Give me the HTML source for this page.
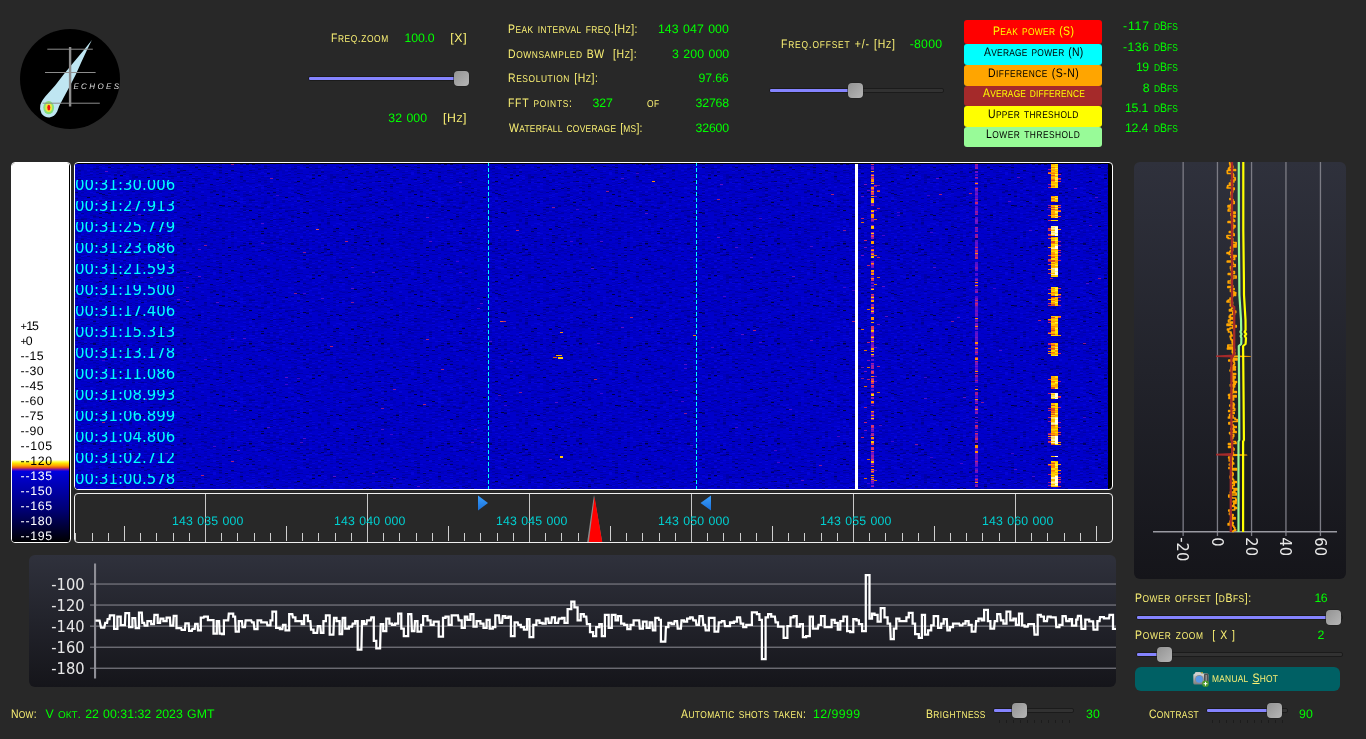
<!DOCTYPE html>
<html lang="en"><head><meta charset="utf-8"><title>Echoes</title>
<style>
html,body{margin:0;padding:0}
body{width:1366px;height:739px;background:#282828;position:relative;overflow:hidden;font-family:"Liberation Sans",sans-serif;font-size:12px}
.t{position:absolute;display:inline-block;transform-origin:0 0;white-space:pre;word-spacing:0.8px;line-height:16px;font-family:"Liberation Sans",sans-serif;font-size:12.3px}
.s{font-size:9.9px;text-transform:uppercase}.p{font-size:11px}
.abs{position:absolute}
svg{position:absolute;overflow:hidden}
.trk{position:absolute;height:3px;border:1px solid #1b1b1b;background:#323232;border-radius:2px}
.fil{position:absolute;height:3px;border:1px solid #1b1b1b;background:#8584ff;border-radius:2px}
.thm{position:absolute;width:15px;height:15px;border-radius:4px;background:linear-gradient(135deg,#939393,#b6b6b6);box-shadow:0 0 0 0.5px #1e1e1e}
.lg{position:absolute;left:964px;width:138px;border-radius:3px}
.panel{position:absolute;border-radius:6px;background:linear-gradient(#2f313c,#15151a)}
.ts{position:absolute;left:0;width:140px;height:12px;overflow:hidden;white-space:pre;color:#00ffff;font-family:"DejaVu Sans",sans-serif;}
</style></head><body>

<svg id="logo" style="left:20px;top:29px" width="100" height="100" viewBox="20 29 100 100">
<circle cx="70" cy="79" r="50" fill="#000"/>
<path d="M91.9 39.9 L83.3 50.7 L73.9 62.1 L64.4 73.4 L54.9 85.8 L45.5 96.2 Q41.2 101.5 40.3 105 Q39.2 109.5 41.5 113.5 Q44.5 117.6 49.4 117.5 Q54.5 116.8 57.2 111.5 L59.2 106 L63.4 98 L70 85.8 L75.8 74.4 L81.4 62.1 L87.1 49.8 Z" fill="#bfe6f2"/>
<ellipse cx="48.7" cy="107.6" rx="5.4" ry="6.6" fill="#86e07c"/>
<ellipse cx="48.7" cy="107.6" rx="3.4" ry="4.4" fill="#eee83c"/>
<ellipse cx="48.8" cy="107.6" rx="1.5" ry="2.8" fill="#f01010"/>
<rect x="68.9" y="47" width="2.4" height="59.5" fill="#8c8c8c"/>
<rect x="47.3" y="48.7" width="45.5" height="1" fill="#8c8c8c"/>
<rect x="45" y="72" width="50.6" height="1" fill="#8c8c8c"/>
<rect x="42.6" y="102.7" width="57.2" height="1" fill="#8c8c8c"/>
</svg>

<div class="trk" style="left:308px;top:76px;width:158px"></div>
<div class="fil" style="left:308px;top:76px;width:148px"></div>
<div class="thm" style="left:454px;top:71px"></div>
<div class="trk" style="left:769px;top:88px;width:172.5px"></div>
<div class="fil" style="left:769px;top:88px;width:81px"></div>
<div class="thm" style="left:848px;top:83px"></div>
<div class="trk" style="left:1135.8px;top:615px;width:205.2px"></div>
<div class="fil" style="left:1135.8px;top:615px;width:192.2px"></div>
<div class="thm" style="left:1326px;top:610px"></div>
<div class="trk" style="left:1135.8px;top:652px;width:205.2px"></div>
<div class="fil" style="left:1135.8px;top:652px;width:23.2px"></div>
<div class="thm" style="left:1157px;top:647px"></div>
<div class="abs" style="left:999.0px;top:720px;width:1px;height:3px;background:#1c1c1c"></div>
<div class="abs" style="left:1006.0px;top:720px;width:1px;height:3px;background:#1c1c1c"></div>
<div class="abs" style="left:1013.0px;top:720px;width:1px;height:3px;background:#1c1c1c"></div>
<div class="abs" style="left:1019.9px;top:720px;width:1px;height:3px;background:#1c1c1c"></div>
<div class="abs" style="left:1026.9px;top:720px;width:1px;height:3px;background:#1c1c1c"></div>
<div class="abs" style="left:1033.9px;top:720px;width:1px;height:3px;background:#1c1c1c"></div>
<div class="abs" style="left:1040.9px;top:720px;width:1px;height:3px;background:#1c1c1c"></div>
<div class="abs" style="left:1047.9px;top:720px;width:1px;height:3px;background:#1c1c1c"></div>
<div class="abs" style="left:1054.8px;top:720px;width:1px;height:3px;background:#1c1c1c"></div>
<div class="abs" style="left:1061.8px;top:720px;width:1px;height:3px;background:#1c1c1c"></div>
<div class="abs" style="left:1068.8px;top:720px;width:1px;height:3px;background:#1c1c1c"></div>
<div class="abs" style="left:1212.0px;top:720px;width:1px;height:3px;background:#1c1c1c"></div>
<div class="abs" style="left:1219.0px;top:720px;width:1px;height:3px;background:#1c1c1c"></div>
<div class="abs" style="left:1225.9px;top:720px;width:1px;height:3px;background:#1c1c1c"></div>
<div class="abs" style="left:1232.8px;top:720px;width:1px;height:3px;background:#1c1c1c"></div>
<div class="abs" style="left:1239.8px;top:720px;width:1px;height:3px;background:#1c1c1c"></div>
<div class="abs" style="left:1246.8px;top:720px;width:1px;height:3px;background:#1c1c1c"></div>
<div class="abs" style="left:1253.7px;top:720px;width:1px;height:3px;background:#1c1c1c"></div>
<div class="abs" style="left:1260.7px;top:720px;width:1px;height:3px;background:#1c1c1c"></div>
<div class="abs" style="left:1267.6px;top:720px;width:1px;height:3px;background:#1c1c1c"></div>
<div class="abs" style="left:1274.5px;top:720px;width:1px;height:3px;background:#1c1c1c"></div>
<div class="abs" style="left:1281.5px;top:720px;width:1px;height:3px;background:#1c1c1c"></div>
<div class="trk" style="left:992.7px;top:708px;width:79.7px"></div>
<div class="fil" style="left:992.7px;top:708px;width:21.1px"></div>
<div class="thm" style="left:1011.8px;top:703px"></div>
<div class="trk" style="left:1205.7px;top:708px;width:80.2px"></div>
<div class="fil" style="left:1205.7px;top:708px;width:63.3px"></div>
<div class="thm" style="left:1267px;top:703px"></div>
<div class="lg" style="top:20px;height:24px;background:#ff0000"></div>
<div class="lg" style="top:44px;height:21px;background:#00ffff"></div>
<div class="lg" style="top:65px;height:21px;background:#ffa500"></div>
<div class="lg" style="top:86px;height:20px;background:#a52a2a"></div>
<div class="lg" style="top:106px;height:21px;background:#ffff00"></div>
<div class="lg" style="top:127px;height:20px;background:#98fb98"></div>
<div id="cbar" class="abs" style="left:11px;top:162px;width:58px;height:379px;border:1px solid #fff;border-radius:4px;background:#000;overflow:hidden">
<div class="abs" style="left:0;top:0;width:57px;height:379px;background:linear-gradient(to bottom,#fff 0,#fff 296.8px,#ffff40 298.8px,#ffe000 300.3px,#ffa000 302.8px,#e05020 304.8px,#8010a0 306.3px,#0000e0 308.3px,#0000d0 312px,#000070 348px,#000000 379px)"></div>
</div>

<div id="wf" class="abs" style="left:74px;top:162px;width:1037px;height:326px;border:1px solid #fff;border-radius:4px;background:#000;overflow:hidden">
<svg style="left:0;top:0" width="1037" height="326" viewBox="75 163 1037 326" shape-rendering="crispEdges">
<defs><pattern id="nzp" x="75" y="164" width="198" height="100" patternUnits="userSpaceOnUse">
<rect width="198" height="100" fill="#0000cb"/>
<path d="M0 0.5h3M12 0.5h3M27 0.5h3M30 0.5h3M39 0.5h3M45 0.5h3M48 0.5h3M51 0.5h3M66 0.5h3M75 0.5h3M84 0.5h3M90 0.5h3M108 0.5h3M111 0.5h3M117 0.5h3M123 0.5h3M144 0.5h3M153 0.5h3M180 0.5h3M183 0.5h3M6 1.5h3M18 1.5h3M21 1.5h3M39 1.5h3M42 1.5h3M87 1.5h3M93 1.5h3M96 1.5h3M111 1.5h3M123 1.5h3M126 1.5h3M156 1.5h3M159 1.5h3M195 1.5h3M6 2.5h3M33 2.5h3M36 2.5h3M39 2.5h3M42 2.5h3M48 2.5h3M57 2.5h3M69 2.5h3M72 2.5h3M75 2.5h3M87 2.5h3M102 2.5h3M108 2.5h3M114 2.5h3M129 2.5h3M153 2.5h3M180 2.5h3M0 3.5h3M3 3.5h3M6 3.5h3M21 3.5h3M39 3.5h3M42 3.5h3M48 3.5h3M63 3.5h3M78 3.5h3M114 3.5h3M135 3.5h3M147 3.5h3M153 3.5h3M168 3.5h3M177 3.5h3M6 4.5h3M12 4.5h3M39 4.5h3M48 4.5h3M54 4.5h3M66 4.5h3M72 4.5h3M81 4.5h3M84 4.5h3M90 4.5h3M105 4.5h3M117 4.5h3M120 4.5h3M129 4.5h3M144 4.5h3M150 4.5h3M162 4.5h3M165 4.5h3M3 5.5h3M6 5.5h3M15 5.5h3M21 5.5h3M24 5.5h3M36 5.5h3M39 5.5h3M60 5.5h3M66 5.5h3M69 5.5h3M81 5.5h3M90 5.5h3M105 5.5h3M135 5.5h3M153 5.5h3M165 5.5h3M186 5.5h3M192 5.5h3M6 6.5h3M9 6.5h3M18 6.5h3M24 6.5h3M27 6.5h3M42 6.5h3M45 6.5h3M84 6.5h3M111 6.5h3M126 6.5h3M129 6.5h3M141 6.5h3M189 6.5h3M0 7.5h3M9 7.5h3M24 7.5h3M27 7.5h3M36 7.5h3M51 7.5h3M54 7.5h3M57 7.5h3M66 7.5h3M75 7.5h3M120 7.5h3M126 7.5h3M135 7.5h3M144 7.5h3M150 7.5h3M162 7.5h3M165 7.5h3M168 7.5h3M171 7.5h3M180 7.5h3M183 7.5h3M189 7.5h3M0 8.5h3M9 8.5h3M12 8.5h3M18 8.5h3M21 8.5h3M36 8.5h3M54 8.5h3M69 8.5h3M75 8.5h3M90 8.5h3M108 8.5h3M114 8.5h3M126 8.5h3M132 8.5h3M141 8.5h3M168 8.5h3M180 8.5h3M189 8.5h3M192 8.5h3M195 8.5h3M9 9.5h3M51 9.5h3M69 9.5h3M84 9.5h3M147 9.5h3M153 9.5h3M156 9.5h3M159 9.5h3M168 9.5h3M174 9.5h3M0 10.5h3M30 10.5h3M54 10.5h3M60 10.5h3M66 10.5h3M69 10.5h3M75 10.5h3M93 10.5h3M99 10.5h3M111 10.5h3M129 10.5h3M147 10.5h3M165 10.5h3M180 10.5h3M192 10.5h3M0 11.5h3M9 11.5h3M15 11.5h3M24 11.5h3M54 11.5h3M63 11.5h3M66 11.5h3M72 11.5h3M90 11.5h3M96 11.5h3M99 11.5h3M102 11.5h3M105 11.5h3M165 11.5h3M183 11.5h3M0 12.5h3M9 12.5h3M30 12.5h3M54 12.5h3M63 12.5h3M90 12.5h3M105 12.5h3M114 12.5h3M117 12.5h3M126 12.5h3M132 12.5h3M144 12.5h3M162 12.5h3M174 12.5h3M177 12.5h3M180 12.5h3M6 13.5h3M12 13.5h3M15 13.5h3M21 13.5h3M39 13.5h3M69 13.5h3M96 13.5h3M141 13.5h3M162 13.5h3M189 13.5h3M0 14.5h3M9 14.5h3M33 14.5h3M54 14.5h3M60 14.5h3M63 14.5h3M69 14.5h3M90 14.5h3M111 14.5h3M132 14.5h3M138 14.5h3M171 14.5h3M183 14.5h3M189 14.5h3M192 14.5h3M48 15.5h3M54 15.5h3M57 15.5h3M72 15.5h3M87 15.5h3M93 15.5h3M102 15.5h3M111 15.5h3M126 15.5h3M144 15.5h3M150 15.5h3M186 15.5h3M189 15.5h3M3 16.5h3M27 16.5h3M36 16.5h3M60 16.5h3M63 16.5h3M72 16.5h3M84 16.5h3M123 16.5h3M150 16.5h3M180 16.5h3M186 16.5h3M192 16.5h3M0 17.5h3M6 17.5h3M9 17.5h3M18 17.5h3M30 17.5h3M33 17.5h3M36 17.5h3M48 17.5h3M57 17.5h3M96 17.5h3M99 17.5h3M132 17.5h3M144 17.5h3M162 17.5h3M189 17.5h3M18 18.5h3M24 18.5h3M30 18.5h3M42 18.5h3M51 18.5h3M75 18.5h3M93 18.5h3M120 18.5h3M141 18.5h3M168 18.5h3M171 18.5h3M180 18.5h3M183 18.5h3M192 18.5h3M0 19.5h3M15 19.5h3M18 19.5h3M48 19.5h3M51 19.5h3M57 19.5h3M72 19.5h3M75 19.5h3M84 19.5h3M105 19.5h3M129 19.5h3M144 19.5h3M156 19.5h3M162 19.5h3M186 19.5h3M189 19.5h3M6 20.5h3M9 20.5h3M24 20.5h3M30 20.5h3M36 20.5h3M48 20.5h3M51 20.5h3M54 20.5h3M57 20.5h3M63 20.5h3M93 20.5h3M111 20.5h3M114 20.5h3M120 20.5h3M123 20.5h3M141 20.5h3M153 20.5h3M165 20.5h3M174 20.5h3M186 20.5h3M195 20.5h3M6 21.5h3M12 21.5h3M15 21.5h3M30 21.5h3M36 21.5h3M54 21.5h3M102 21.5h3M108 21.5h3M114 21.5h3M123 21.5h3M135 21.5h3M150 21.5h3M153 21.5h3M159 21.5h3M165 21.5h3M15 22.5h3M21 22.5h3M24 22.5h3M27 22.5h3M36 22.5h3M51 22.5h3M60 22.5h3M63 22.5h3M72 22.5h3M75 22.5h3M87 22.5h3M93 22.5h3M96 22.5h3M99 22.5h3M105 22.5h3M114 22.5h3M126 22.5h3M141 22.5h3M144 22.5h3M150 22.5h3M171 22.5h3M183 22.5h3M3 23.5h3M27 23.5h3M30 23.5h3M36 23.5h3M39 23.5h3M60 23.5h3M63 23.5h3M72 23.5h3M75 23.5h3M81 23.5h3M84 23.5h3M87 23.5h3M99 23.5h3M117 23.5h3M132 23.5h3M138 23.5h3M144 23.5h3M156 23.5h3M168 23.5h3M183 23.5h3M21 24.5h3M30 24.5h3M36 24.5h3M54 24.5h3M63 24.5h3M72 24.5h3M75 24.5h3M81 24.5h3M108 24.5h3M123 24.5h3M138 24.5h3M174 24.5h3M183 24.5h3M195 24.5h3M6 25.5h3M24 25.5h3M48 25.5h3M51 25.5h3M54 25.5h3M75 25.5h3M78 25.5h3M84 25.5h3M93 25.5h3M96 25.5h3M99 25.5h3M126 25.5h3M129 25.5h3M147 25.5h3M159 25.5h3M183 25.5h3M192 25.5h3M27 26.5h3M48 26.5h3M51 26.5h3M54 26.5h3M63 26.5h3M84 26.5h3M90 26.5h3M93 26.5h3M108 26.5h3M111 26.5h3M144 26.5h3M147 26.5h3M156 26.5h3M165 26.5h3M168 26.5h3M183 26.5h3M192 26.5h3M0 27.5h3M3 27.5h3M9 27.5h3M21 27.5h3M27 27.5h3M39 27.5h3M42 27.5h3M54 27.5h3M69 27.5h3M72 27.5h3M81 27.5h3M87 27.5h3M93 27.5h3M108 27.5h3M123 27.5h3M171 27.5h3M177 27.5h3M180 27.5h3M33 28.5h3M39 28.5h3M42 28.5h3M51 28.5h3M66 28.5h3M72 28.5h3M99 28.5h3M102 28.5h3M105 28.5h3M111 28.5h3M117 28.5h3M120 28.5h3M138 28.5h3M150 28.5h3M168 28.5h3M171 28.5h3M177 28.5h3M0 29.5h3M3 29.5h3M6 29.5h3M12 29.5h3M48 29.5h3M63 29.5h3M72 29.5h3M78 29.5h3M93 29.5h3M102 29.5h3M105 29.5h3M111 29.5h3M114 29.5h3M120 29.5h3M126 29.5h3M135 29.5h3M147 29.5h3M162 29.5h3M168 29.5h3M174 29.5h3M183 29.5h3M186 29.5h3M195 29.5h3M0 30.5h3M3 30.5h3M9 30.5h3M15 30.5h3M42 30.5h3M45 30.5h3M51 30.5h3M54 30.5h3M60 30.5h3M66 30.5h3M69 30.5h3M93 30.5h3M99 30.5h3M117 30.5h3M123 30.5h3M27 31.5h3M33 31.5h3M60 31.5h3M63 31.5h3M108 31.5h3M129 31.5h3M162 31.5h3M168 31.5h3M192 31.5h3M3 32.5h3M12 32.5h3M15 32.5h3M36 32.5h3M39 32.5h3M45 32.5h3M63 32.5h3M78 32.5h3M117 32.5h3M138 32.5h3M165 32.5h3M186 32.5h3M189 32.5h3M195 32.5h3M36 33.5h3M69 33.5h3M72 33.5h3M75 33.5h3M81 33.5h3M93 33.5h3M126 33.5h3M129 33.5h3M144 33.5h3M156 33.5h3M180 33.5h3M189 33.5h3M6 34.5h3M27 34.5h3M30 34.5h3M36 34.5h3M39 34.5h3M42 34.5h3M72 34.5h3M78 34.5h3M99 34.5h3M111 34.5h3M126 34.5h3M129 34.5h3M138 34.5h3M141 34.5h3M159 34.5h3M171 34.5h3M174 34.5h3M189 34.5h3M0 35.5h3M30 35.5h3M96 35.5h3M108 35.5h3M111 35.5h3M123 35.5h3M126 35.5h3M138 35.5h3M147 35.5h3M153 35.5h3M156 35.5h3M159 35.5h3M162 35.5h3M171 35.5h3M180 35.5h3M189 35.5h3M0 36.5h3M6 36.5h3M12 36.5h3M18 36.5h3M27 36.5h3M42 36.5h3M78 36.5h3M81 36.5h3M93 36.5h3M114 36.5h3M117 36.5h3M138 36.5h3M147 36.5h3M150 36.5h3M183 36.5h3M189 36.5h3M0 37.5h3M18 37.5h3M30 37.5h3M45 37.5h3M81 37.5h3M87 37.5h3M90 37.5h3M105 37.5h3M120 37.5h3M150 37.5h3M174 37.5h3M0 38.5h3M6 38.5h3M21 38.5h3M57 38.5h3M99 38.5h3M108 38.5h3M111 38.5h3M120 38.5h3M135 38.5h3M138 38.5h3M153 38.5h3M156 38.5h3M171 38.5h3M177 38.5h3M180 38.5h3M186 38.5h3M12 39.5h3M27 39.5h3M36 39.5h3M45 39.5h3M48 39.5h3M63 39.5h3M78 39.5h3M81 39.5h3M84 39.5h3M87 39.5h3M96 39.5h3M99 39.5h3M108 39.5h3M117 39.5h3M120 39.5h3M159 39.5h3M171 39.5h3M192 39.5h3M3 40.5h3M6 40.5h3M21 40.5h3M33 40.5h3M48 40.5h3M57 40.5h3M84 40.5h3M87 40.5h3M90 40.5h3M93 40.5h3M138 40.5h3M141 40.5h3M150 40.5h3M168 40.5h3M177 40.5h3M3 41.5h3M24 41.5h3M33 41.5h3M42 41.5h3M45 41.5h3M48 41.5h3M84 41.5h3M90 41.5h3M120 41.5h3M138 41.5h3M171 41.5h3M174 41.5h3M186 41.5h3M3 42.5h3M12 42.5h3M15 42.5h3M30 42.5h3M39 42.5h3M45 42.5h3M51 42.5h3M66 42.5h3M75 42.5h3M78 42.5h3M81 42.5h3M84 42.5h3M90 42.5h3M105 42.5h3M108 42.5h3M114 42.5h3M117 42.5h3M129 42.5h3M132 42.5h3M135 42.5h3M171 42.5h3M177 42.5h3M0 43.5h3M9 43.5h3M12 43.5h3M21 43.5h3M33 43.5h3M42 43.5h3M69 43.5h3M78 43.5h3M81 43.5h3M108 43.5h3M111 43.5h3M123 43.5h3M126 43.5h3M150 43.5h3M156 43.5h3M168 43.5h3M177 43.5h3M3 44.5h3M12 44.5h3M15 44.5h3M18 44.5h3M39 44.5h3M42 44.5h3M60 44.5h3M84 44.5h3M96 44.5h3M105 44.5h3M126 44.5h3M129 44.5h3M135 44.5h3M138 44.5h3M141 44.5h3M159 44.5h3M168 44.5h3M174 44.5h3M180 44.5h3M195 44.5h3M21 45.5h3M24 45.5h3M30 45.5h3M45 45.5h3M48 45.5h3M54 45.5h3M75 45.5h3M81 45.5h3M84 45.5h3M93 45.5h3M99 45.5h3M102 45.5h3M120 45.5h3M129 45.5h3M132 45.5h3M135 45.5h3M156 45.5h3M165 45.5h3M45 46.5h3M48 46.5h3M57 46.5h3M63 46.5h3M72 46.5h3M78 46.5h3M108 46.5h3M114 46.5h3M123 46.5h3M132 46.5h3M144 46.5h3M150 46.5h3M192 46.5h3M0 47.5h3M15 47.5h3M42 47.5h3M48 47.5h3M51 47.5h3M63 47.5h3M81 47.5h3M87 47.5h3M144 47.5h3M150 47.5h3M159 47.5h3M171 47.5h3M174 47.5h3M186 47.5h3M189 47.5h3M192 47.5h3M3 48.5h3M9 48.5h3M15 48.5h3M18 48.5h3M21 48.5h3M27 48.5h3M45 48.5h3M48 48.5h3M60 48.5h3M63 48.5h3M93 48.5h3M120 48.5h3M123 48.5h3M129 48.5h3M165 48.5h3M171 48.5h3M177 48.5h3M0 49.5h3M15 49.5h3M78 49.5h3M96 49.5h3M117 49.5h3M123 49.5h3M126 49.5h3M132 49.5h3M135 49.5h3M144 49.5h3M150 49.5h3M168 49.5h3M171 49.5h3M192 49.5h3M15 50.5h3M18 50.5h3M21 50.5h3M27 50.5h3M33 50.5h3M48 50.5h3M57 50.5h3M75 50.5h3M78 50.5h3M84 50.5h3M111 50.5h3M117 50.5h3M135 50.5h3M150 50.5h3M159 50.5h3M168 50.5h3M9 51.5h3M33 51.5h3M36 51.5h3M63 51.5h3M75 51.5h3M96 51.5h3M102 51.5h3M105 51.5h3M144 51.5h3M150 51.5h3M168 51.5h3M171 51.5h3M186 51.5h3M189 51.5h3M3 52.5h3M9 52.5h3M27 52.5h3M30 52.5h3M48 52.5h3M60 52.5h3M72 52.5h3M75 52.5h3M102 52.5h3M108 52.5h3M111 52.5h3M117 52.5h3M126 52.5h3M132 52.5h3M135 52.5h3M141 52.5h3M150 52.5h3M159 52.5h3M168 52.5h3M174 52.5h3M186 52.5h3M6 53.5h3M21 53.5h3M36 53.5h3M57 53.5h3M66 53.5h3M75 53.5h3M96 53.5h3M129 53.5h3M162 53.5h3M168 53.5h3M12 54.5h3M30 54.5h3M45 54.5h3M60 54.5h3M66 54.5h3M72 54.5h3M90 54.5h3M111 54.5h3M123 54.5h3M126 54.5h3M129 54.5h3M138 54.5h3M147 54.5h3M153 54.5h3M171 54.5h3M180 54.5h3M183 54.5h3M186 54.5h3M189 54.5h3M195 54.5h3M30 55.5h3M33 55.5h3M36 55.5h3M54 55.5h3M81 55.5h3M84 55.5h3M96 55.5h3M108 55.5h3M111 55.5h3M129 55.5h3M147 55.5h3M156 55.5h3M159 55.5h3M180 55.5h3M186 55.5h3M189 55.5h3M12 56.5h3M24 56.5h3M30 56.5h3M45 56.5h3M57 56.5h3M60 56.5h3M75 56.5h3M84 56.5h3M87 56.5h3M90 56.5h3M96 56.5h3M105 56.5h3M114 56.5h3M141 56.5h3M144 56.5h3M147 56.5h3M150 56.5h3M156 56.5h3M162 56.5h3M165 56.5h3M168 56.5h3M171 56.5h3M180 56.5h3M189 56.5h3M3 57.5h3M9 57.5h3M27 57.5h3M30 57.5h3M39 57.5h3M54 57.5h3M75 57.5h3M93 57.5h3M105 57.5h3M132 57.5h3M156 57.5h3M162 57.5h3M177 57.5h3M183 57.5h3M186 57.5h3M189 57.5h3M192 57.5h3M195 57.5h3M3 58.5h3M15 58.5h3M24 58.5h3M84 58.5h3M141 58.5h3M153 58.5h3M156 58.5h3M159 58.5h3M162 58.5h3M180 58.5h3M183 58.5h3M195 58.5h3M15 59.5h3M27 59.5h3M33 59.5h3M39 59.5h3M42 59.5h3M45 59.5h3M51 59.5h3M69 59.5h3M72 59.5h3M84 59.5h3M102 59.5h3M105 59.5h3M111 59.5h3M120 59.5h3M123 59.5h3M126 59.5h3M138 59.5h3M153 59.5h3M156 59.5h3M168 59.5h3M9 60.5h3M18 60.5h3M27 60.5h3M36 60.5h3M51 60.5h3M96 60.5h3M105 60.5h3M108 60.5h3M132 60.5h3M147 60.5h3M150 60.5h3M180 60.5h3M183 60.5h3M192 60.5h3M9 61.5h3M21 61.5h3M33 61.5h3M36 61.5h3M42 61.5h3M54 61.5h3M57 61.5h3M66 61.5h3M72 61.5h3M84 61.5h3M87 61.5h3M93 61.5h3M96 61.5h3M99 61.5h3M102 61.5h3M117 61.5h3M132 61.5h3M141 61.5h3M150 61.5h3M159 61.5h3M180 61.5h3M6 62.5h3M27 62.5h3M45 62.5h3M57 62.5h3M66 62.5h3M72 62.5h3M78 62.5h3M93 62.5h3M99 62.5h3M108 62.5h3M126 62.5h3M135 62.5h3M138 62.5h3M141 62.5h3M147 62.5h3M156 62.5h3M192 62.5h3M0 63.5h3M3 63.5h3M15 63.5h3M18 63.5h3M21 63.5h3M57 63.5h3M75 63.5h3M108 63.5h3M126 63.5h3M150 63.5h3M156 63.5h3M177 63.5h3M12 64.5h3M18 64.5h3M24 64.5h3M30 64.5h3M45 64.5h3M75 64.5h3M93 64.5h3M102 64.5h3M108 64.5h3M114 64.5h3M126 64.5h3M135 64.5h3M138 64.5h3M153 64.5h3M162 64.5h3M165 64.5h3M171 64.5h3M186 64.5h3M0 65.5h3M9 65.5h3M24 65.5h3M36 65.5h3M39 65.5h3M42 65.5h3M51 65.5h3M63 65.5h3M84 65.5h3M90 65.5h3M96 65.5h3M105 65.5h3M120 65.5h3M129 65.5h3M138 65.5h3M141 65.5h3M147 65.5h3M150 65.5h3M159 65.5h3M174 65.5h3M177 65.5h3M189 65.5h3M192 65.5h3M18 66.5h3M27 66.5h3M39 66.5h3M45 66.5h3M48 66.5h3M60 66.5h3M72 66.5h3M87 66.5h3M108 66.5h3M111 66.5h3M123 66.5h3M129 66.5h3M132 66.5h3M162 66.5h3M183 66.5h3M192 66.5h3M3 67.5h3M15 67.5h3M18 67.5h3M24 67.5h3M27 67.5h3M36 67.5h3M54 67.5h3M75 67.5h3M78 67.5h3M81 67.5h3M84 67.5h3M93 67.5h3M108 67.5h3M126 67.5h3M159 67.5h3M165 67.5h3M171 67.5h3M180 67.5h3M195 67.5h3M9 68.5h3M15 68.5h3M21 68.5h3M24 68.5h3M27 68.5h3M33 68.5h3M45 68.5h3M48 68.5h3M60 68.5h3M63 68.5h3M81 68.5h3M90 68.5h3M99 68.5h3M135 68.5h3M141 68.5h3M144 68.5h3M150 68.5h3M159 68.5h3M174 68.5h3M192 68.5h3M15 69.5h3M30 69.5h3M54 69.5h3M57 69.5h3M60 69.5h3M63 69.5h3M72 69.5h3M81 69.5h3M93 69.5h3M114 69.5h3M132 69.5h3M156 69.5h3M162 69.5h3M177 69.5h3M189 69.5h3M0 70.5h3M3 70.5h3M9 70.5h3M15 70.5h3M18 70.5h3M24 70.5h3M30 70.5h3M36 70.5h3M51 70.5h3M60 70.5h3M63 70.5h3M66 70.5h3M90 70.5h3M99 70.5h3M117 70.5h3M123 70.5h3M132 70.5h3M138 70.5h3M141 70.5h3M168 70.5h3M171 70.5h3M183 70.5h3M186 70.5h3M189 70.5h3M15 71.5h3M18 71.5h3M36 71.5h3M42 71.5h3M48 71.5h3M60 71.5h3M69 71.5h3M75 71.5h3M78 71.5h3M129 71.5h3M132 71.5h3M141 71.5h3M147 71.5h3M150 71.5h3M162 71.5h3M180 71.5h3M0 72.5h3M15 72.5h3M21 72.5h3M39 72.5h3M60 72.5h3M66 72.5h3M69 72.5h3M81 72.5h3M84 72.5h3M93 72.5h3M126 72.5h3M144 72.5h3M180 72.5h3M183 72.5h3M189 72.5h3M0 73.5h3M12 73.5h3M15 73.5h3M24 73.5h3M30 73.5h3M36 73.5h3M57 73.5h3M75 73.5h3M96 73.5h3M111 73.5h3M117 73.5h3M126 73.5h3M138 73.5h3M147 73.5h3M150 73.5h3M162 73.5h3M165 73.5h3M168 73.5h3M177 73.5h3M189 73.5h3M195 73.5h3M0 74.5h3M3 74.5h3M9 74.5h3M36 74.5h3M39 74.5h3M48 74.5h3M69 74.5h3M81 74.5h3M87 74.5h3M90 74.5h3M102 74.5h3M123 74.5h3M126 74.5h3M132 74.5h3M141 74.5h3M144 74.5h3M153 74.5h3M180 74.5h3M183 74.5h3M12 75.5h3M21 75.5h3M30 75.5h3M57 75.5h3M66 75.5h3M84 75.5h3M114 75.5h3M117 75.5h3M120 75.5h3M132 75.5h3M150 75.5h3M171 75.5h3M3 76.5h3M15 76.5h3M27 76.5h3M42 76.5h3M54 76.5h3M57 76.5h3M60 76.5h3M66 76.5h3M69 76.5h3M75 76.5h3M84 76.5h3M87 76.5h3M96 76.5h3M108 76.5h3M111 76.5h3M192 76.5h3M195 76.5h3M36 77.5h3M57 77.5h3M69 77.5h3M75 77.5h3M84 77.5h3M87 77.5h3M96 77.5h3M108 77.5h3M111 77.5h3M120 77.5h3M132 77.5h3M180 77.5h3M189 77.5h3M195 77.5h3M12 78.5h3M30 78.5h3M69 78.5h3M78 78.5h3M108 78.5h3M120 78.5h3M123 78.5h3M144 78.5h3M150 78.5h3M159 78.5h3M165 78.5h3M168 78.5h3M174 78.5h3M177 78.5h3M183 78.5h3M192 78.5h3M0 79.5h3M3 79.5h3M6 79.5h3M42 79.5h3M48 79.5h3M51 79.5h3M63 79.5h3M72 79.5h3M90 79.5h3M96 79.5h3M120 79.5h3M129 79.5h3M132 79.5h3M141 79.5h3M144 79.5h3M156 79.5h3M171 79.5h3M177 79.5h3M12 80.5h3M15 80.5h3M27 80.5h3M45 80.5h3M57 80.5h3M63 80.5h3M75 80.5h3M81 80.5h3M87 80.5h3M111 80.5h3M117 80.5h3M138 80.5h3M147 80.5h3M156 80.5h3M165 80.5h3M45 81.5h3M63 81.5h3M84 81.5h3M102 81.5h3M108 81.5h3M114 81.5h3M135 81.5h3M141 81.5h3M147 81.5h3M153 81.5h3M156 81.5h3M171 81.5h3M177 81.5h3M192 81.5h3M195 81.5h3M6 82.5h3M12 82.5h3M15 82.5h3M18 82.5h3M21 82.5h3M30 82.5h3M48 82.5h3M69 82.5h3M84 82.5h3M87 82.5h3M114 82.5h3M123 82.5h3M135 82.5h3M147 82.5h3M165 82.5h3M171 82.5h3M174 82.5h3M180 82.5h3M195 82.5h3M0 83.5h3M6 83.5h3M27 83.5h3M30 83.5h3M42 83.5h3M60 83.5h3M75 83.5h3M78 83.5h3M96 83.5h3M99 83.5h3M111 83.5h3M117 83.5h3M141 83.5h3M156 83.5h3M168 83.5h3M189 83.5h3M15 84.5h3M33 84.5h3M63 84.5h3M66 84.5h3M75 84.5h3M96 84.5h3M99 84.5h3M123 84.5h3M141 84.5h3M147 84.5h3M150 84.5h3M153 84.5h3M156 84.5h3M162 84.5h3M171 84.5h3M186 84.5h3M195 84.5h3M6 85.5h3M24 85.5h3M45 85.5h3M66 85.5h3M75 85.5h3M81 85.5h3M90 85.5h3M96 85.5h3M102 85.5h3M105 85.5h3M117 85.5h3M171 85.5h3M177 85.5h3M186 85.5h3M3 86.5h3M21 86.5h3M30 86.5h3M33 86.5h3M36 86.5h3M45 86.5h3M48 86.5h3M69 86.5h3M78 86.5h3M108 86.5h3M120 86.5h3M132 86.5h3M138 86.5h3M144 86.5h3M156 86.5h3M36 87.5h3M39 87.5h3M45 87.5h3M57 87.5h3M66 87.5h3M75 87.5h3M78 87.5h3M81 87.5h3M84 87.5h3M87 87.5h3M90 87.5h3M93 87.5h3M102 87.5h3M111 87.5h3M117 87.5h3M120 87.5h3M141 87.5h3M162 87.5h3M171 87.5h3M174 87.5h3M180 87.5h3M192 87.5h3M195 87.5h3M18 88.5h3M21 88.5h3M45 88.5h3M51 88.5h3M60 88.5h3M63 88.5h3M69 88.5h3M72 88.5h3M75 88.5h3M84 88.5h3M87 88.5h3M96 88.5h3M105 88.5h3M120 88.5h3M135 88.5h3M144 88.5h3M162 88.5h3M177 88.5h3M189 88.5h3M192 88.5h3M195 88.5h3M9 89.5h3M18 89.5h3M21 89.5h3M57 89.5h3M72 89.5h3M84 89.5h3M90 89.5h3M111 89.5h3M123 89.5h3M129 89.5h3M144 89.5h3M153 89.5h3M156 89.5h3M174 89.5h3M3 90.5h3M24 90.5h3M30 90.5h3M39 90.5h3M51 90.5h3M66 90.5h3M75 90.5h3M87 90.5h3M93 90.5h3M111 90.5h3M126 90.5h3M129 90.5h3M147 90.5h3M156 90.5h3M177 90.5h3M3 91.5h3M27 91.5h3M57 91.5h3M81 91.5h3M87 91.5h3M96 91.5h3M111 91.5h3M129 91.5h3M177 91.5h3M192 91.5h3M195 91.5h3M0 92.5h3M18 92.5h3M36 92.5h3M45 92.5h3M48 92.5h3M57 92.5h3M63 92.5h3M69 92.5h3M87 92.5h3M90 92.5h3M99 92.5h3M105 92.5h3M114 92.5h3M120 92.5h3M126 92.5h3M150 92.5h3M153 92.5h3M174 92.5h3M180 92.5h3M183 92.5h3M189 92.5h3M9 93.5h3M15 93.5h3M21 93.5h3M33 93.5h3M42 93.5h3M63 93.5h3M72 93.5h3M78 93.5h3M90 93.5h3M99 93.5h3M102 93.5h3M105 93.5h3M123 93.5h3M126 93.5h3M138 93.5h3M144 93.5h3M162 93.5h3M168 93.5h3M180 93.5h3M186 93.5h3M192 93.5h3M3 94.5h3M9 94.5h3M24 94.5h3M42 94.5h3M51 94.5h3M63 94.5h3M69 94.5h3M72 94.5h3M81 94.5h3M87 94.5h3M93 94.5h3M99 94.5h3M108 94.5h3M117 94.5h3M120 94.5h3M123 94.5h3M132 94.5h3M141 94.5h3M144 94.5h3M159 94.5h3M174 94.5h3M177 94.5h3M186 94.5h3M6 95.5h3M12 95.5h3M24 95.5h3M27 95.5h3M39 95.5h3M42 95.5h3M45 95.5h3M51 95.5h3M57 95.5h3M69 95.5h3M72 95.5h3M102 95.5h3M105 95.5h3M123 95.5h3M129 95.5h3M138 95.5h3M141 95.5h3M147 95.5h3M156 95.5h3M162 95.5h3M171 95.5h3M180 95.5h3M189 95.5h3M3 96.5h3M18 96.5h3M36 96.5h3M72 96.5h3M75 96.5h3M84 96.5h3M90 96.5h3M114 96.5h3M126 96.5h3M144 96.5h3M165 96.5h3M177 96.5h3M51 97.5h3M57 97.5h3M69 97.5h3M72 97.5h3M84 97.5h3M105 97.5h3M129 97.5h3M132 97.5h3M144 97.5h3M168 97.5h3M174 97.5h3M189 97.5h3M0 98.5h3M36 98.5h3M39 98.5h3M45 98.5h3M48 98.5h3M105 98.5h3M114 98.5h3M123 98.5h3M129 98.5h3M138 98.5h3M144 98.5h3M168 98.5h3M174 98.5h3M180 98.5h3M192 98.5h3M9 99.5h3M12 99.5h3M15 99.5h3M18 99.5h3M30 99.5h3M36 99.5h3M60 99.5h3M78 99.5h3M90 99.5h3M102 99.5h3M111 99.5h3M123 99.5h3M126 99.5h3M132 99.5h3M150 99.5h3M156 99.5h3M162 99.5h3M168 99.5h3M174 99.5h3M177 99.5h3M192 99.5h3" stroke="#0000bd" stroke-width="1" fill="none"/>
<path d="M69 0.5h3M102 0.5h3M24 1.5h3M30 1.5h3M36 1.5h3M114 1.5h3M117 1.5h3M129 1.5h3M144 1.5h3M183 1.5h3M189 1.5h3M21 2.5h3M63 2.5h3M120 2.5h3M126 2.5h3M135 2.5h3M141 2.5h3M168 2.5h3M192 2.5h3M138 3.5h3M141 3.5h3M156 3.5h3M180 3.5h3M189 3.5h3M195 3.5h3M0 4.5h3M18 4.5h3M36 4.5h3M45 4.5h3M93 4.5h3M183 4.5h3M186 4.5h3M192 4.5h3M18 5.5h3M63 6.5h3M75 6.5h3M177 6.5h3M3 7.5h3M15 7.5h3M21 7.5h3M42 7.5h3M105 7.5h3M156 7.5h3M159 7.5h3M39 8.5h3M42 8.5h3M93 8.5h3M111 8.5h3M117 8.5h3M129 8.5h3M174 8.5h3M177 8.5h3M3 9.5h3M27 9.5h3M42 9.5h3M75 9.5h3M93 9.5h3M96 9.5h3M144 9.5h3M180 9.5h3M3 10.5h3M15 10.5h3M21 10.5h3M33 10.5h3M48 10.5h3M57 10.5h3M63 10.5h3M105 10.5h3M108 10.5h3M132 10.5h3M135 10.5h3M12 11.5h3M57 11.5h3M78 11.5h3M81 11.5h3M108 11.5h3M111 11.5h3M129 11.5h3M150 11.5h3M171 11.5h3M186 11.5h3M3 12.5h3M45 12.5h3M57 12.5h3M99 12.5h3M120 12.5h3M0 13.5h3M18 13.5h3M57 13.5h3M66 13.5h3M105 13.5h3M111 13.5h3M132 13.5h3M153 13.5h3M165 13.5h3M186 13.5h3M192 13.5h3M57 14.5h3M87 14.5h3M96 14.5h3M120 14.5h3M150 14.5h3M165 14.5h3M177 14.5h3M195 14.5h3M15 15.5h3M27 15.5h3M36 15.5h3M81 15.5h3M90 15.5h3M120 15.5h3M129 15.5h3M138 15.5h3M156 15.5h3M165 15.5h3M183 15.5h3M51 16.5h3M57 16.5h3M75 16.5h3M81 16.5h3M189 16.5h3M75 17.5h3M81 17.5h3M111 17.5h3M120 17.5h3M153 17.5h3M168 17.5h3M12 18.5h3M63 18.5h3M69 18.5h3M87 18.5h3M96 18.5h3M114 18.5h3M165 18.5h3M189 18.5h3M171 19.5h3M174 19.5h3M177 19.5h3M195 19.5h3M33 20.5h3M45 20.5h3M75 20.5h3M21 21.5h3M42 21.5h3M78 21.5h3M84 21.5h3M105 21.5h3M111 21.5h3M117 21.5h3M138 21.5h3M192 21.5h3M195 21.5h3M9 22.5h3M12 22.5h3M39 22.5h3M42 22.5h3M156 22.5h3M195 22.5h3M48 23.5h3M135 23.5h3M33 24.5h3M111 24.5h3M117 24.5h3M153 24.5h3M87 25.5h3M132 25.5h3M135 25.5h3M144 25.5h3M6 26.5h3M18 26.5h3M33 26.5h3M60 26.5h3M162 26.5h3M189 26.5h3M195 26.5h3M66 27.5h3M78 27.5h3M84 27.5h3M117 27.5h3M135 27.5h3M141 27.5h3M162 27.5h3M183 27.5h3M6 28.5h3M69 28.5h3M84 28.5h3M147 28.5h3M186 28.5h3M192 28.5h3M153 29.5h3M63 30.5h3M111 30.5h3M159 30.5h3M162 30.5h3M168 30.5h3M177 30.5h3M183 30.5h3M3 31.5h3M42 31.5h3M45 31.5h3M51 31.5h3M96 31.5h3M99 31.5h3M147 31.5h3M171 31.5h3M6 32.5h3M9 32.5h3M27 32.5h3M87 32.5h3M90 32.5h3M93 32.5h3M105 32.5h3M114 32.5h3M135 32.5h3M168 32.5h3M30 33.5h3M66 33.5h3M117 33.5h3M33 34.5h3M75 34.5h3M105 34.5h3M117 34.5h3M120 34.5h3M183 34.5h3M63 35.5h3M69 35.5h3M75 35.5h3M93 35.5h3M102 35.5h3M174 35.5h3M177 35.5h3M9 36.5h3M60 36.5h3M66 36.5h3M72 36.5h3M75 36.5h3M87 36.5h3M153 36.5h3M168 36.5h3M9 37.5h3M15 37.5h3M42 37.5h3M72 37.5h3M102 37.5h3M141 37.5h3M189 37.5h3M192 37.5h3M9 38.5h3M30 38.5h3M48 38.5h3M162 38.5h3M174 38.5h3M189 38.5h3M192 38.5h3M39 39.5h3M54 39.5h3M60 39.5h3M93 39.5h3M129 39.5h3M135 39.5h3M186 39.5h3M27 40.5h3M42 40.5h3M51 40.5h3M75 40.5h3M81 40.5h3M96 40.5h3M129 40.5h3M54 41.5h3M60 41.5h3M96 41.5h3M126 41.5h3M129 41.5h3M159 41.5h3M168 41.5h3M21 42.5h3M93 42.5h3M102 42.5h3M111 42.5h3M123 42.5h3M159 42.5h3M162 42.5h3M174 42.5h3M189 42.5h3M6 43.5h3M15 43.5h3M39 43.5h3M54 43.5h3M72 43.5h3M105 43.5h3M135 43.5h3M144 43.5h3M171 43.5h3M180 43.5h3M183 43.5h3M9 44.5h3M30 44.5h3M36 44.5h3M156 44.5h3M165 44.5h3M183 44.5h3M0 45.5h3M60 45.5h3M141 45.5h3M168 45.5h3M171 45.5h3M12 46.5h3M15 46.5h3M21 46.5h3M33 46.5h3M42 46.5h3M75 46.5h3M81 46.5h3M102 46.5h3M3 47.5h3M24 47.5h3M39 47.5h3M45 47.5h3M60 47.5h3M75 47.5h3M84 47.5h3M162 47.5h3M165 47.5h3M183 47.5h3M72 48.5h3M84 48.5h3M90 48.5h3M138 48.5h3M168 48.5h3M69 49.5h3M87 49.5h3M90 49.5h3M111 49.5h3M180 49.5h3M45 50.5h3M114 50.5h3M147 50.5h3M156 50.5h3M162 50.5h3M189 50.5h3M195 50.5h3M15 51.5h3M18 51.5h3M45 51.5h3M78 51.5h3M81 51.5h3M108 51.5h3M129 51.5h3M141 51.5h3M21 52.5h3M36 52.5h3M51 52.5h3M162 52.5h3M165 52.5h3M192 52.5h3M195 52.5h3M18 53.5h3M84 53.5h3M90 53.5h3M159 53.5h3M183 53.5h3M6 54.5h3M9 54.5h3M27 54.5h3M144 54.5h3M174 54.5h3M3 55.5h3M9 55.5h3M15 55.5h3M48 55.5h3M69 55.5h3M78 55.5h3M90 55.5h3M99 55.5h3M120 55.5h3M135 55.5h3M144 55.5h3M171 55.5h3M183 55.5h3M192 55.5h3M18 56.5h3M48 56.5h3M54 56.5h3M69 56.5h3M78 56.5h3M138 56.5h3M6 57.5h3M36 57.5h3M48 57.5h3M87 57.5h3M102 57.5h3M111 57.5h3M114 57.5h3M135 57.5h3M144 57.5h3M153 57.5h3M33 58.5h3M90 58.5h3M93 58.5h3M117 58.5h3M192 58.5h3M18 59.5h3M21 59.5h3M30 59.5h3M117 59.5h3M129 59.5h3M159 59.5h3M180 59.5h3M6 60.5h3M54 60.5h3M72 60.5h3M84 60.5h3M99 60.5h3M102 60.5h3M111 60.5h3M144 60.5h3M171 60.5h3M195 60.5h3M0 61.5h3M15 61.5h3M39 61.5h3M45 61.5h3M111 61.5h3M120 61.5h3M144 61.5h3M3 62.5h3M36 62.5h3M102 62.5h3M105 62.5h3M111 62.5h3M117 62.5h3M45 63.5h3M54 63.5h3M93 63.5h3M111 63.5h3M114 63.5h3M132 63.5h3M141 63.5h3M147 63.5h3M162 63.5h3M180 63.5h3M189 63.5h3M15 64.5h3M48 64.5h3M60 64.5h3M84 64.5h3M90 64.5h3M147 64.5h3M3 65.5h3M6 65.5h3M33 65.5h3M48 65.5h3M60 65.5h3M126 65.5h3M12 66.5h3M30 66.5h3M36 66.5h3M63 66.5h3M138 66.5h3M141 66.5h3M144 66.5h3M147 66.5h3M12 67.5h3M66 67.5h3M102 67.5h3M156 67.5h3M177 67.5h3M183 67.5h3M0 68.5h3M18 68.5h3M138 68.5h3M153 68.5h3M171 68.5h3M177 68.5h3M0 69.5h3M3 69.5h3M99 69.5h3M126 69.5h3M135 69.5h3M138 69.5h3M12 70.5h3M48 70.5h3M93 70.5h3M108 70.5h3M120 70.5h3M177 70.5h3M30 71.5h3M39 71.5h3M51 71.5h3M84 71.5h3M108 71.5h3M168 71.5h3M192 71.5h3M6 72.5h3M9 72.5h3M45 72.5h3M63 72.5h3M90 72.5h3M102 72.5h3M129 72.5h3M150 72.5h3M192 72.5h3M81 73.5h3M93 73.5h3M120 73.5h3M135 73.5h3M6 74.5h3M21 74.5h3M51 74.5h3M84 74.5h3M93 74.5h3M105 74.5h3M129 74.5h3M150 74.5h3M189 74.5h3M192 74.5h3M195 74.5h3M33 75.5h3M42 75.5h3M69 75.5h3M75 75.5h3M81 75.5h3M90 75.5h3M105 75.5h3M108 75.5h3M123 75.5h3M126 75.5h3M138 75.5h3M144 75.5h3M21 76.5h3M81 76.5h3M138 76.5h3M147 76.5h3M165 76.5h3M27 77.5h3M33 77.5h3M48 77.5h3M66 77.5h3M129 77.5h3M147 77.5h3M171 77.5h3M6 78.5h3M18 78.5h3M21 78.5h3M111 78.5h3M156 78.5h3M27 79.5h3M33 79.5h3M60 79.5h3M135 79.5h3M180 79.5h3M189 79.5h3M195 79.5h3M21 80.5h3M33 80.5h3M39 80.5h3M51 80.5h3M78 80.5h3M114 80.5h3M135 80.5h3M30 81.5h3M33 81.5h3M57 81.5h3M126 81.5h3M129 81.5h3M0 82.5h3M24 82.5h3M45 82.5h3M63 82.5h3M75 82.5h3M81 82.5h3M105 82.5h3M129 82.5h3M132 82.5h3M156 82.5h3M183 82.5h3M45 83.5h3M63 83.5h3M87 83.5h3M108 83.5h3M132 83.5h3M138 83.5h3M174 83.5h3M192 83.5h3M195 83.5h3M90 84.5h3M117 84.5h3M132 84.5h3M135 84.5h3M168 84.5h3M183 84.5h3M93 85.5h3M126 85.5h3M141 85.5h3M144 85.5h3M168 85.5h3M6 86.5h3M18 86.5h3M27 86.5h3M51 86.5h3M63 86.5h3M81 86.5h3M87 86.5h3M90 86.5h3M102 86.5h3M117 86.5h3M168 86.5h3M24 87.5h3M51 87.5h3M69 87.5h3M96 87.5h3M108 87.5h3M129 87.5h3M177 87.5h3M3 88.5h3M36 88.5h3M42 88.5h3M81 88.5h3M99 88.5h3M117 88.5h3M0 89.5h3M24 89.5h3M93 89.5h3M114 89.5h3M138 89.5h3M150 89.5h3M165 89.5h3M6 90.5h3M9 90.5h3M54 90.5h3M69 90.5h3M72 90.5h3M102 90.5h3M141 90.5h3M159 90.5h3M162 90.5h3M171 90.5h3M60 91.5h3M84 91.5h3M114 91.5h3M120 91.5h3M180 91.5h3M3 92.5h3M108 92.5h3M132 92.5h3M6 93.5h3M24 93.5h3M108 93.5h3M141 93.5h3M150 93.5h3M153 93.5h3M174 93.5h3M21 94.5h3M36 94.5h3M39 94.5h3M75 94.5h3M78 94.5h3M135 94.5h3M63 95.5h3M93 95.5h3M99 95.5h3M168 95.5h3M186 95.5h3M9 96.5h3M21 96.5h3M69 96.5h3M159 96.5h3M36 97.5h3M42 97.5h3M75 97.5h3M183 97.5h3M18 98.5h3M30 98.5h3M63 98.5h3M120 98.5h3M135 98.5h3M159 98.5h3M171 98.5h3M0 99.5h3M21 99.5h3M33 99.5h3M45 99.5h3M57 99.5h3M72 99.5h3M105 99.5h3M120 99.5h3M141 99.5h3" stroke="#0000ab" stroke-width="1" fill="none"/>
<path d="M33 0.5h3M81 0.5h3M165 0.5h3M51 1.5h3M84 1.5h3M78 2.5h3M189 2.5h3M21 4.5h3M42 4.5h3M102 4.5h3M189 4.5h3M72 5.5h3M138 5.5h3M183 5.5h3M3 6.5h3M69 6.5h3M105 6.5h3M144 6.5h3M174 6.5h3M48 7.5h3M93 7.5h3M102 7.5h3M48 8.5h3M144 8.5h3M165 8.5h3M24 9.5h3M78 9.5h3M39 10.5h3M39 11.5h3M84 11.5h3M60 12.5h3M93 12.5h3M96 12.5h3M24 13.5h3M60 13.5h3M129 13.5h3M144 13.5h3M117 14.5h3M123 14.5h3M120 16.5h3M153 16.5h3M168 16.5h3M102 17.5h3M183 17.5h3M21 18.5h3M57 18.5h3M66 18.5h3M78 18.5h3M150 18.5h3M30 19.5h3M90 19.5h3M123 19.5h3M126 19.5h3M147 19.5h3M153 19.5h3M117 20.5h3M48 22.5h3M189 22.5h3M93 23.5h3M108 23.5h3M180 23.5h3M192 23.5h3M0 24.5h3M24 26.5h3M96 26.5h3M138 26.5h3M57 27.5h3M138 27.5h3M147 27.5h3M21 28.5h3M75 28.5h3M135 28.5h3M33 29.5h3M96 30.5h3M171 30.5h3M30 31.5h3M126 31.5h3M174 31.5h3M195 31.5h3M18 32.5h3M96 32.5h3M60 33.5h3M90 33.5h3M108 33.5h3M153 33.5h3M0 34.5h3M54 34.5h3M117 35.5h3M24 36.5h3M45 36.5h3M96 36.5h3M156 36.5h3M174 36.5h3M177 36.5h3M24 37.5h3M48 37.5h3M93 37.5h3M129 38.5h3M138 39.5h3M162 39.5h3M189 39.5h3M78 40.5h3M99 40.5h3M108 40.5h3M0 41.5h3M36 41.5h3M87 41.5h3M102 41.5h3M87 42.5h3M147 42.5h3M180 42.5h3M84 43.5h3M114 43.5h3M186 43.5h3M6 44.5h3M186 44.5h3M72 45.5h3M18 46.5h3M168 46.5h3M12 47.5h3M57 47.5h3M33 48.5h3M99 48.5h3M132 48.5h3M195 48.5h3M6 49.5h3M51 49.5h3M72 50.5h3M123 50.5h3M183 50.5h3M120 51.5h3M18 52.5h3M54 52.5h3M117 53.5h3M123 53.5h3M54 54.5h3M0 55.5h3M6 55.5h3M66 55.5h3M81 56.5h3M123 56.5h3M195 56.5h3M72 57.5h3M141 57.5h3M150 57.5h3M54 58.5h3M96 58.5h3M54 59.5h3M12 60.5h3M45 60.5h3M108 61.5h3M114 61.5h3M24 62.5h3M174 62.5h3M195 62.5h3M78 64.5h3M96 64.5h3M120 64.5h3M135 65.5h3M90 66.5h3M120 66.5h3M135 67.5h3M102 68.5h3M156 68.5h3M192 69.5h3M75 70.5h3M87 70.5h3M126 70.5h3M156 70.5h3M57 71.5h3M99 72.5h3M156 72.5h3M54 73.5h3M84 73.5h3M60 74.5h3M6 75.5h3M27 75.5h3M0 76.5h3M105 76.5h3M39 77.5h3M105 77.5h3M126 77.5h3M174 77.5h3M186 77.5h3M3 78.5h3M129 78.5h3M189 78.5h3M195 78.5h3M9 79.5h3M15 79.5h3M114 79.5h3M147 79.5h3M168 79.5h3M192 79.5h3M6 80.5h3M90 80.5h3M93 80.5h3M102 80.5h3M108 80.5h3M174 80.5h3M27 81.5h3M78 81.5h3M165 81.5h3M162 82.5h3M162 83.5h3M51 84.5h3M81 84.5h3M33 85.5h3M51 85.5h3M192 85.5h3M39 86.5h3M153 86.5h3M189 86.5h3M195 86.5h3M0 87.5h3M12 87.5h3M21 87.5h3M183 87.5h3M57 88.5h3M78 88.5h3M27 89.5h3M33 89.5h3M36 89.5h3M45 89.5h3M141 89.5h3M192 89.5h3M108 90.5h3M120 90.5h3M51 91.5h3M54 91.5h3M99 91.5h3M12 92.5h3M123 92.5h3M171 94.5h3M3 95.5h3M66 95.5h3M81 95.5h3M132 95.5h3M15 96.5h3M48 96.5h3M96 96.5h3M153 96.5h3M63 97.5h3M141 97.5h3M177 97.5h3M111 98.5h3M144 99.5h3" stroke="#000092" stroke-width="1" fill="none"/>
<path d="M171 0.5h3M177 0.5h3M132 2.5h3M33 3.5h3M66 3.5h3M120 3.5h3M144 3.5h3M123 5.5h3M108 6.5h3M156 6.5h3M102 8.5h3M87 9.5h3M150 9.5h3M192 9.5h3M114 10.5h3M165 12.5h3M3 15.5h3M141 15.5h3M105 17.5h3M135 20.5h3M117 22.5h3M90 24.5h3M96 24.5h3M159 26.5h3M111 27.5h3M0 28.5h3M24 29.5h3M192 29.5h3M27 30.5h3M147 32.5h3M111 36.5h3M66 38.5h3M147 41.5h3M153 42.5h3M168 42.5h3M75 43.5h3M117 45.5h3M24 49.5h3M33 49.5h3M63 50.5h3M57 51.5h3M183 52.5h3M24 53.5h3M105 53.5h3M108 54.5h3M141 54.5h3M18 57.5h3M111 58.5h3M84 62.5h3M87 63.5h3M129 63.5h3M168 66.5h3M60 67.5h3M186 67.5h3M81 71.5h3M108 74.5h3M147 74.5h3M63 77.5h3M18 79.5h3M18 80.5h3M69 80.5h3M51 81.5h3M96 81.5h3M168 81.5h3M177 82.5h3M24 84.5h3M159 86.5h3M186 86.5h3M48 88.5h3M57 90.5h3M84 90.5h3M99 90.5h3M30 91.5h3M147 91.5h3M153 91.5h3M117 93.5h3M30 95.5h3M66 99.5h3" stroke="#00006a" stroke-width="1" fill="none"/>
<path d="M45 11.5h3M72 13.5h3M39 14.5h3M24 17.5h3M81 25.5h3M141 30.5h3M12 33.5h3M33 37.5h3M159 37.5h3M102 38.5h3M144 41.5h3M174 46.5h3M30 48.5h3M66 51.5h3M123 51.5h3M177 55.5h3M33 62.5h3M63 64.5h3M189 64.5h3M78 65.5h3M186 69.5h3M93 77.5h3M81 78.5h3M108 79.5h3M174 79.5h3M153 83.5h3M54 85.5h3M174 95.5h3" stroke="#000040" stroke-width="1" fill="none"/>
<path d="M9 0.5h3M96 0.5h3M147 0.5h3M162 0.5h3M168 0.5h3M66 1.5h3M120 1.5h3M141 1.5h3M174 1.5h3M24 2.5h3M45 2.5h3M105 2.5h3M15 3.5h3M27 3.5h3M36 3.5h3M45 3.5h3M60 3.5h3M81 3.5h3M165 3.5h3M27 4.5h3M30 4.5h3M96 4.5h3M123 4.5h3M177 4.5h3M48 5.5h3M189 5.5h3M12 6.5h3M48 6.5h3M66 6.5h3M81 6.5h3M153 6.5h3M63 7.5h3M84 7.5h3M114 7.5h3M132 7.5h3M192 7.5h3M138 8.5h3M150 8.5h3M159 8.5h3M186 8.5h3M15 9.5h3M39 9.5h3M138 9.5h3M162 9.5h3M183 9.5h3M189 9.5h3M138 10.5h3M156 10.5h3M33 11.5h3M48 11.5h3M75 11.5h3M120 11.5h3M177 11.5h3M33 12.5h3M36 12.5h3M51 12.5h3M102 12.5h3M153 12.5h3M171 12.5h3M189 12.5h3M192 12.5h3M36 13.5h3M45 13.5h3M90 13.5h3M108 13.5h3M117 13.5h3M156 13.5h3M177 13.5h3M51 14.5h3M126 14.5h3M30 15.5h3M60 15.5h3M78 15.5h3M132 15.5h3M177 15.5h3M9 16.5h3M21 16.5h3M48 16.5h3M66 16.5h3M90 16.5h3M144 16.5h3M117 17.5h3M126 17.5h3M141 17.5h3M171 17.5h3M195 17.5h3M15 18.5h3M39 18.5h3M45 18.5h3M60 18.5h3M84 18.5h3M99 18.5h3M105 18.5h3M108 18.5h3M147 18.5h3M153 18.5h3M195 18.5h3M27 19.5h3M63 19.5h3M69 19.5h3M114 19.5h3M120 19.5h3M21 20.5h3M42 20.5h3M69 20.5h3M84 20.5h3M87 20.5h3M129 20.5h3M147 20.5h3M159 20.5h3M183 20.5h3M51 21.5h3M141 21.5h3M171 21.5h3M183 21.5h3M186 21.5h3M30 22.5h3M66 22.5h3M84 22.5h3M108 22.5h3M165 22.5h3M174 22.5h3M180 22.5h3M15 23.5h3M123 23.5h3M159 23.5h3M165 23.5h3M177 23.5h3M186 23.5h3M3 24.5h3M15 24.5h3M18 24.5h3M39 24.5h3M42 24.5h3M57 24.5h3M87 24.5h3M156 24.5h3M186 24.5h3M45 25.5h3M69 25.5h3M102 25.5h3M108 25.5h3M177 25.5h3M3 26.5h3M36 26.5h3M105 26.5h3M153 26.5h3M33 27.5h3M126 27.5h3M168 27.5h3M174 27.5h3M192 27.5h3M15 28.5h3M45 28.5h3M96 28.5h3M108 28.5h3M126 28.5h3M174 28.5h3M18 29.5h3M45 29.5h3M57 29.5h3M84 29.5h3M108 29.5h3M156 29.5h3M159 29.5h3M33 30.5h3M81 30.5h3M150 30.5h3M180 30.5h3M186 30.5h3M39 31.5h3M78 31.5h3M0 32.5h3M81 32.5h3M99 32.5h3M162 32.5h3M24 33.5h3M78 33.5h3M96 33.5h3M132 33.5h3M138 33.5h3M150 33.5h3M18 34.5h3M24 34.5h3M69 34.5h3M108 34.5h3M165 34.5h3M9 35.5h3M12 35.5h3M24 35.5h3M27 35.5h3M45 35.5h3M99 35.5h3M105 35.5h3M132 35.5h3M165 35.5h3M3 36.5h3M15 36.5h3M33 36.5h3M63 36.5h3M102 36.5h3M21 37.5h3M39 37.5h3M69 37.5h3M108 37.5h3M144 37.5h3M153 37.5h3M162 37.5h3M165 37.5h3M168 37.5h3M177 37.5h3M180 37.5h3M24 38.5h3M63 38.5h3M150 38.5h3M165 38.5h3M69 39.5h3M168 39.5h3M195 39.5h3M18 40.5h3M111 40.5h3M117 40.5h3M156 40.5h3M174 40.5h3M180 40.5h3M9 41.5h3M51 41.5h3M63 41.5h3M75 41.5h3M93 41.5h3M114 41.5h3M117 41.5h3M135 41.5h3M183 41.5h3M192 42.5h3M117 43.5h3M165 43.5h3M192 43.5h3M27 44.5h3M54 44.5h3M81 44.5h3M150 44.5h3M9 45.5h3M36 45.5h3M96 45.5h3M183 45.5h3M195 45.5h3M36 46.5h3M54 46.5h3M93 46.5h3M171 46.5h3M21 47.5h3M27 47.5h3M78 47.5h3M108 47.5h3M126 47.5h3M132 47.5h3M138 47.5h3M168 47.5h3M54 48.5h3M75 48.5h3M114 48.5h3M126 48.5h3M147 48.5h3M159 48.5h3M186 48.5h3M3 49.5h3M27 49.5h3M36 49.5h3M153 49.5h3M165 50.5h3M180 50.5h3M0 51.5h3M6 51.5h3M99 51.5h3M126 51.5h3M135 51.5h3M138 51.5h3M0 52.5h3M90 52.5h3M171 52.5h3M27 53.5h3M54 53.5h3M63 53.5h3M72 53.5h3M99 53.5h3M126 53.5h3M132 53.5h3M153 53.5h3M0 54.5h3M15 54.5h3M87 54.5h3M96 54.5h3M159 54.5h3M168 54.5h3M21 55.5h3M93 55.5h3M105 55.5h3M114 55.5h3M132 55.5h3M162 55.5h3M195 55.5h3M0 56.5h3M36 56.5h3M99 56.5h3M15 57.5h3M159 57.5h3M174 57.5h3M21 58.5h3M39 58.5h3M45 58.5h3M69 58.5h3M81 58.5h3M99 58.5h3M126 58.5h3M138 58.5h3M168 58.5h3M174 58.5h3M63 59.5h3M66 59.5h3M108 59.5h3M132 59.5h3M150 59.5h3M3 60.5h3M39 60.5h3M66 60.5h3M93 60.5h3M138 60.5h3M159 60.5h3M186 60.5h3M12 61.5h3M18 61.5h3M60 61.5h3M69 61.5h3M78 61.5h3M177 61.5h3M0 62.5h3M30 62.5h3M90 62.5h3M165 62.5h3M168 62.5h3M177 62.5h3M186 62.5h3M6 63.5h3M42 63.5h3M78 63.5h3M174 63.5h3M6 64.5h3M27 64.5h3M42 64.5h3M87 64.5h3M117 64.5h3M144 64.5h3M168 64.5h3M174 64.5h3M180 64.5h3M168 65.5h3M9 66.5h3M15 66.5h3M21 66.5h3M33 66.5h3M96 66.5h3M159 66.5h3M165 66.5h3M180 66.5h3M6 67.5h3M9 67.5h3M120 67.5h3M129 67.5h3M138 67.5h3M153 67.5h3M12 68.5h3M30 68.5h3M51 68.5h3M66 68.5h3M78 68.5h3M168 68.5h3M195 68.5h3M24 69.5h3M36 69.5h3M48 69.5h3M66 69.5h3M69 69.5h3M123 69.5h3M129 69.5h3M180 69.5h3M6 70.5h3M45 70.5h3M81 70.5h3M66 71.5h3M90 71.5h3M96 71.5h3M105 71.5h3M123 71.5h3M174 71.5h3M177 71.5h3M186 71.5h3M195 71.5h3M3 72.5h3M27 72.5h3M36 72.5h3M48 72.5h3M57 72.5h3M96 72.5h3M141 72.5h3M153 72.5h3M3 73.5h3M27 73.5h3M48 73.5h3M90 73.5h3M102 73.5h3M153 73.5h3M159 73.5h3M180 73.5h3M12 74.5h3M72 74.5h3M75 74.5h3M120 74.5h3M159 74.5h3M174 74.5h3M177 74.5h3M51 75.5h3M153 75.5h3M30 76.5h3M36 76.5h3M150 76.5h3M186 76.5h3M9 77.5h3M42 77.5h3M162 77.5h3M165 77.5h3M183 77.5h3M9 78.5h3M15 78.5h3M27 78.5h3M45 78.5h3M171 78.5h3M186 78.5h3M54 79.5h3M186 79.5h3M0 80.5h3M60 80.5h3M123 80.5h3M186 80.5h3M18 81.5h3M48 81.5h3M54 81.5h3M99 81.5h3M117 81.5h3M189 81.5h3M90 82.5h3M93 82.5h3M192 82.5h3M3 83.5h3M9 83.5h3M48 83.5h3M69 83.5h3M123 83.5h3M165 83.5h3M9 84.5h3M18 84.5h3M27 84.5h3M36 84.5h3M93 84.5h3M114 84.5h3M177 84.5h3M12 85.5h3M72 85.5h3M111 85.5h3M114 85.5h3M132 85.5h3M138 85.5h3M159 85.5h3M180 85.5h3M183 85.5h3M84 86.5h3M180 86.5h3M54 87.5h3M153 87.5h3M102 88.5h3M39 89.5h3M51 89.5h3M63 89.5h3M69 89.5h3M195 89.5h3M36 90.5h3M42 90.5h3M81 90.5h3M153 90.5h3M9 91.5h3M33 91.5h3M72 91.5h3M135 91.5h3M183 91.5h3M6 92.5h3M27 92.5h3M60 92.5h3M147 92.5h3M66 93.5h3M84 93.5h3M129 93.5h3M165 93.5h3M189 93.5h3M33 94.5h3M48 94.5h3M60 94.5h3M18 95.5h3M21 95.5h3M33 95.5h3M78 95.5h3M165 95.5h3M192 95.5h3M6 96.5h3M24 96.5h3M45 96.5h3M54 96.5h3M105 96.5h3M108 96.5h3M138 96.5h3M141 96.5h3M156 96.5h3M183 96.5h3M192 96.5h3M27 97.5h3M30 97.5h3M45 97.5h3M96 97.5h3M108 97.5h3M126 97.5h3M138 97.5h3M156 97.5h3M51 98.5h3M75 98.5h3M90 98.5h3M39 99.5h3M114 99.5h3M117 99.5h3" stroke="#0404d8" stroke-width="1" fill="none"/>
</pattern></defs>
<rect x="75" y="164" width="1033" height="325" fill="url(#nzp)"/>
<rect x="570" y="241" width="3" height="1" fill="#4408d0"/>
<rect x="1074" y="188" width="3" height="1" fill="#5a10c8"/>
<rect x="897" y="212" width="3" height="1" fill="#3c08d0"/>
<rect x="969" y="193" width="3" height="1" fill="#b02070"/>
<rect x="132" y="208" width="3" height="1" fill="#4408d0"/>
<rect x="717" y="199" width="3" height="1" fill="#b02070"/>
<rect x="213" y="446" width="3" height="1" fill="#4408d0"/>
<rect x="165" y="453" width="3" height="1" fill="#5a10c8"/>
<rect x="417" y="486" width="3" height="1" fill="#4a10d0"/>
<rect x="960" y="463" width="3" height="1" fill="#4408d0"/>
<rect x="150" y="277" width="3" height="1" fill="#4a10d0"/>
<rect x="930" y="232" width="3" height="1" fill="#3a08d8"/>
<rect x="717" y="237" width="3" height="1" fill="#5a10c8"/>
<rect x="951" y="321" width="3" height="1" fill="#8a1890"/>
<rect x="231" y="461" width="3" height="1" fill="#b02070"/>
<rect x="645" y="213" width="3" height="1" fill="#5a10c8"/>
<rect x="939" y="194" width="3" height="1" fill="#b02070"/>
<rect x="837" y="436" width="3" height="1" fill="#4408d0"/>
<rect x="555" y="402" width="3" height="1" fill="#5010cc"/>
<rect x="630" y="317" width="3" height="1" fill="#b02070"/>
<rect x="351" y="288" width="3" height="1" fill="#5a10c8"/>
<rect x="957" y="317" width="3" height="1" fill="#5010cc"/>
<rect x="600" y="393" width="3" height="1" fill="#3a08d8"/>
<rect x="1008" y="201" width="3" height="1" fill="#5a10c8"/>
<rect x="861" y="378" width="3" height="1" fill="#8a1890"/>
<rect x="600" y="241" width="3" height="1" fill="#5010cc"/>
<rect x="720" y="184" width="3" height="1" fill="#5a10c8"/>
<rect x="930" y="457" width="3" height="1" fill="#3c08d0"/>
<rect x="597" y="343" width="3" height="1" fill="#5010cc"/>
<rect x="963" y="397" width="3" height="1" fill="#5a10c8"/>
<rect x="216" y="302" width="3" height="1" fill="#5010cc"/>
<rect x="1095" y="197" width="3" height="1" fill="#4a10d0"/>
<rect x="549" y="459" width="3" height="1" fill="#5010cc"/>
<rect x="510" y="361" width="3" height="1" fill="#3c08d0"/>
<rect x="108" y="400" width="3" height="1" fill="#3c08d0"/>
<rect x="333" y="476" width="3" height="1" fill="#5a10c8"/>
<rect x="831" y="194" width="3" height="1" fill="#b02070"/>
<rect x="516" y="230" width="3" height="1" fill="#b02070"/>
<rect x="684" y="364" width="3" height="1" fill="#5010cc"/>
<rect x="198" y="249" width="3" height="1" fill="#5010cc"/>
<rect x="690" y="445" width="3" height="1" fill="#3a08d8"/>
<rect x="285" y="384" width="3" height="1" fill="#3a08d8"/>
<rect x="711" y="347" width="3" height="1" fill="#4408d0"/>
<rect x="429" y="241" width="3" height="1" fill="#5a10c8"/>
<rect x="345" y="241" width="3" height="1" fill="#b02070"/>
<rect x="1086" y="283" width="3" height="1" fill="#4a10d0"/>
<rect x="819" y="465" width="3" height="1" fill="#8a1890"/>
<rect x="477" y="308" width="3" height="1" fill="#4a10d0"/>
<rect x="297" y="378" width="3" height="1" fill="#3c08d0"/>
<rect x="1011" y="453" width="3" height="1" fill="#3c08d0"/>
<rect x="267" y="427" width="3" height="1" fill="#4a10d0"/>
<rect x="774" y="450" width="3" height="1" fill="#4408d0"/>
<rect x="684" y="368" width="3" height="1" fill="#4408d0"/>
<rect x="234" y="410" width="3" height="1" fill="#4408d0"/>
<rect x="168" y="261" width="3" height="1" fill="#5a10c8"/>
<rect x="393" y="389" width="3" height="1" fill="#8a1890"/>
<rect x="243" y="338" width="3" height="1" fill="#4a10d0"/>
<rect x="231" y="164" width="3" height="1" fill="#8a1890"/>
<rect x="897" y="215" width="3" height="1" fill="#3c08d0"/>
<rect x="1017" y="177" width="3" height="1" fill="#5a10c8"/>
<rect x="393" y="478" width="3" height="1" fill="#4408d0"/>
<rect x="303" y="293" width="3" height="1" fill="#3c08d0"/>
<rect x="999" y="350" width="3" height="1" fill="#5010cc"/>
<rect x="261" y="223" width="3" height="1" fill="#5010cc"/>
<rect x="789" y="409" width="3" height="1" fill="#5010cc"/>
<rect x="552" y="207" width="3" height="1" fill="#8a1890"/>
<rect x="231" y="339" width="3" height="1" fill="#3a08d8"/>
<rect x="810" y="246" width="3" height="1" fill="#4a10d0"/>
<rect x="390" y="434" width="3" height="1" fill="#3c08d0"/>
<rect x="300" y="442" width="3" height="1" fill="#4a10d0"/>
<rect x="885" y="316" width="3" height="1" fill="#5a10c8"/>
<rect x="474" y="429" width="3" height="1" fill="#3c08d0"/>
<rect x="330" y="346" width="3" height="1" fill="#b02070"/>
<rect x="891" y="441" width="3" height="1" fill="#3c08d0"/>
<rect x="1050" y="278" width="3" height="1" fill="#b02070"/>
<rect x="441" y="369" width="3" height="1" fill="#b02070"/>
<rect x="381" y="429" width="3" height="1" fill="#5010cc"/>
<rect x="621" y="178" width="3" height="1" fill="#4a10d0"/>
<rect x="504" y="405" width="3" height="1" fill="#3a08d8"/>
<rect x="372" y="473" width="3" height="1" fill="#3c08d0"/>
<rect x="759" y="342" width="3" height="1" fill="#3c08d0"/>
<rect x="198" y="276" width="3" height="1" fill="#5a10c8"/>
<rect x="423" y="404" width="3" height="1" fill="#b02070"/>
<rect x="591" y="268" width="3" height="1" fill="#5010cc"/>
<rect x="1032" y="476" width="3" height="1" fill="#4a10d0"/>
<rect x="810" y="340" width="3" height="1" fill="#5a10c8"/>
<rect x="1089" y="225" width="3" height="1" fill="#4408d0"/>
<rect x="381" y="408" width="3" height="1" fill="#8a1890"/>
<rect x="741" y="334" width="3" height="1" fill="#5a10c8"/>
<rect x="681" y="401" width="3" height="1" fill="#4408d0"/>
<rect x="204" y="245" width="3" height="1" fill="#8a1890"/>
<rect x="270" y="178" width="3" height="1" fill="#8a1890"/>
<rect x="981" y="402" width="3" height="1" fill="#8a1890"/>
<rect x="1014" y="469" width="3" height="1" fill="#5010cc"/>
<rect x="1083" y="343" width="3" height="1" fill="#8a1890"/>
<rect x="915" y="444" width="3" height="1" fill="#8a1890"/>
<rect x="105" y="171" width="3" height="1" fill="#5a10c8"/>
<rect x="882" y="235" width="3" height="1" fill="#4408d0"/>
<rect x="372" y="272" width="3" height="1" fill="#4a10d0"/>
<rect x="459" y="272" width="3" height="1" fill="#3a08d8"/>
<rect x="843" y="287" width="3" height="1" fill="#3c08d0"/>
<rect x="471" y="442" width="3" height="1" fill="#4408d0"/>
<rect x="276" y="195" width="3" height="1" fill="#3c08d0"/>
<rect x="777" y="462" width="3" height="1" fill="#4408d0"/>
<rect x="843" y="230" width="3" height="1" fill="#8a1890"/>
<rect x="879" y="425" width="3" height="1" fill="#4a10d0"/>
<rect x="750" y="257" width="3" height="1" fill="#4a10d0"/>
<rect x="303" y="252" width="3" height="1" fill="#8a1890"/>
<rect x="801" y="480" width="3" height="1" fill="#5a10c8"/>
<rect x="927" y="195" width="3" height="1" fill="#3c08d0"/>
<rect x="870" y="435" width="3" height="1" fill="#5010cc"/>
<rect x="237" y="450" width="3" height="1" fill="#4a10d0"/>
<rect x="456" y="261" width="3" height="1" fill="#3a08d8"/>
<rect x="138" y="214" width="3" height="1" fill="#5010cc"/>
<rect x="936" y="178" width="3" height="1" fill="#5a10c8"/>
<rect x="753" y="330" width="3" height="1" fill="#b02070"/>
<rect x="498" y="395" width="3" height="1" fill="#5010cc"/>
<rect x="852" y="290" width="3" height="1" fill="#3a08d8"/>
<rect x="933" y="267" width="3" height="1" fill="#5010cc"/>
<rect x="285" y="377" width="3" height="1" fill="#5a10c8"/>
<rect x="675" y="390" width="3" height="1" fill="#3c08d0"/>
<rect x="186" y="287" width="3" height="1" fill="#4408d0"/>
<rect x="186" y="272" width="3" height="1" fill="#3a08d8"/>
<rect x="261" y="243" width="3" height="1" fill="#3c08d0"/>
<rect x="294" y="293" width="3" height="1" fill="#8a1890"/>
<rect x="792" y="276" width="3" height="1" fill="#5a10c8"/>
<rect x="684" y="413" width="3" height="1" fill="#8a1890"/>
<rect x="1098" y="278" width="3" height="1" fill="#8a1890"/>
<rect x="735" y="427" width="3" height="1" fill="#4408d0"/>
<rect x="594" y="379" width="3" height="1" fill="#b02070"/>
<rect x="621" y="327" width="3" height="1" fill="#5a10c8"/>
<rect x="636" y="173" width="3" height="1" fill="#3c08d0"/>
<rect x="924" y="398" width="3" height="1" fill="#5010cc"/>
<rect x="102" y="360" width="3" height="1" fill="#3c08d0"/>
<rect x="867" y="483" width="3" height="1" fill="#3a08d8"/>
<rect x="861" y="196" width="3" height="1" fill="#5a10c8"/>
<rect x="426" y="217" width="3" height="1" fill="#5a10c8"/>
<rect x="480" y="303" width="3" height="1" fill="#4a10d0"/>
<rect x="351" y="302" width="3" height="1" fill="#8a1890"/>
<rect x="723" y="296" width="3" height="1" fill="#4408d0"/>
<rect x="303" y="438" width="3" height="1" fill="#5010cc"/>
<rect x="576" y="209" width="3" height="1" fill="#3a08d8"/>
<rect x="162" y="257" width="3" height="1" fill="#4408d0"/>
<rect x="186" y="301" width="3" height="1" fill="#4a10d0"/>
<rect x="1047" y="209" width="3" height="1" fill="#3a08d8"/>
<rect x="201" y="475" width="3" height="1" fill="#b02070"/>
<rect x="177" y="299" width="3" height="1" fill="#5a10c8"/>
<rect x="771" y="169" width="3" height="1" fill="#3c08d0"/>
<rect x="924" y="377" width="3" height="1" fill="#3a08d8"/>
<rect x="1029" y="230" width="3" height="1" fill="#4a10d0"/>
<rect x="882" y="286" width="3" height="1" fill="#5a10c8"/>
<rect x="321" y="298" width="3" height="1" fill="#4a10d0"/>
<rect x="351" y="267" width="3" height="1" fill="#3a08d8"/>
<rect x="1038" y="320" width="3" height="1" fill="#b02070"/>
<rect x="519" y="392" width="3" height="1" fill="#8a1890"/>
<rect x="489" y="341" width="3" height="1" fill="#4a10d0"/>
<rect x="459" y="182" width="3" height="1" fill="#4a10d0"/>
<rect x="102" y="422" width="3" height="1" fill="#b02070"/>
<rect x="864" y="407" width="3" height="1" fill="#b02070"/>
<rect x="759" y="218" width="3" height="1" fill="#4408d0"/>
<rect x="1083" y="417" width="3" height="1" fill="#4408d0"/>
<rect x="852" y="321" width="3" height="1" fill="#b02070"/>
<rect x="426" y="339" width="3" height="1" fill="#b02070"/>
<rect x="1050" y="235" width="3" height="1" fill="#4408d0"/>
<rect x="606" y="191" width="3" height="1" fill="#8a1890"/>
<rect x="96" y="200" width="3" height="1" fill="#3a08d8"/>
<rect x="735" y="247" width="3" height="1" fill="#4a10d0"/>
<rect x="204" y="359" width="3" height="1" fill="#3a08d8"/>
<rect x="993" y="288" width="3" height="1" fill="#3a08d8"/>
<rect x="144" y="399" width="3" height="1" fill="#8a1890"/>
<rect x="556" y="355" width="6" height="1" fill="#ffb000"/>
<rect x="558" y="357" width="5" height="2" fill="#ffd000"/>
<rect x="553" y="357" width="4" height="1" fill="#e06000"/>
<rect x="560" y="456" width="3" height="2" fill="#ffc800"/>
<rect x="652" y="181" width="3" height="1" fill="#ff9000"/>
<rect x="500" y="321" width="3" height="1" fill="#e06040"/>
<rect x="560" y="332" width="3" height="1" fill="#ff9000"/>
<rect x="693" y="335" width="3" height="1" fill="#e08000"/>
<rect x="316" y="229" width="3" height="1" fill="#e05050"/>
<rect x="503" y="321" width="3" height="1" fill="#c03060"/>
<rect x="870.5" y="164" width="3.2" height="1" fill="#c83070"/>
<rect x="870.5" y="166" width="3.2" height="1" fill="#7010c8"/>
<rect x="870.5" y="167" width="3.2" height="1" fill="#6410cc"/>
<rect x="870.5" y="168" width="3.2" height="1" fill="#9018b0"/>
<rect x="870.5" y="169" width="3.2" height="1" fill="#5a10d0"/>
<rect x="870.5" y="171" width="3.2" height="1" fill="#ffa000"/>
<rect x="870.5" y="174" width="3.2" height="1" fill="#a020a0"/>
<rect x="870.5" y="175" width="3.2" height="1" fill="#ffa000"/>
<rect x="870.5" y="176" width="3.2" height="1" fill="#7010c8"/>
<rect x="870.5" y="177" width="3.2" height="2" fill="#d83868"/>
<rect x="870.5" y="179" width="3.2" height="2" fill="#ff8c00"/>
<rect x="870.5" y="181" width="3.2" height="1" fill="#ffa000"/>
<rect x="870.5" y="182" width="3.2" height="1" fill="#5a10d0"/>
<rect x="870.5" y="183" width="3.2" height="1" fill="#ffcc00"/>
<rect x="870.5" y="186" width="3.2" height="1" fill="#5a10d0"/>
<rect x="870.5" y="187" width="3.2" height="2" fill="#ff8c00"/>
<rect x="870.5" y="189" width="3.2" height="1" fill="#d83868"/>
<rect x="870.5" y="190" width="3.2" height="1" fill="#9018b0"/>
<rect x="870.5" y="191" width="3.2" height="1" fill="#ffa000"/>
<rect x="870.5" y="192" width="3.2" height="1" fill="#d83868"/>
<rect x="870.5" y="193" width="3.2" height="2" fill="#e04060"/>
<rect x="870.5" y="196" width="3.2" height="1" fill="#ffa000"/>
<rect x="870.5" y="198" width="3.2" height="2" fill="#ffa000"/>
<rect x="870.5" y="200" width="3.2" height="1" fill="#ffcc00"/>
<rect x="870.5" y="201" width="3.2" height="2" fill="#ffcc00"/>
<rect x="870.5" y="203" width="3.2" height="1" fill="#7010c8"/>
<rect x="870.5" y="204" width="3.2" height="1" fill="#7010c8"/>
<rect x="870.5" y="205" width="3.2" height="1" fill="#a020a0"/>
<rect x="870.5" y="210" width="3.2" height="1" fill="#ff8c00"/>
<rect x="870.5" y="211" width="3.2" height="1" fill="#ffcc00"/>
<rect x="870.5" y="212" width="3.2" height="1" fill="#6410cc"/>
<rect x="870.5" y="213" width="3.2" height="1" fill="#5a10d0"/>
<rect x="870.5" y="214" width="3.2" height="2" fill="#ffa000"/>
<rect x="870.5" y="216" width="3.2" height="2" fill="#ff8c00"/>
<rect x="870.5" y="218" width="3.2" height="1" fill="#7010c8"/>
<rect x="870.5" y="219" width="3.2" height="2" fill="#a020a0"/>
<rect x="870.5" y="221" width="3.2" height="1" fill="#5a10d0"/>
<rect x="870.5" y="225" width="3.2" height="1" fill="#a020a0"/>
<rect x="870.5" y="226" width="3.2" height="2" fill="#ffcc00"/>
<rect x="870.5" y="228" width="3.2" height="1" fill="#ffa000"/>
<rect x="870.5" y="232" width="3.2" height="1" fill="#a020a0"/>
<rect x="870.5" y="233" width="3.2" height="1" fill="#ffcc00"/>
<rect x="870.5" y="234" width="3.2" height="1" fill="#7010c8"/>
<rect x="870.5" y="235" width="3.2" height="1" fill="#d83868"/>
<rect x="870.5" y="236" width="3.2" height="1" fill="#e04060"/>
<rect x="870.5" y="237" width="3.2" height="2" fill="#9018b0"/>
<rect x="870.5" y="241" width="3.2" height="1" fill="#ffa000"/>
<rect x="870.5" y="242" width="3.2" height="2" fill="#ffa000"/>
<rect x="870.5" y="246" width="3.2" height="1" fill="#5a10d0"/>
<rect x="870.5" y="249" width="3.2" height="1" fill="#e04060"/>
<rect x="870.5" y="250" width="3.2" height="1" fill="#ffa000"/>
<rect x="870.5" y="251" width="3.2" height="2" fill="#6410cc"/>
<rect x="870.5" y="253" width="3.2" height="1" fill="#e04060"/>
<rect x="870.5" y="254" width="3.2" height="1" fill="#ffa000"/>
<rect x="870.5" y="255" width="3.2" height="1" fill="#7010c8"/>
<rect x="870.5" y="256" width="3.2" height="2" fill="#ffcc00"/>
<rect x="870.5" y="261" width="3.2" height="1" fill="#7010c8"/>
<rect x="870.5" y="262" width="3.2" height="1" fill="#7010c8"/>
<rect x="870.5" y="263" width="3.2" height="1" fill="#ff8c00"/>
<rect x="870.5" y="264" width="3.2" height="1" fill="#d83868"/>
<rect x="870.5" y="265" width="3.2" height="2" fill="#7010c8"/>
<rect x="870.5" y="267" width="3.2" height="1" fill="#6410cc"/>
<rect x="870.5" y="270" width="3.2" height="2" fill="#ffa000"/>
<rect x="870.5" y="272" width="3.2" height="1" fill="#a020a0"/>
<rect x="870.5" y="273" width="3.2" height="2" fill="#ff8c00"/>
<rect x="870.5" y="276" width="3.2" height="2" fill="#5a10d0"/>
<rect x="870.5" y="278" width="3.2" height="1" fill="#ff8c00"/>
<rect x="870.5" y="279" width="3.2" height="2" fill="#c83070"/>
<rect x="870.5" y="282" width="3.2" height="1" fill="#5a10d0"/>
<rect x="870.5" y="283" width="3.2" height="1" fill="#7010c8"/>
<rect x="870.5" y="285" width="3.2" height="2" fill="#5a10d0"/>
<rect x="870.5" y="288" width="3.2" height="1" fill="#c83070"/>
<rect x="870.5" y="289" width="3.2" height="1" fill="#ffcc00"/>
<rect x="870.5" y="294" width="3.2" height="1" fill="#d83868"/>
<rect x="870.5" y="295" width="3.2" height="1" fill="#9018b0"/>
<rect x="870.5" y="296" width="3.2" height="1" fill="#c83070"/>
<rect x="870.5" y="297" width="3.2" height="1" fill="#ffcc00"/>
<rect x="870.5" y="298" width="3.2" height="1" fill="#9018b0"/>
<rect x="870.5" y="299" width="3.2" height="1" fill="#7010c8"/>
<rect x="870.5" y="300" width="3.2" height="2" fill="#ffa000"/>
<rect x="870.5" y="304" width="3.2" height="2" fill="#a020a0"/>
<rect x="870.5" y="306" width="3.2" height="1" fill="#7010c8"/>
<rect x="870.5" y="307" width="3.2" height="2" fill="#ff8c00"/>
<rect x="870.5" y="309" width="3.2" height="1" fill="#7010c8"/>
<rect x="870.5" y="310" width="3.2" height="1" fill="#d83868"/>
<rect x="870.5" y="311" width="3.2" height="1" fill="#ffcc00"/>
<rect x="870.5" y="312" width="3.2" height="2" fill="#9018b0"/>
<rect x="870.5" y="317" width="3.2" height="1" fill="#ffa000"/>
<rect x="870.5" y="318" width="3.2" height="2" fill="#ff8c00"/>
<rect x="870.5" y="322" width="3.2" height="1" fill="#ffa000"/>
<rect x="870.5" y="326" width="3.2" height="1" fill="#e04060"/>
<rect x="870.5" y="327" width="3.2" height="1" fill="#d83868"/>
<rect x="870.5" y="328" width="3.2" height="2" fill="#e04060"/>
<rect x="870.5" y="330" width="3.2" height="1" fill="#ffcc00"/>
<rect x="870.5" y="331" width="3.2" height="1" fill="#ffa000"/>
<rect x="870.5" y="332" width="3.2" height="1" fill="#9018b0"/>
<rect x="870.5" y="333" width="3.2" height="1" fill="#5a10d0"/>
<rect x="870.5" y="334" width="3.2" height="2" fill="#7010c8"/>
<rect x="870.5" y="336" width="3.2" height="1" fill="#e04060"/>
<rect x="870.5" y="337" width="3.2" height="1" fill="#ffcc00"/>
<rect x="870.5" y="338" width="3.2" height="2" fill="#a020a0"/>
<rect x="870.5" y="340" width="3.2" height="1" fill="#7010c8"/>
<rect x="870.5" y="341" width="3.2" height="1" fill="#ffa000"/>
<rect x="870.5" y="342" width="3.2" height="2" fill="#5a10d0"/>
<rect x="870.5" y="344" width="3.2" height="1" fill="#7010c8"/>
<rect x="870.5" y="345" width="3.2" height="2" fill="#9018b0"/>
<rect x="870.5" y="347" width="3.2" height="1" fill="#9018b0"/>
<rect x="870.5" y="348" width="3.2" height="2" fill="#ffa000"/>
<rect x="870.5" y="350" width="3.2" height="1" fill="#5a10d0"/>
<rect x="870.5" y="351" width="3.2" height="1" fill="#ffa000"/>
<rect x="870.5" y="354" width="3.2" height="1" fill="#ffcc00"/>
<rect x="870.5" y="355" width="3.2" height="2" fill="#9018b0"/>
<rect x="870.5" y="359" width="3.2" height="2" fill="#6410cc"/>
<rect x="870.5" y="363" width="3.2" height="1" fill="#a020a0"/>
<rect x="870.5" y="364" width="3.2" height="1" fill="#5a10d0"/>
<rect x="870.5" y="365" width="3.2" height="2" fill="#a020a0"/>
<rect x="870.5" y="367" width="3.2" height="1" fill="#a020a0"/>
<rect x="870.5" y="368" width="3.2" height="1" fill="#a020a0"/>
<rect x="870.5" y="370" width="3.2" height="1" fill="#7010c8"/>
<rect x="870.5" y="371" width="3.2" height="2" fill="#e04060"/>
<rect x="870.5" y="373" width="3.2" height="1" fill="#c83070"/>
<rect x="870.5" y="376" width="3.2" height="1" fill="#ff8c00"/>
<rect x="870.5" y="378" width="3.2" height="1" fill="#a020a0"/>
<rect x="870.5" y="379" width="3.2" height="2" fill="#d83868"/>
<rect x="870.5" y="381" width="3.2" height="1" fill="#ff8c00"/>
<rect x="870.5" y="382" width="3.2" height="2" fill="#c83070"/>
<rect x="870.5" y="385" width="3.2" height="1" fill="#e04060"/>
<rect x="870.5" y="386" width="3.2" height="1" fill="#c83070"/>
<rect x="870.5" y="387" width="3.2" height="1" fill="#a020a0"/>
<rect x="870.5" y="389" width="3.2" height="2" fill="#5a10d0"/>
<rect x="870.5" y="393" width="3.2" height="1" fill="#e04060"/>
<rect x="870.5" y="394" width="3.2" height="1" fill="#ffcc00"/>
<rect x="870.5" y="395" width="3.2" height="1" fill="#ffcc00"/>
<rect x="870.5" y="397" width="3.2" height="2" fill="#a020a0"/>
<rect x="870.5" y="401" width="3.2" height="2" fill="#ff8c00"/>
<rect x="870.5" y="403" width="3.2" height="1" fill="#a020a0"/>
<rect x="870.5" y="405" width="3.2" height="1" fill="#6410cc"/>
<rect x="870.5" y="411" width="3.2" height="1" fill="#ff8c00"/>
<rect x="870.5" y="412" width="3.2" height="1" fill="#a020a0"/>
<rect x="870.5" y="413" width="3.2" height="1" fill="#6410cc"/>
<rect x="870.5" y="414" width="3.2" height="1" fill="#7010c8"/>
<rect x="870.5" y="415" width="3.2" height="1" fill="#ff8c00"/>
<rect x="870.5" y="416" width="3.2" height="1" fill="#6410cc"/>
<rect x="870.5" y="417" width="3.2" height="1" fill="#5a10d0"/>
<rect x="870.5" y="418" width="3.2" height="1" fill="#ffcc00"/>
<rect x="870.5" y="419" width="3.2" height="1" fill="#9018b0"/>
<rect x="870.5" y="425" width="3.2" height="2" fill="#d83868"/>
<rect x="870.5" y="427" width="3.2" height="1" fill="#c83070"/>
<rect x="870.5" y="428" width="3.2" height="1" fill="#5a10d0"/>
<rect x="870.5" y="429" width="3.2" height="1" fill="#9018b0"/>
<rect x="870.5" y="430" width="3.2" height="2" fill="#6410cc"/>
<rect x="870.5" y="433" width="3.2" height="2" fill="#a020a0"/>
<rect x="870.5" y="435" width="3.2" height="1" fill="#c83070"/>
<rect x="870.5" y="437" width="3.2" height="2" fill="#ff8c00"/>
<rect x="870.5" y="439" width="3.2" height="1" fill="#6410cc"/>
<rect x="870.5" y="441" width="3.2" height="1" fill="#ffcc00"/>
<rect x="870.5" y="442" width="3.2" height="1" fill="#ffcc00"/>
<rect x="870.5" y="443" width="3.2" height="2" fill="#e04060"/>
<rect x="870.5" y="447" width="3.2" height="1" fill="#c83070"/>
<rect x="870.5" y="448" width="3.2" height="2" fill="#d83868"/>
<rect x="870.5" y="451" width="3.2" height="1" fill="#e04060"/>
<rect x="870.5" y="452" width="3.2" height="1" fill="#5a10d0"/>
<rect x="870.5" y="453" width="3.2" height="1" fill="#7010c8"/>
<rect x="870.5" y="454" width="3.2" height="1" fill="#7010c8"/>
<rect x="870.5" y="455" width="3.2" height="2" fill="#a020a0"/>
<rect x="870.5" y="457" width="3.2" height="1" fill="#9018b0"/>
<rect x="870.5" y="458" width="3.2" height="1" fill="#9018b0"/>
<rect x="870.5" y="459" width="3.2" height="1" fill="#d83868"/>
<rect x="870.5" y="460" width="3.2" height="1" fill="#a020a0"/>
<rect x="870.5" y="461" width="3.2" height="2" fill="#ffcc00"/>
<rect x="870.5" y="463" width="3.2" height="1" fill="#7010c8"/>
<rect x="870.5" y="464" width="3.2" height="1" fill="#9018b0"/>
<rect x="870.5" y="466" width="3.2" height="1" fill="#e04060"/>
<rect x="870.5" y="469" width="3.2" height="1" fill="#ff8c00"/>
<rect x="870.5" y="470" width="3.2" height="1" fill="#9018b0"/>
<rect x="870.5" y="471" width="3.2" height="1" fill="#ff8c00"/>
<rect x="870.5" y="472" width="3.2" height="1" fill="#a020a0"/>
<rect x="870.5" y="475" width="3.2" height="1" fill="#ffa000"/>
<rect x="870.5" y="477" width="3.2" height="1" fill="#ff8c00"/>
<rect x="870.5" y="478" width="3.2" height="1" fill="#6410cc"/>
<rect x="870.5" y="479" width="3.2" height="1" fill="#ff8c00"/>
<rect x="870.5" y="480" width="3.2" height="1" fill="#7010c8"/>
<rect x="870.5" y="481" width="3.2" height="1" fill="#a020a0"/>
<rect x="870.5" y="482" width="3.2" height="2" fill="#6410cc"/>
<rect x="870.5" y="485" width="3.2" height="1" fill="#5a10d0"/>
<rect x="870.5" y="486" width="3.2" height="1" fill="#a020a0"/>
<rect x="874" y="196" width="3" height="1" fill="#7010c0"/>
<rect x="877" y="366" width="3" height="1" fill="#c02070"/>
<rect x="861" y="437" width="3" height="1" fill="#c02070"/>
<rect x="867" y="367" width="3" height="1" fill="#e07000"/>
<rect x="867" y="309" width="3" height="1" fill="#e07000"/>
<rect x="867" y="190" width="3" height="1" fill="#5a10d0"/>
<rect x="874" y="376" width="3" height="1" fill="#7010c0"/>
<rect x="864" y="350" width="3" height="1" fill="#e07000"/>
<rect x="864" y="371" width="3" height="1" fill="#7010c0"/>
<rect x="864" y="386" width="3" height="1" fill="#e07000"/>
<rect x="861" y="222" width="3" height="1" fill="#e07000"/>
<rect x="867" y="459" width="3" height="1" fill="#e07000"/>
<rect x="864" y="247" width="3" height="1" fill="#7010c0"/>
<rect x="877" y="190" width="3" height="1" fill="#c02070"/>
<rect x="861" y="367" width="3" height="1" fill="#5a10d0"/>
<rect x="864" y="422" width="3" height="1" fill="#c02070"/>
<rect x="867" y="342" width="3" height="1" fill="#c02070"/>
<rect x="864" y="430" width="3" height="1" fill="#7010c0"/>
<rect x="874" y="219" width="3" height="1" fill="#e07000"/>
<rect x="867" y="265" width="3" height="1" fill="#c02070"/>
<rect x="874" y="186" width="3" height="1" fill="#5a10d0"/>
<rect x="877" y="191" width="3" height="1" fill="#e07000"/>
<rect x="877" y="208" width="3" height="1" fill="#c02070"/>
<rect x="877" y="277" width="3" height="1" fill="#e07000"/>
<rect x="864" y="478" width="3" height="1" fill="#e07000"/>
<rect x="877" y="257" width="3" height="1" fill="#c02070"/>
<rect x="874" y="185" width="3" height="1" fill="#c02070"/>
<rect x="867" y="360" width="3" height="1" fill="#7010c0"/>
<rect x="864" y="240" width="3" height="1" fill="#c02070"/>
<rect x="877" y="185" width="3" height="1" fill="#7010c0"/>
<rect x="861" y="329" width="3" height="1" fill="#e07000"/>
<rect x="874" y="470" width="3" height="1" fill="#5a10d0"/>
<rect x="867" y="379" width="3" height="1" fill="#c02070"/>
<rect x="874" y="381" width="3" height="1" fill="#5a10d0"/>
<rect x="877" y="392" width="3" height="1" fill="#e07000"/>
<rect x="861" y="255" width="3" height="1" fill="#7010c0"/>
<rect x="874" y="480" width="3" height="1" fill="#e07000"/>
<rect x="874" y="284" width="3" height="1" fill="#e07000"/>
<rect x="874" y="255" width="3" height="1" fill="#e07000"/>
<rect x="861" y="218" width="3" height="1" fill="#c02070"/>
<rect x="874" y="347" width="3" height="1" fill="#5a10d0"/>
<rect x="874" y="210" width="3" height="1" fill="#7010c0"/>
<rect x="864" y="184" width="3" height="1" fill="#7010c0"/>
<rect x="877" y="324" width="3" height="1" fill="#7010c0"/>
<rect x="877" y="191" width="3" height="1" fill="#e07000"/>
<rect x="975" y="164" width="3" height="1" fill="#a01890"/>
<rect x="975" y="165" width="3" height="2" fill="#7010c0"/>
<rect x="975" y="167" width="3" height="1" fill="#7818c0"/>
<rect x="975" y="168" width="3" height="1" fill="#a01890"/>
<rect x="975" y="171" width="3" height="2" fill="#6a10c8"/>
<rect x="975" y="174" width="3" height="2" fill="#4a08d8"/>
<rect x="975" y="177" width="3" height="1" fill="#a01890"/>
<rect x="975" y="178" width="3" height="1" fill="#6010c8"/>
<rect x="975" y="182" width="3" height="1" fill="#6a10c8"/>
<rect x="975" y="183" width="3" height="1" fill="#ff9000"/>
<rect x="975" y="184" width="3" height="1" fill="#4a08d8"/>
<rect x="975" y="187" width="3" height="1" fill="#4a08d8"/>
<rect x="975" y="188" width="3" height="1" fill="#c82868"/>
<rect x="975" y="189" width="3" height="2" fill="#7818c0"/>
<rect x="975" y="191" width="3" height="2" fill="#5010d0"/>
<rect x="975" y="193" width="3" height="1" fill="#6a10c8"/>
<rect x="975" y="194" width="3" height="1" fill="#7818c0"/>
<rect x="975" y="195" width="3" height="2" fill="#4a08d8"/>
<rect x="975" y="197" width="3" height="1" fill="#6a10c8"/>
<rect x="975" y="198" width="3" height="1" fill="#4a08d8"/>
<rect x="975" y="199" width="3" height="1" fill="#a01890"/>
<rect x="975" y="200" width="3" height="1" fill="#4a08d8"/>
<rect x="975" y="201" width="3" height="1" fill="#5a10d0"/>
<rect x="975" y="202" width="3" height="2" fill="#c82868"/>
<rect x="975" y="204" width="3" height="1" fill="#5010d0"/>
<rect x="975" y="206" width="3" height="2" fill="#4a08d8"/>
<rect x="975" y="208" width="3" height="2" fill="#5a10d0"/>
<rect x="975" y="210" width="3" height="1" fill="#5010d0"/>
<rect x="975" y="211" width="3" height="1" fill="#a01890"/>
<rect x="975" y="212" width="3" height="1" fill="#8a18a8"/>
<rect x="975" y="213" width="3" height="1" fill="#6a10c8"/>
<rect x="975" y="214" width="3" height="1" fill="#a01890"/>
<rect x="975" y="217" width="3" height="1" fill="#5010d0"/>
<rect x="975" y="218" width="3" height="1" fill="#5010d0"/>
<rect x="975" y="219" width="3" height="1" fill="#6a10c8"/>
<rect x="975" y="220" width="3" height="2" fill="#7818c0"/>
<rect x="975" y="222" width="3" height="2" fill="#6a10c8"/>
<rect x="975" y="227" width="3" height="1" fill="#a01890"/>
<rect x="975" y="228" width="3" height="2" fill="#6a10c8"/>
<rect x="975" y="230" width="3" height="1" fill="#6010c8"/>
<rect x="975" y="231" width="3" height="1" fill="#a01890"/>
<rect x="975" y="234" width="3" height="1" fill="#a01890"/>
<rect x="975" y="235" width="3" height="1" fill="#7818c0"/>
<rect x="975" y="236" width="3" height="2" fill="#a01890"/>
<rect x="975" y="240" width="3" height="2" fill="#5010d0"/>
<rect x="975" y="242" width="3" height="2" fill="#6a10c8"/>
<rect x="975" y="244" width="3" height="2" fill="#5a10d0"/>
<rect x="975" y="246" width="3" height="1" fill="#6010c8"/>
<rect x="975" y="247" width="3" height="1" fill="#c82868"/>
<rect x="975" y="248" width="3" height="1" fill="#5010d0"/>
<rect x="975" y="249" width="3" height="1" fill="#5a10d0"/>
<rect x="975" y="250" width="3" height="1" fill="#c82868"/>
<rect x="975" y="251" width="3" height="1" fill="#c82868"/>
<rect x="975" y="252" width="3" height="1" fill="#7818c0"/>
<rect x="975" y="253" width="3" height="1" fill="#ff9000"/>
<rect x="975" y="254" width="3" height="1" fill="#8a18a8"/>
<rect x="975" y="255" width="3" height="2" fill="#8a18a8"/>
<rect x="975" y="257" width="3" height="2" fill="#c82868"/>
<rect x="975" y="262" width="3" height="2" fill="#5010d0"/>
<rect x="975" y="264" width="3" height="2" fill="#6010c8"/>
<rect x="975" y="266" width="3" height="1" fill="#5a10d0"/>
<rect x="975" y="267" width="3" height="2" fill="#8a18a8"/>
<rect x="975" y="269" width="3" height="1" fill="#5a10d0"/>
<rect x="975" y="270" width="3" height="1" fill="#5a10d0"/>
<rect x="975" y="273" width="3" height="1" fill="#5010d0"/>
<rect x="975" y="274" width="3" height="2" fill="#4a08d8"/>
<rect x="975" y="278" width="3" height="1" fill="#5010d0"/>
<rect x="975" y="279" width="3" height="2" fill="#8a18a8"/>
<rect x="975" y="282" width="3" height="1" fill="#ff9000"/>
<rect x="975" y="283" width="3" height="1" fill="#5a10d0"/>
<rect x="975" y="285" width="3" height="1" fill="#ff9000"/>
<rect x="975" y="286" width="3" height="1" fill="#4a08d8"/>
<rect x="975" y="287" width="3" height="1" fill="#4a08d8"/>
<rect x="975" y="289" width="3" height="1" fill="#6010c8"/>
<rect x="975" y="290" width="3" height="1" fill="#5a10d0"/>
<rect x="975" y="291" width="3" height="2" fill="#8a18a8"/>
<rect x="975" y="296" width="3" height="2" fill="#4a08d8"/>
<rect x="975" y="298" width="3" height="2" fill="#7010c0"/>
<rect x="975" y="300" width="3" height="1" fill="#c82868"/>
<rect x="975" y="301" width="3" height="1" fill="#5010d0"/>
<rect x="975" y="302" width="3" height="1" fill="#7818c0"/>
<rect x="975" y="303" width="3" height="1" fill="#c82868"/>
<rect x="975" y="304" width="3" height="2" fill="#a01890"/>
<rect x="975" y="306" width="3" height="1" fill="#5a10d0"/>
<rect x="975" y="307" width="3" height="1" fill="#5010d0"/>
<rect x="975" y="308" width="3" height="2" fill="#5010d0"/>
<rect x="975" y="310" width="3" height="2" fill="#7010c0"/>
<rect x="975" y="312" width="3" height="1" fill="#5010d0"/>
<rect x="975" y="313" width="3" height="1" fill="#6a10c8"/>
<rect x="975" y="314" width="3" height="2" fill="#7010c0"/>
<rect x="975" y="316" width="3" height="1" fill="#4a08d8"/>
<rect x="975" y="318" width="3" height="1" fill="#ff9000"/>
<rect x="975" y="319" width="3" height="1" fill="#5010d0"/>
<rect x="975" y="320" width="3" height="2" fill="#7010c0"/>
<rect x="975" y="323" width="3" height="1" fill="#7818c0"/>
<rect x="975" y="324" width="3" height="2" fill="#7818c0"/>
<rect x="975" y="326" width="3" height="1" fill="#ff9000"/>
<rect x="975" y="327" width="3" height="1" fill="#4a08d8"/>
<rect x="975" y="328" width="3" height="1" fill="#8a18a8"/>
<rect x="975" y="329" width="3" height="1" fill="#5a10d0"/>
<rect x="975" y="331" width="3" height="2" fill="#5010d0"/>
<rect x="975" y="333" width="3" height="1" fill="#6a10c8"/>
<rect x="975" y="334" width="3" height="1" fill="#6010c8"/>
<rect x="975" y="335" width="3" height="1" fill="#5a10d0"/>
<rect x="975" y="336" width="3" height="1" fill="#5a10d0"/>
<rect x="975" y="337" width="3" height="1" fill="#7818c0"/>
<rect x="975" y="338" width="3" height="2" fill="#6010c8"/>
<rect x="975" y="340" width="3" height="2" fill="#5010d0"/>
<rect x="975" y="342" width="3" height="2" fill="#ff9000"/>
<rect x="975" y="344" width="3" height="2" fill="#7010c0"/>
<rect x="975" y="347" width="3" height="1" fill="#8a18a8"/>
<rect x="975" y="348" width="3" height="1" fill="#ff9000"/>
<rect x="975" y="349" width="3" height="1" fill="#5010d0"/>
<rect x="975" y="350" width="3" height="1" fill="#6a10c8"/>
<rect x="975" y="351" width="3" height="1" fill="#7818c0"/>
<rect x="975" y="352" width="3" height="1" fill="#c82868"/>
<rect x="975" y="353" width="3" height="2" fill="#6a10c8"/>
<rect x="975" y="357" width="3" height="1" fill="#c82868"/>
<rect x="975" y="358" width="3" height="2" fill="#ff9000"/>
<rect x="975" y="361" width="3" height="1" fill="#c82868"/>
<rect x="975" y="362" width="3" height="1" fill="#7010c0"/>
<rect x="975" y="363" width="3" height="2" fill="#7818c0"/>
<rect x="975" y="365" width="3" height="1" fill="#4a08d8"/>
<rect x="975" y="366" width="3" height="1" fill="#7818c0"/>
<rect x="975" y="367" width="3" height="2" fill="#4a08d8"/>
<rect x="975" y="369" width="3" height="1" fill="#7010c0"/>
<rect x="975" y="370" width="3" height="1" fill="#5a10d0"/>
<rect x="975" y="371" width="3" height="1" fill="#ff9000"/>
<rect x="975" y="373" width="3" height="1" fill="#c82868"/>
<rect x="975" y="375" width="3" height="2" fill="#a01890"/>
<rect x="975" y="377" width="3" height="1" fill="#5010d0"/>
<rect x="975" y="378" width="3" height="2" fill="#4a08d8"/>
<rect x="975" y="380" width="3" height="1" fill="#a01890"/>
<rect x="975" y="381" width="3" height="1" fill="#4a08d8"/>
<rect x="975" y="382" width="3" height="1" fill="#5a10d0"/>
<rect x="975" y="386" width="3" height="1" fill="#4a08d8"/>
<rect x="975" y="389" width="3" height="1" fill="#ff9000"/>
<rect x="975" y="392" width="3" height="2" fill="#a01890"/>
<rect x="975" y="394" width="3" height="1" fill="#a01890"/>
<rect x="975" y="395" width="3" height="2" fill="#4a08d8"/>
<rect x="975" y="397" width="3" height="1" fill="#6a10c8"/>
<rect x="975" y="399" width="3" height="1" fill="#ff9000"/>
<rect x="975" y="400" width="3" height="1" fill="#7818c0"/>
<rect x="975" y="401" width="3" height="1" fill="#7818c0"/>
<rect x="975" y="402" width="3" height="1" fill="#4a08d8"/>
<rect x="975" y="403" width="3" height="1" fill="#a01890"/>
<rect x="975" y="406" width="3" height="2" fill="#7818c0"/>
<rect x="975" y="408" width="3" height="1" fill="#7818c0"/>
<rect x="975" y="409" width="3" height="1" fill="#ff9000"/>
<rect x="975" y="410" width="3" height="1" fill="#5a10d0"/>
<rect x="975" y="411" width="3" height="1" fill="#5a10d0"/>
<rect x="975" y="412" width="3" height="2" fill="#8a18a8"/>
<rect x="975" y="417" width="3" height="1" fill="#5a10d0"/>
<rect x="975" y="420" width="3" height="1" fill="#4a08d8"/>
<rect x="975" y="422" width="3" height="1" fill="#8a18a8"/>
<rect x="975" y="425" width="3" height="2" fill="#c82868"/>
<rect x="975" y="427" width="3" height="1" fill="#7818c0"/>
<rect x="975" y="428" width="3" height="1" fill="#8a18a8"/>
<rect x="975" y="431" width="3" height="1" fill="#7818c0"/>
<rect x="975" y="433" width="3" height="1" fill="#c82868"/>
<rect x="975" y="434" width="3" height="1" fill="#8a18a8"/>
<rect x="975" y="435" width="3" height="1" fill="#5a10d0"/>
<rect x="975" y="436" width="3" height="2" fill="#8a18a8"/>
<rect x="975" y="438" width="3" height="2" fill="#c82868"/>
<rect x="975" y="440" width="3" height="1" fill="#4a08d8"/>
<rect x="975" y="441" width="3" height="1" fill="#4a08d8"/>
<rect x="975" y="442" width="3" height="1" fill="#7818c0"/>
<rect x="975" y="445" width="3" height="1" fill="#ff9000"/>
<rect x="975" y="446" width="3" height="2" fill="#ff9000"/>
<rect x="975" y="448" width="3" height="1" fill="#6a10c8"/>
<rect x="975" y="449" width="3" height="2" fill="#5a10d0"/>
<rect x="975" y="451" width="3" height="2" fill="#ff9000"/>
<rect x="975" y="453" width="3" height="2" fill="#6010c8"/>
<rect x="975" y="455" width="3" height="2" fill="#5a10d0"/>
<rect x="975" y="457" width="3" height="2" fill="#6a10c8"/>
<rect x="975" y="459" width="3" height="1" fill="#4a08d8"/>
<rect x="975" y="460" width="3" height="1" fill="#5a10d0"/>
<rect x="975" y="461" width="3" height="1" fill="#c82868"/>
<rect x="975" y="462" width="3" height="2" fill="#7818c0"/>
<rect x="975" y="464" width="3" height="2" fill="#6a10c8"/>
<rect x="975" y="466" width="3" height="1" fill="#5010d0"/>
<rect x="975" y="468" width="3" height="1" fill="#4a08d8"/>
<rect x="975" y="469" width="3" height="1" fill="#5a10d0"/>
<rect x="975" y="470" width="3" height="1" fill="#8a18a8"/>
<rect x="975" y="471" width="3" height="2" fill="#6a10c8"/>
<rect x="975" y="475" width="3" height="2" fill="#4a08d8"/>
<rect x="975" y="478" width="3" height="1" fill="#5a10d0"/>
<rect x="975" y="479" width="3" height="1" fill="#c82868"/>
<rect x="975" y="480" width="3" height="2" fill="#7010c0"/>
<rect x="975" y="482" width="3" height="1" fill="#ff9000"/>
<rect x="975" y="484" width="3" height="2" fill="#6a10c8"/>
<rect x="975" y="486" width="3" height="1" fill="#8a18a8"/>
<rect x="1051" y="164" width="3.5" height="1" fill="#ffb000"/>
<rect x="1054.5" y="164" width="3.5" height="1" fill="#ffe800"/>
<rect x="1051" y="165" width="3.5" height="1" fill="#ffc000"/>
<rect x="1054.5" y="165" width="3.5" height="1" fill="#ffc000"/>
<rect x="1051" y="166" width="3.5" height="1" fill="#ffd800"/>
<rect x="1054.5" y="166" width="3.5" height="1" fill="#ffe800"/>
<rect x="1051" y="167" width="3.5" height="1" fill="#ff8000"/>
<rect x="1054.5" y="167" width="3.5" height="1" fill="#ffc000"/>
<rect x="1051" y="168" width="3.5" height="1" fill="#ffd800"/>
<rect x="1054.5" y="168" width="3.5" height="1" fill="#ffee40"/>
<rect x="1051" y="169" width="3.5" height="1" fill="#ffb000"/>
<rect x="1054.5" y="169" width="3.5" height="1" fill="#ffc000"/>
<rect x="1047.5" y="169" width="3.5" height="1" fill="#a01890"/>
<rect x="1051" y="170" width="3.5" height="1" fill="#ffa000"/>
<rect x="1054.5" y="170" width="3.5" height="1" fill="#ffd800"/>
<rect x="1051" y="171" width="3.5" height="1" fill="#ffc000"/>
<rect x="1054.5" y="171" width="3.5" height="1" fill="#ffa800"/>
<rect x="1051" y="172" width="3.5" height="1" fill="#ffa000"/>
<rect x="1054.5" y="172" width="3.5" height="1" fill="#ffd800"/>
<rect x="1047.5" y="172" width="3.5" height="1" fill="#e04040"/>
<rect x="1051" y="173" width="3.5" height="1" fill="#ff8000"/>
<rect x="1054.5" y="173" width="3.5" height="1" fill="#ffa800"/>
<rect x="1047.5" y="173" width="3.5" height="1" fill="#ff9000"/>
<rect x="1051" y="174" width="3.5" height="1" fill="#ffc000"/>
<rect x="1054.5" y="174" width="3.5" height="1" fill="#ffee40"/>
<rect x="1058" y="174" width="3.2" height="1" fill="#c02070"/>
<rect x="1051" y="175" width="3.5" height="1" fill="#e05020"/>
<rect x="1054.5" y="175" width="3.5" height="1" fill="#ffe800"/>
<rect x="1051" y="176" width="3.5" height="1" fill="#ffa000"/>
<rect x="1054.5" y="176" width="3.5" height="1" fill="#ffa800"/>
<rect x="1051" y="177" width="3.5" height="1" fill="#ffc000"/>
<rect x="1054.5" y="177" width="3.5" height="1" fill="#ffee40"/>
<rect x="1051" y="178" width="3.5" height="1" fill="#ffb000"/>
<rect x="1054.5" y="178" width="3.5" height="1" fill="#ffee40"/>
<rect x="1058" y="178" width="3.2" height="1" fill="#e04040"/>
<rect x="1051" y="179" width="3.5" height="1" fill="#ff8000"/>
<rect x="1054.5" y="179" width="3.5" height="1" fill="#ffee40"/>
<rect x="1058" y="179" width="3.2" height="1" fill="#c02070"/>
<rect x="1051" y="180" width="3.5" height="1" fill="#e05020"/>
<rect x="1054.5" y="180" width="3.5" height="1" fill="#ffd800"/>
<rect x="1051" y="181" width="3.5" height="1" fill="#ffb000"/>
<rect x="1054.5" y="181" width="3.5" height="1" fill="#ffee40"/>
<rect x="1058" y="181" width="3.2" height="1" fill="#e04040"/>
<rect x="1051" y="182" width="3.5" height="1" fill="#ffc000"/>
<rect x="1054.5" y="182" width="3.5" height="1" fill="#ffc000"/>
<rect x="1051" y="183" width="3.5" height="1" fill="#ffb000"/>
<rect x="1054.5" y="183" width="3.5" height="1" fill="#ffc000"/>
<rect x="1051" y="184" width="3.5" height="1" fill="#ffd800"/>
<rect x="1054.5" y="184" width="3.5" height="1" fill="#ffd800"/>
<rect x="1047.5" y="184" width="3.5" height="1" fill="#a01890"/>
<rect x="1051" y="185" width="3.5" height="1" fill="#ffa000"/>
<rect x="1054.5" y="185" width="3.5" height="1" fill="#ffd800"/>
<rect x="1051" y="186" width="3.5" height="1" fill="#ff8000"/>
<rect x="1054.5" y="186" width="3.5" height="1" fill="#ffd800"/>
<rect x="1051" y="187" width="3.5" height="1" fill="#ffc000"/>
<rect x="1054.5" y="187" width="3.5" height="1" fill="#ffd800"/>
<rect x="1047.5" y="187" width="3.5" height="1" fill="#c02070"/>
<rect x="1051" y="196" width="3.5" height="1" fill="#ff8000"/>
<rect x="1054.5" y="196" width="3.5" height="1" fill="#ffd800"/>
<rect x="1051" y="197" width="3.5" height="1" fill="#ffd800"/>
<rect x="1054.5" y="197" width="3.5" height="1" fill="#ffa800"/>
<rect x="1051" y="198" width="3.5" height="1" fill="#ff8000"/>
<rect x="1054.5" y="198" width="3.5" height="1" fill="#ffee40"/>
<rect x="1051" y="199" width="3.5" height="1" fill="#ffa000"/>
<rect x="1054.5" y="199" width="3.5" height="1" fill="#ffc000"/>
<rect x="1051" y="200" width="3.5" height="1" fill="#ffd800"/>
<rect x="1054.5" y="200" width="3.5" height="1" fill="#ffc000"/>
<rect x="1051" y="201" width="3.5" height="1" fill="#e05020"/>
<rect x="1054.5" y="201" width="3.5" height="1" fill="#ffc000"/>
<rect x="1051" y="205" width="3.5" height="1" fill="#ffa000"/>
<rect x="1054.5" y="205" width="3.5" height="1" fill="#ffc000"/>
<rect x="1047.5" y="205" width="3.5" height="1" fill="#a01890"/>
<rect x="1058" y="205" width="3.2" height="1" fill="#e04040"/>
<rect x="1051" y="206" width="3.5" height="1" fill="#ffa000"/>
<rect x="1054.5" y="206" width="3.5" height="1" fill="#ffee40"/>
<rect x="1051" y="207" width="3.5" height="1" fill="#e05020"/>
<rect x="1054.5" y="207" width="3.5" height="1" fill="#ffa800"/>
<rect x="1047.5" y="207" width="3.5" height="1" fill="#a01890"/>
<rect x="1058" y="207" width="3.2" height="1" fill="#e04040"/>
<rect x="1051" y="208" width="3.5" height="1" fill="#ffc000"/>
<rect x="1054.5" y="208" width="3.5" height="1" fill="#ffee40"/>
<rect x="1051" y="209" width="3.5" height="1" fill="#e05020"/>
<rect x="1054.5" y="209" width="3.5" height="1" fill="#ffa800"/>
<rect x="1051" y="210" width="3.5" height="1" fill="#ffb000"/>
<rect x="1054.5" y="210" width="3.5" height="1" fill="#ffa800"/>
<rect x="1058" y="210" width="3.2" height="1" fill="#e04040"/>
<rect x="1051" y="211" width="3.5" height="1" fill="#ffb000"/>
<rect x="1054.5" y="211" width="3.5" height="1" fill="#ffee40"/>
<rect x="1058" y="211" width="3.2" height="1" fill="#ff9000"/>
<rect x="1051" y="212" width="3.5" height="1" fill="#ffa000"/>
<rect x="1054.5" y="212" width="3.5" height="1" fill="#ffee40"/>
<rect x="1051" y="213" width="3.5" height="1" fill="#ffb000"/>
<rect x="1054.5" y="213" width="3.5" height="1" fill="#ffd800"/>
<rect x="1051" y="214" width="3.5" height="1" fill="#ff8000"/>
<rect x="1054.5" y="214" width="3.5" height="1" fill="#ffa800"/>
<rect x="1051" y="215" width="3.5" height="1" fill="#ffc000"/>
<rect x="1054.5" y="215" width="3.5" height="1" fill="#ffee40"/>
<rect x="1047.5" y="215" width="3.5" height="1" fill="#e04040"/>
<rect x="1051" y="216" width="3.5" height="1" fill="#ffb000"/>
<rect x="1054.5" y="216" width="3.5" height="1" fill="#ffa800"/>
<rect x="1058" y="216" width="3.2" height="1" fill="#e04040"/>
<rect x="1051" y="217" width="3.5" height="1" fill="#ffa000"/>
<rect x="1054.5" y="217" width="3.5" height="1" fill="#ffee40"/>
<rect x="1051" y="220" width="3.5" height="1" fill="#ffd800"/>
<rect x="1054.5" y="220" width="3.5" height="1" fill="#ffd800"/>
<rect x="1047.5" y="220" width="3.5" height="1" fill="#c02070"/>
<rect x="1051" y="226" width="3.5" height="1" fill="#fff0a0"/>
<rect x="1054.5" y="226" width="3.5" height="1" fill="#ffff80"/>
<rect x="1051" y="227" width="3.5" height="1" fill="#ffe060"/>
<rect x="1054.5" y="227" width="3.5" height="1" fill="#ffffe8"/>
<rect x="1051" y="228" width="3.5" height="1" fill="#fff0a0"/>
<rect x="1054.5" y="228" width="3.5" height="1" fill="#ffffe8"/>
<rect x="1047.5" y="228" width="3.5" height="1" fill="#e04040"/>
<rect x="1051" y="229" width="3.5" height="1" fill="#ffe060"/>
<rect x="1054.5" y="229" width="3.5" height="1" fill="#ffffe8"/>
<rect x="1047.5" y="229" width="3.5" height="1" fill="#c02070"/>
<rect x="1058" y="229" width="3.2" height="1" fill="#ff9000"/>
<rect x="1051" y="230" width="3.5" height="1" fill="#ffc000"/>
<rect x="1054.5" y="230" width="3.5" height="1" fill="#ffffe8"/>
<rect x="1047.5" y="230" width="3.5" height="1" fill="#e04040"/>
<rect x="1051" y="231" width="3.5" height="1" fill="#fff0a0"/>
<rect x="1054.5" y="231" width="3.5" height="1" fill="#ffffe8"/>
<rect x="1051" y="232" width="3.5" height="1" fill="#ffe060"/>
<rect x="1054.5" y="232" width="3.5" height="1" fill="#ffffe8"/>
<rect x="1051" y="233" width="3.5" height="1" fill="#fff0a0"/>
<rect x="1054.5" y="233" width="3.5" height="1" fill="#ffff80"/>
<rect x="1051" y="234" width="3.5" height="1" fill="#fff0a0"/>
<rect x="1054.5" y="234" width="3.5" height="1" fill="#ffffe8"/>
<rect x="1047.5" y="234" width="3.5" height="1" fill="#e04040"/>
<rect x="1051" y="235" width="3.5" height="1" fill="#ffc000"/>
<rect x="1054.5" y="235" width="3.5" height="1" fill="#ffffe8"/>
<rect x="1047.5" y="235" width="3.5" height="1" fill="#c02070"/>
<rect x="1051" y="237" width="3.5" height="1" fill="#ff8000"/>
<rect x="1054.5" y="237" width="3.5" height="1" fill="#ffc000"/>
<rect x="1051" y="238" width="3.5" height="1" fill="#ffd800"/>
<rect x="1054.5" y="238" width="3.5" height="1" fill="#ffe800"/>
<rect x="1047.5" y="238" width="3.5" height="1" fill="#e04040"/>
<rect x="1051" y="239" width="3.5" height="1" fill="#ffb000"/>
<rect x="1054.5" y="239" width="3.5" height="1" fill="#ffe800"/>
<rect x="1051" y="240" width="3.5" height="1" fill="#ffd800"/>
<rect x="1054.5" y="240" width="3.5" height="1" fill="#ffee40"/>
<rect x="1051" y="241" width="3.5" height="1" fill="#e05020"/>
<rect x="1054.5" y="241" width="3.5" height="1" fill="#ffc000"/>
<rect x="1058" y="241" width="3.2" height="1" fill="#a01890"/>
<rect x="1051" y="242" width="3.5" height="1" fill="#e05020"/>
<rect x="1054.5" y="242" width="3.5" height="1" fill="#ffd800"/>
<rect x="1051" y="243" width="3.5" height="1" fill="#ff8000"/>
<rect x="1054.5" y="243" width="3.5" height="1" fill="#ffa800"/>
<rect x="1051" y="244" width="3.5" height="1" fill="#ffd800"/>
<rect x="1054.5" y="244" width="3.5" height="1" fill="#ffee40"/>
<rect x="1051" y="245" width="3.5" height="1" fill="#ffc000"/>
<rect x="1054.5" y="245" width="3.5" height="1" fill="#ffee40"/>
<rect x="1058" y="245" width="3.2" height="1" fill="#a01890"/>
<rect x="1051" y="246" width="3.5" height="1" fill="#ffc000"/>
<rect x="1054.5" y="246" width="3.5" height="1" fill="#ffffe8"/>
<rect x="1051" y="247" width="3.5" height="1" fill="#ffe060"/>
<rect x="1054.5" y="247" width="3.5" height="1" fill="#ffffe8"/>
<rect x="1047.5" y="247" width="3.5" height="1" fill="#ff9000"/>
<rect x="1051" y="248" width="3.5" height="1" fill="#fff0a0"/>
<rect x="1054.5" y="248" width="3.5" height="1" fill="#ffffe8"/>
<rect x="1051" y="249" width="3.5" height="1" fill="#ffa000"/>
<rect x="1054.5" y="249" width="3.5" height="1" fill="#ffa800"/>
<rect x="1051" y="250" width="3.5" height="1" fill="#ffc000"/>
<rect x="1054.5" y="250" width="3.5" height="1" fill="#ffe800"/>
<rect x="1058" y="250" width="3.2" height="1" fill="#c02070"/>
<rect x="1051" y="251" width="3.5" height="1" fill="#ffd800"/>
<rect x="1054.5" y="251" width="3.5" height="1" fill="#ffe800"/>
<rect x="1051" y="252" width="3.5" height="1" fill="#ffa000"/>
<rect x="1054.5" y="252" width="3.5" height="1" fill="#ffee40"/>
<rect x="1058" y="252" width="3.2" height="1" fill="#a01890"/>
<rect x="1051" y="253" width="3.5" height="1" fill="#ffa000"/>
<rect x="1054.5" y="253" width="3.5" height="1" fill="#ffe800"/>
<rect x="1051" y="254" width="3.5" height="1" fill="#ff8000"/>
<rect x="1054.5" y="254" width="3.5" height="1" fill="#ffa800"/>
<rect x="1051" y="255" width="3.5" height="1" fill="#ffc000"/>
<rect x="1054.5" y="255" width="3.5" height="1" fill="#ffe800"/>
<rect x="1047.5" y="255" width="3.5" height="1" fill="#e04040"/>
<rect x="1058" y="255" width="3.2" height="1" fill="#a01890"/>
<rect x="1051" y="256" width="3.5" height="1" fill="#ff8000"/>
<rect x="1054.5" y="256" width="3.5" height="1" fill="#ffa800"/>
<rect x="1051" y="257" width="3.5" height="1" fill="#e05020"/>
<rect x="1054.5" y="257" width="3.5" height="1" fill="#ffe800"/>
<rect x="1051" y="258" width="3.5" height="1" fill="#ffd800"/>
<rect x="1054.5" y="258" width="3.5" height="1" fill="#ffc000"/>
<rect x="1051" y="259" width="3.5" height="1" fill="#ffd800"/>
<rect x="1054.5" y="259" width="3.5" height="1" fill="#ffd800"/>
<rect x="1047.5" y="259" width="3.5" height="1" fill="#e04040"/>
<rect x="1051" y="260" width="3.5" height="1" fill="#e05020"/>
<rect x="1054.5" y="260" width="3.5" height="1" fill="#ffa800"/>
<rect x="1047.5" y="260" width="3.5" height="1" fill="#e04040"/>
<rect x="1058" y="260" width="3.2" height="1" fill="#c02070"/>
<rect x="1051" y="261" width="3.5" height="1" fill="#e05020"/>
<rect x="1054.5" y="261" width="3.5" height="1" fill="#ffa800"/>
<rect x="1047.5" y="261" width="3.5" height="1" fill="#a01890"/>
<rect x="1051" y="262" width="3.5" height="1" fill="#ffd800"/>
<rect x="1054.5" y="262" width="3.5" height="1" fill="#ffa800"/>
<rect x="1051" y="263" width="3.5" height="1" fill="#ff8000"/>
<rect x="1054.5" y="263" width="3.5" height="1" fill="#ffd800"/>
<rect x="1051" y="264" width="3.5" height="1" fill="#ffd800"/>
<rect x="1054.5" y="264" width="3.5" height="1" fill="#ffd800"/>
<rect x="1047.5" y="264" width="3.5" height="1" fill="#e04040"/>
<rect x="1051" y="265" width="3.5" height="1" fill="#ffb000"/>
<rect x="1054.5" y="265" width="3.5" height="1" fill="#ffee40"/>
<rect x="1051" y="266" width="3.5" height="1" fill="#ffa000"/>
<rect x="1054.5" y="266" width="3.5" height="1" fill="#ffa800"/>
<rect x="1051" y="267" width="3.5" height="1" fill="#ffb000"/>
<rect x="1054.5" y="267" width="3.5" height="1" fill="#ffd800"/>
<rect x="1051" y="268" width="3.5" height="1" fill="#fff0a0"/>
<rect x="1054.5" y="268" width="3.5" height="1" fill="#ffffe8"/>
<rect x="1051" y="269" width="3.5" height="1" fill="#ffe060"/>
<rect x="1054.5" y="269" width="3.5" height="1" fill="#ffffe8"/>
<rect x="1047.5" y="269" width="3.5" height="1" fill="#ff9000"/>
<rect x="1051" y="270" width="3.5" height="1" fill="#ffe060"/>
<rect x="1054.5" y="270" width="3.5" height="1" fill="#ffffe8"/>
<rect x="1051" y="271" width="3.5" height="1" fill="#ffe060"/>
<rect x="1054.5" y="271" width="3.5" height="1" fill="#ffff80"/>
<rect x="1051" y="272" width="3.5" height="1" fill="#ffe060"/>
<rect x="1054.5" y="272" width="3.5" height="1" fill="#ffffe8"/>
<rect x="1051" y="273" width="3.5" height="1" fill="#ffc000"/>
<rect x="1054.5" y="273" width="3.5" height="1" fill="#ffffe8"/>
<rect x="1047.5" y="273" width="3.5" height="1" fill="#e04040"/>
<rect x="1051" y="274" width="3.5" height="1" fill="#fff0a0"/>
<rect x="1054.5" y="274" width="3.5" height="1" fill="#ffffe8"/>
<rect x="1051" y="275" width="3.5" height="1" fill="#ffb000"/>
<rect x="1054.5" y="275" width="3.5" height="1" fill="#ffd800"/>
<rect x="1051" y="276" width="3.5" height="1" fill="#ffd800"/>
<rect x="1054.5" y="276" width="3.5" height="1" fill="#ffd800"/>
<rect x="1051" y="287" width="3.5" height="1" fill="#ffd800"/>
<rect x="1054.5" y="287" width="3.5" height="1" fill="#ffe800"/>
<rect x="1051" y="288" width="3.5" height="1" fill="#ffa000"/>
<rect x="1054.5" y="288" width="3.5" height="1" fill="#ffee40"/>
<rect x="1058" y="288" width="3.2" height="1" fill="#e04040"/>
<rect x="1051" y="289" width="3.5" height="1" fill="#ffc000"/>
<rect x="1054.5" y="289" width="3.5" height="1" fill="#ffe800"/>
<rect x="1047.5" y="289" width="3.5" height="1" fill="#a01890"/>
<rect x="1051" y="290" width="3.5" height="1" fill="#ffc000"/>
<rect x="1054.5" y="290" width="3.5" height="1" fill="#ffee40"/>
<rect x="1051" y="291" width="3.5" height="1" fill="#ffd800"/>
<rect x="1054.5" y="291" width="3.5" height="1" fill="#ffd800"/>
<rect x="1051" y="292" width="3.5" height="1" fill="#ff8000"/>
<rect x="1054.5" y="292" width="3.5" height="1" fill="#ffc000"/>
<rect x="1051" y="293" width="3.5" height="1" fill="#ffb000"/>
<rect x="1054.5" y="293" width="3.5" height="1" fill="#ffc000"/>
<rect x="1047.5" y="293" width="3.5" height="1" fill="#ff9000"/>
<rect x="1051" y="294" width="3.5" height="1" fill="#ffc000"/>
<rect x="1054.5" y="294" width="3.5" height="1" fill="#ffee40"/>
<rect x="1058" y="294" width="3.2" height="1" fill="#ff9000"/>
<rect x="1051" y="295" width="3.5" height="1" fill="#ff8000"/>
<rect x="1054.5" y="295" width="3.5" height="1" fill="#ffee40"/>
<rect x="1058" y="295" width="3.2" height="1" fill="#a01890"/>
<rect x="1051" y="297" width="3.5" height="1" fill="#e05020"/>
<rect x="1054.5" y="297" width="3.5" height="1" fill="#ffc000"/>
<rect x="1058" y="297" width="3.2" height="1" fill="#c02070"/>
<rect x="1051" y="298" width="3.5" height="1" fill="#ffa000"/>
<rect x="1054.5" y="298" width="3.5" height="1" fill="#ffc000"/>
<rect x="1051" y="299" width="3.5" height="1" fill="#ffc000"/>
<rect x="1054.5" y="299" width="3.5" height="1" fill="#ffa800"/>
<rect x="1047.5" y="299" width="3.5" height="1" fill="#ff9000"/>
<rect x="1051" y="300" width="3.5" height="1" fill="#ff8000"/>
<rect x="1054.5" y="300" width="3.5" height="1" fill="#ffd800"/>
<rect x="1058" y="300" width="3.2" height="1" fill="#a01890"/>
<rect x="1051" y="301" width="3.5" height="1" fill="#ffd800"/>
<rect x="1054.5" y="301" width="3.5" height="1" fill="#ffc000"/>
<rect x="1051" y="302" width="3.5" height="1" fill="#ffa000"/>
<rect x="1054.5" y="302" width="3.5" height="1" fill="#ffee40"/>
<rect x="1051" y="303" width="3.5" height="1" fill="#ffa000"/>
<rect x="1054.5" y="303" width="3.5" height="1" fill="#ffc000"/>
<rect x="1047.5" y="303" width="3.5" height="1" fill="#e04040"/>
<rect x="1051" y="304" width="3.5" height="1" fill="#e05020"/>
<rect x="1054.5" y="304" width="3.5" height="1" fill="#ffc000"/>
<rect x="1051" y="305" width="3.5" height="1" fill="#e05020"/>
<rect x="1054.5" y="305" width="3.5" height="1" fill="#ffc000"/>
<rect x="1047.5" y="305" width="3.5" height="1" fill="#c02070"/>
<rect x="1058" y="305" width="3.2" height="1" fill="#c02070"/>
<rect x="1051" y="316" width="3.5" height="1" fill="#ffc000"/>
<rect x="1054.5" y="316" width="3.5" height="1" fill="#ffc000"/>
<rect x="1058" y="316" width="3.2" height="1" fill="#ff9000"/>
<rect x="1051" y="317" width="3.5" height="1" fill="#e05020"/>
<rect x="1054.5" y="317" width="3.5" height="1" fill="#ffe800"/>
<rect x="1058" y="317" width="3.2" height="1" fill="#e04040"/>
<rect x="1051" y="318" width="3.5" height="1" fill="#ffa000"/>
<rect x="1054.5" y="318" width="3.5" height="1" fill="#ffa800"/>
<rect x="1051" y="319" width="3.5" height="1" fill="#ffc000"/>
<rect x="1054.5" y="319" width="3.5" height="1" fill="#ffe800"/>
<rect x="1047.5" y="319" width="3.5" height="1" fill="#ff9000"/>
<rect x="1051" y="320" width="3.5" height="1" fill="#ffc000"/>
<rect x="1054.5" y="320" width="3.5" height="1" fill="#ffd800"/>
<rect x="1047.5" y="320" width="3.5" height="1" fill="#c02070"/>
<rect x="1051" y="321" width="3.5" height="1" fill="#ffa000"/>
<rect x="1054.5" y="321" width="3.5" height="1" fill="#ffa800"/>
<rect x="1051" y="322" width="3.5" height="1" fill="#ffb000"/>
<rect x="1054.5" y="322" width="3.5" height="1" fill="#ffee40"/>
<rect x="1047.5" y="322" width="3.5" height="1" fill="#c02070"/>
<rect x="1051" y="323" width="3.5" height="1" fill="#ffd800"/>
<rect x="1054.5" y="323" width="3.5" height="1" fill="#ffe800"/>
<rect x="1051" y="324" width="3.5" height="1" fill="#ffc000"/>
<rect x="1054.5" y="324" width="3.5" height="1" fill="#ffa800"/>
<rect x="1051" y="325" width="3.5" height="1" fill="#ffc000"/>
<rect x="1054.5" y="325" width="3.5" height="1" fill="#ffc000"/>
<rect x="1051" y="326" width="3.5" height="1" fill="#ff8000"/>
<rect x="1054.5" y="326" width="3.5" height="1" fill="#ffa800"/>
<rect x="1051" y="327" width="3.5" height="1" fill="#ffa000"/>
<rect x="1054.5" y="327" width="3.5" height="1" fill="#ffd800"/>
<rect x="1051" y="328" width="3.5" height="1" fill="#ff8000"/>
<rect x="1054.5" y="328" width="3.5" height="1" fill="#ffee40"/>
<rect x="1051" y="329" width="3.5" height="1" fill="#ff8000"/>
<rect x="1054.5" y="329" width="3.5" height="1" fill="#ffd800"/>
<rect x="1051" y="330" width="3.5" height="1" fill="#e05020"/>
<rect x="1054.5" y="330" width="3.5" height="1" fill="#ffd800"/>
<rect x="1051" y="331" width="3.5" height="1" fill="#ffa000"/>
<rect x="1054.5" y="331" width="3.5" height="1" fill="#ffe800"/>
<rect x="1051" y="332" width="3.5" height="1" fill="#ffc000"/>
<rect x="1054.5" y="332" width="3.5" height="1" fill="#ffe800"/>
<rect x="1047.5" y="332" width="3.5" height="1" fill="#a01890"/>
<rect x="1051" y="333" width="3.5" height="1" fill="#ffa000"/>
<rect x="1054.5" y="333" width="3.5" height="1" fill="#ffd800"/>
<rect x="1047.5" y="333" width="3.5" height="1" fill="#ff9000"/>
<rect x="1051" y="334" width="3.5" height="1" fill="#e05020"/>
<rect x="1054.5" y="334" width="3.5" height="1" fill="#ffa800"/>
<rect x="1051" y="335" width="3.5" height="1" fill="#ffd800"/>
<rect x="1054.5" y="335" width="3.5" height="1" fill="#ffd800"/>
<rect x="1058" y="335" width="3.2" height="1" fill="#ff9000"/>
<rect x="1051" y="343" width="3.5" height="1" fill="#ffa000"/>
<rect x="1054.5" y="343" width="3.5" height="1" fill="#ffc000"/>
<rect x="1047.5" y="343" width="3.5" height="1" fill="#c02070"/>
<rect x="1051" y="344" width="3.5" height="1" fill="#ff8000"/>
<rect x="1054.5" y="344" width="3.5" height="1" fill="#ffd800"/>
<rect x="1047.5" y="344" width="3.5" height="1" fill="#c02070"/>
<rect x="1051" y="345" width="3.5" height="1" fill="#e05020"/>
<rect x="1054.5" y="345" width="3.5" height="1" fill="#ffa800"/>
<rect x="1051" y="346" width="3.5" height="1" fill="#ffb000"/>
<rect x="1054.5" y="346" width="3.5" height="1" fill="#ffa800"/>
<rect x="1051" y="347" width="3.5" height="1" fill="#ffa000"/>
<rect x="1054.5" y="347" width="3.5" height="1" fill="#ffee40"/>
<rect x="1051" y="348" width="3.5" height="1" fill="#e05020"/>
<rect x="1054.5" y="348" width="3.5" height="1" fill="#ffa800"/>
<rect x="1047.5" y="348" width="3.5" height="1" fill="#e04040"/>
<rect x="1051" y="349" width="3.5" height="1" fill="#ff8000"/>
<rect x="1054.5" y="349" width="3.5" height="1" fill="#ffee40"/>
<rect x="1051" y="350" width="3.5" height="1" fill="#ffd800"/>
<rect x="1054.5" y="350" width="3.5" height="1" fill="#ffa800"/>
<rect x="1051" y="351" width="3.5" height="1" fill="#ffd800"/>
<rect x="1054.5" y="351" width="3.5" height="1" fill="#ffa800"/>
<rect x="1047.5" y="351" width="3.5" height="1" fill="#ff9000"/>
<rect x="1051" y="352" width="3.5" height="1" fill="#ff8000"/>
<rect x="1054.5" y="352" width="3.5" height="1" fill="#ffe800"/>
<rect x="1051" y="353" width="3.5" height="1" fill="#ffa000"/>
<rect x="1054.5" y="353" width="3.5" height="1" fill="#ffc000"/>
<rect x="1047.5" y="353" width="3.5" height="1" fill="#ff9000"/>
<rect x="1058" y="353" width="3.2" height="1" fill="#c02070"/>
<rect x="1051" y="354" width="3.5" height="1" fill="#ffc000"/>
<rect x="1054.5" y="354" width="3.5" height="1" fill="#ffa800"/>
<rect x="1051" y="355" width="3.5" height="1" fill="#ffd800"/>
<rect x="1054.5" y="355" width="3.5" height="1" fill="#ffee40"/>
<rect x="1051" y="376" width="3.5" height="1" fill="#ffb000"/>
<rect x="1054.5" y="376" width="3.5" height="1" fill="#ffd800"/>
<rect x="1051" y="377" width="3.5" height="1" fill="#ffa000"/>
<rect x="1054.5" y="377" width="3.5" height="1" fill="#ffd800"/>
<rect x="1051" y="378" width="3.5" height="1" fill="#ffb000"/>
<rect x="1054.5" y="378" width="3.5" height="1" fill="#ffa800"/>
<rect x="1051" y="379" width="3.5" height="1" fill="#ffa000"/>
<rect x="1054.5" y="379" width="3.5" height="1" fill="#ffa800"/>
<rect x="1047.5" y="379" width="3.5" height="1" fill="#e04040"/>
<rect x="1051" y="380" width="3.5" height="1" fill="#ffd800"/>
<rect x="1054.5" y="380" width="3.5" height="1" fill="#ffe800"/>
<rect x="1051" y="381" width="3.5" height="1" fill="#ff8000"/>
<rect x="1054.5" y="381" width="3.5" height="1" fill="#ffc000"/>
<rect x="1058" y="381" width="3.2" height="1" fill="#a01890"/>
<rect x="1051" y="382" width="3.5" height="1" fill="#ffa000"/>
<rect x="1054.5" y="382" width="3.5" height="1" fill="#ffee40"/>
<rect x="1051" y="383" width="3.5" height="1" fill="#ffd800"/>
<rect x="1054.5" y="383" width="3.5" height="1" fill="#ffd800"/>
<rect x="1051" y="384" width="3.5" height="1" fill="#ffd800"/>
<rect x="1054.5" y="384" width="3.5" height="1" fill="#ffa800"/>
<rect x="1051" y="385" width="3.5" height="1" fill="#ffa000"/>
<rect x="1054.5" y="385" width="3.5" height="1" fill="#ffa800"/>
<rect x="1051" y="386" width="3.5" height="1" fill="#ffb000"/>
<rect x="1054.5" y="386" width="3.5" height="1" fill="#ffa800"/>
<rect x="1051" y="387" width="3.5" height="1" fill="#e05020"/>
<rect x="1054.5" y="387" width="3.5" height="1" fill="#ffc000"/>
<rect x="1051" y="388" width="3.5" height="1" fill="#e05020"/>
<rect x="1054.5" y="388" width="3.5" height="1" fill="#ffee40"/>
<rect x="1051" y="393" width="3.5" height="1" fill="#ffe060"/>
<rect x="1054.5" y="393" width="3.5" height="1" fill="#ffffe8"/>
<rect x="1047.5" y="393" width="3.5" height="1" fill="#c02070"/>
<rect x="1051" y="394" width="3.5" height="1" fill="#ffc000"/>
<rect x="1054.5" y="394" width="3.5" height="1" fill="#ffffe8"/>
<rect x="1051" y="395" width="3.5" height="1" fill="#ffe060"/>
<rect x="1054.5" y="395" width="3.5" height="1" fill="#ffffe8"/>
<rect x="1051" y="396" width="3.5" height="1" fill="#ffe060"/>
<rect x="1054.5" y="396" width="3.5" height="1" fill="#ffffe8"/>
<rect x="1058" y="396" width="3.2" height="1" fill="#e04040"/>
<rect x="1051" y="397" width="3.5" height="1" fill="#fff0a0"/>
<rect x="1054.5" y="397" width="3.5" height="1" fill="#ffff80"/>
<rect x="1058" y="397" width="3.2" height="1" fill="#c02070"/>
<rect x="1051" y="398" width="3.5" height="1" fill="#ffc000"/>
<rect x="1054.5" y="398" width="3.5" height="1" fill="#ffffe8"/>
<rect x="1051" y="403" width="3.5" height="1" fill="#ffb000"/>
<rect x="1054.5" y="403" width="3.5" height="1" fill="#ffe800"/>
<rect x="1051" y="404" width="3.5" height="1" fill="#ffc000"/>
<rect x="1054.5" y="404" width="3.5" height="1" fill="#ffe800"/>
<rect x="1051" y="405" width="3.5" height="1" fill="#e05020"/>
<rect x="1054.5" y="405" width="3.5" height="1" fill="#ffd800"/>
<rect x="1051" y="406" width="3.5" height="1" fill="#ffd800"/>
<rect x="1054.5" y="406" width="3.5" height="1" fill="#ffc000"/>
<rect x="1051" y="407" width="3.5" height="1" fill="#ffb000"/>
<rect x="1054.5" y="407" width="3.5" height="1" fill="#ffe800"/>
<rect x="1058" y="407" width="3.2" height="1" fill="#c02070"/>
<rect x="1051" y="408" width="3.5" height="1" fill="#e05020"/>
<rect x="1054.5" y="408" width="3.5" height="1" fill="#ffa800"/>
<rect x="1047.5" y="408" width="3.5" height="1" fill="#c02070"/>
<rect x="1051" y="409" width="3.5" height="1" fill="#e05020"/>
<rect x="1054.5" y="409" width="3.5" height="1" fill="#ffe800"/>
<rect x="1051" y="410" width="3.5" height="1" fill="#e05020"/>
<rect x="1054.5" y="410" width="3.5" height="1" fill="#ffa800"/>
<rect x="1047.5" y="410" width="3.5" height="1" fill="#c02070"/>
<rect x="1051" y="411" width="3.5" height="1" fill="#ff8000"/>
<rect x="1054.5" y="411" width="3.5" height="1" fill="#ffc000"/>
<rect x="1051" y="412" width="3.5" height="1" fill="#e05020"/>
<rect x="1054.5" y="412" width="3.5" height="1" fill="#ffa800"/>
<rect x="1051" y="413" width="3.5" height="1" fill="#ffb000"/>
<rect x="1054.5" y="413" width="3.5" height="1" fill="#ffee40"/>
<rect x="1051" y="414" width="3.5" height="1" fill="#e05020"/>
<rect x="1054.5" y="414" width="3.5" height="1" fill="#ffc000"/>
<rect x="1051" y="415" width="3.5" height="1" fill="#ffd800"/>
<rect x="1054.5" y="415" width="3.5" height="1" fill="#ffa800"/>
<rect x="1051" y="416" width="3.5" height="1" fill="#ff8000"/>
<rect x="1054.5" y="416" width="3.5" height="1" fill="#ffc000"/>
<rect x="1051" y="417" width="3.5" height="1" fill="#ffe060"/>
<rect x="1054.5" y="417" width="3.5" height="1" fill="#ffff80"/>
<rect x="1047.5" y="417" width="3.5" height="1" fill="#c02070"/>
<rect x="1051" y="418" width="3.5" height="1" fill="#ffe060"/>
<rect x="1054.5" y="418" width="3.5" height="1" fill="#ffffe8"/>
<rect x="1051" y="419" width="3.5" height="1" fill="#ffc000"/>
<rect x="1054.5" y="419" width="3.5" height="1" fill="#ffff80"/>
<rect x="1051" y="420" width="3.5" height="1" fill="#ffc000"/>
<rect x="1054.5" y="420" width="3.5" height="1" fill="#ffffe8"/>
<rect x="1051" y="421" width="3.5" height="1" fill="#ffc000"/>
<rect x="1054.5" y="421" width="3.5" height="1" fill="#ffffe8"/>
<rect x="1047.5" y="421" width="3.5" height="1" fill="#a01890"/>
<rect x="1051" y="422" width="3.5" height="1" fill="#ffe060"/>
<rect x="1054.5" y="422" width="3.5" height="1" fill="#ffffe8"/>
<rect x="1058" y="422" width="3.2" height="1" fill="#a01890"/>
<rect x="1051" y="423" width="3.5" height="1" fill="#fff0a0"/>
<rect x="1054.5" y="423" width="3.5" height="1" fill="#ffffe8"/>
<rect x="1051" y="424" width="3.5" height="1" fill="#ffe060"/>
<rect x="1054.5" y="424" width="3.5" height="1" fill="#ffff80"/>
<rect x="1051" y="425" width="3.5" height="1" fill="#e05020"/>
<rect x="1054.5" y="425" width="3.5" height="1" fill="#ffa800"/>
<rect x="1051" y="426" width="3.5" height="1" fill="#ffa000"/>
<rect x="1054.5" y="426" width="3.5" height="1" fill="#ffe800"/>
<rect x="1051" y="427" width="3.5" height="1" fill="#ffa000"/>
<rect x="1054.5" y="427" width="3.5" height="1" fill="#ffc000"/>
<rect x="1058" y="427" width="3.2" height="1" fill="#a01890"/>
<rect x="1051" y="428" width="3.5" height="1" fill="#ffb000"/>
<rect x="1054.5" y="428" width="3.5" height="1" fill="#ffc000"/>
<rect x="1051" y="429" width="3.5" height="1" fill="#ffd800"/>
<rect x="1054.5" y="429" width="3.5" height="1" fill="#ffe800"/>
<rect x="1051" y="430" width="3.5" height="1" fill="#ffc000"/>
<rect x="1054.5" y="430" width="3.5" height="1" fill="#ffa800"/>
<rect x="1051" y="431" width="3.5" height="1" fill="#ffa000"/>
<rect x="1054.5" y="431" width="3.5" height="1" fill="#ffa800"/>
<rect x="1051" y="432" width="3.5" height="1" fill="#ffb000"/>
<rect x="1054.5" y="432" width="3.5" height="1" fill="#ffd800"/>
<rect x="1058" y="432" width="3.2" height="1" fill="#e04040"/>
<rect x="1051" y="433" width="3.5" height="1" fill="#ff8000"/>
<rect x="1054.5" y="433" width="3.5" height="1" fill="#ffa800"/>
<rect x="1047.5" y="433" width="3.5" height="1" fill="#a01890"/>
<rect x="1051" y="434" width="3.5" height="1" fill="#ffa000"/>
<rect x="1054.5" y="434" width="3.5" height="1" fill="#ffa800"/>
<rect x="1047.5" y="434" width="3.5" height="1" fill="#e04040"/>
<rect x="1058" y="434" width="3.2" height="1" fill="#c02070"/>
<rect x="1051" y="435" width="3.5" height="1" fill="#e05020"/>
<rect x="1054.5" y="435" width="3.5" height="1" fill="#ffa800"/>
<rect x="1051" y="436" width="3.5" height="1" fill="#fff0a0"/>
<rect x="1054.5" y="436" width="3.5" height="1" fill="#ffffe8"/>
<rect x="1047.5" y="436" width="3.5" height="1" fill="#ff9000"/>
<rect x="1051" y="437" width="3.5" height="1" fill="#ffe060"/>
<rect x="1054.5" y="437" width="3.5" height="1" fill="#ffffe8"/>
<rect x="1051" y="438" width="3.5" height="1" fill="#ffe060"/>
<rect x="1054.5" y="438" width="3.5" height="1" fill="#ffffe8"/>
<rect x="1047.5" y="438" width="3.5" height="1" fill="#c02070"/>
<rect x="1051" y="439" width="3.5" height="1" fill="#fff0a0"/>
<rect x="1054.5" y="439" width="3.5" height="1" fill="#ffffe8"/>
<rect x="1051" y="440" width="3.5" height="1" fill="#fff0a0"/>
<rect x="1054.5" y="440" width="3.5" height="1" fill="#ffffe8"/>
<rect x="1051" y="441" width="3.5" height="1" fill="#ffc000"/>
<rect x="1054.5" y="441" width="3.5" height="1" fill="#ffffe8"/>
<rect x="1047.5" y="441" width="3.5" height="1" fill="#e04040"/>
<rect x="1051" y="442" width="3.5" height="1" fill="#fff0a0"/>
<rect x="1054.5" y="442" width="3.5" height="1" fill="#ffffe8"/>
<rect x="1047.5" y="442" width="3.5" height="1" fill="#c02070"/>
<rect x="1058" y="442" width="3.2" height="1" fill="#ff9000"/>
<rect x="1051" y="443" width="3.5" height="1" fill="#ffc000"/>
<rect x="1054.5" y="443" width="3.5" height="1" fill="#ffffe8"/>
<rect x="1051" y="444" width="3.5" height="1" fill="#e05020"/>
<rect x="1054.5" y="444" width="3.5" height="1" fill="#ffe800"/>
<rect x="1058" y="444" width="3.2" height="1" fill="#ff9000"/>
<rect x="1051" y="456" width="3.5" height="1" fill="#ffc000"/>
<rect x="1054.5" y="456" width="3.5" height="1" fill="#ffffe8"/>
<rect x="1051" y="461" width="3.5" height="1" fill="#ffd800"/>
<rect x="1054.5" y="461" width="3.5" height="1" fill="#ffa800"/>
<rect x="1051" y="462" width="3.5" height="1" fill="#ffa000"/>
<rect x="1054.5" y="462" width="3.5" height="1" fill="#ffe800"/>
<rect x="1051" y="463" width="3.5" height="1" fill="#e05020"/>
<rect x="1054.5" y="463" width="3.5" height="1" fill="#ffe800"/>
<rect x="1051" y="464" width="3.5" height="1" fill="#ffb000"/>
<rect x="1054.5" y="464" width="3.5" height="1" fill="#ffee40"/>
<rect x="1047.5" y="464" width="3.5" height="1" fill="#ff9000"/>
<rect x="1058" y="464" width="3.2" height="1" fill="#ff9000"/>
<rect x="1051" y="465" width="3.5" height="1" fill="#ff8000"/>
<rect x="1054.5" y="465" width="3.5" height="1" fill="#ffee40"/>
<rect x="1047.5" y="465" width="3.5" height="1" fill="#a01890"/>
<rect x="1051" y="466" width="3.5" height="1" fill="#ff8000"/>
<rect x="1054.5" y="466" width="3.5" height="1" fill="#ffd800"/>
<rect x="1051" y="467" width="3.5" height="1" fill="#ff8000"/>
<rect x="1054.5" y="467" width="3.5" height="1" fill="#ffee40"/>
<rect x="1051" y="468" width="3.5" height="1" fill="#ffd800"/>
<rect x="1054.5" y="468" width="3.5" height="1" fill="#ffc000"/>
<rect x="1051" y="469" width="3.5" height="1" fill="#ffd800"/>
<rect x="1054.5" y="469" width="3.5" height="1" fill="#ffc000"/>
<rect x="1051" y="470" width="3.5" height="1" fill="#ff8000"/>
<rect x="1054.5" y="470" width="3.5" height="1" fill="#ffd800"/>
<rect x="1058" y="470" width="3.2" height="1" fill="#ff9000"/>
<rect x="1051" y="471" width="3.5" height="1" fill="#ffa000"/>
<rect x="1054.5" y="471" width="3.5" height="1" fill="#ffe800"/>
<rect x="1051" y="472" width="3.5" height="1" fill="#ffc000"/>
<rect x="1054.5" y="472" width="3.5" height="1" fill="#ffa800"/>
<rect x="1051" y="473" width="3.5" height="1" fill="#ffc000"/>
<rect x="1054.5" y="473" width="3.5" height="1" fill="#ffe800"/>
<rect x="1058" y="473" width="3.2" height="1" fill="#c02070"/>
<rect x="1051" y="474" width="3.5" height="1" fill="#ffd800"/>
<rect x="1054.5" y="474" width="3.5" height="1" fill="#ffa800"/>
<rect x="1047.5" y="474" width="3.5" height="1" fill="#c02070"/>
<rect x="1051" y="475" width="3.5" height="1" fill="#ffc000"/>
<rect x="1054.5" y="475" width="3.5" height="1" fill="#ffee40"/>
<rect x="1051" y="476" width="3.5" height="1" fill="#ffc000"/>
<rect x="1054.5" y="476" width="3.5" height="1" fill="#ffffe8"/>
<rect x="1051" y="477" width="3.5" height="1" fill="#fff0a0"/>
<rect x="1054.5" y="477" width="3.5" height="1" fill="#ffffe8"/>
<rect x="1058" y="477" width="3.2" height="1" fill="#e04040"/>
<rect x="1051" y="478" width="3.5" height="1" fill="#fff0a0"/>
<rect x="1054.5" y="478" width="3.5" height="1" fill="#ffffe8"/>
<rect x="1051" y="479" width="3.5" height="1" fill="#ffc000"/>
<rect x="1054.5" y="479" width="3.5" height="1" fill="#ffffe8"/>
<rect x="1058" y="479" width="3.2" height="1" fill="#e04040"/>
<rect x="1051" y="480" width="3.5" height="1" fill="#ffc000"/>
<rect x="1054.5" y="480" width="3.5" height="1" fill="#ffffe8"/>
<rect x="1051" y="481" width="3.5" height="1" fill="#ffe060"/>
<rect x="1054.5" y="481" width="3.5" height="1" fill="#ffffe8"/>
<rect x="1058" y="481" width="3.2" height="1" fill="#a01890"/>
<rect x="1051" y="482" width="3.5" height="1" fill="#fff0a0"/>
<rect x="1054.5" y="482" width="3.5" height="1" fill="#ffffe8"/>
<rect x="1047.5" y="482" width="3.5" height="1" fill="#a01890"/>
<rect x="1058" y="482" width="3.2" height="1" fill="#a01890"/>
<rect x="1051" y="483" width="3.5" height="1" fill="#ffe060"/>
<rect x="1054.5" y="483" width="3.5" height="1" fill="#ffff80"/>
<rect x="1051" y="484" width="3.5" height="1" fill="#ffc000"/>
<rect x="1054.5" y="484" width="3.5" height="1" fill="#ffffe8"/>
<rect x="1051" y="485" width="3.5" height="1" fill="#ffe060"/>
<rect x="1054.5" y="485" width="3.5" height="1" fill="#ffff80"/>
<rect x="1047.5" y="485" width="3.5" height="1" fill="#a01890"/>
<rect x="1051" y="486" width="3.5" height="1" fill="#ffb000"/>
<rect x="1054.5" y="486" width="3.5" height="1" fill="#ffc000"/>
<rect x="1058" y="486" width="3.2" height="1" fill="#c02070"/>
<rect x="855" y="164" width="3" height="325" fill="#fff"/>
<rect x="488" y="162" width="1.3" height="4" fill="#00ffff"/>
<rect x="488" y="168" width="1.3" height="4" fill="#00ffff"/>
<rect x="488" y="174" width="1.3" height="4" fill="#00ffff"/>
<rect x="488" y="180" width="1.3" height="4" fill="#00ffff"/>
<rect x="488" y="186" width="1.3" height="4" fill="#00ffff"/>
<rect x="488" y="192" width="1.3" height="4" fill="#00ffff"/>
<rect x="488" y="198" width="1.3" height="4" fill="#00ffff"/>
<rect x="488" y="204" width="1.3" height="4" fill="#00ffff"/>
<rect x="488" y="210" width="1.3" height="4" fill="#00ffff"/>
<rect x="488" y="216" width="1.3" height="4" fill="#00ffff"/>
<rect x="488" y="222" width="1.3" height="4" fill="#00ffff"/>
<rect x="488" y="228" width="1.3" height="4" fill="#00ffff"/>
<rect x="488" y="234" width="1.3" height="4" fill="#00ffff"/>
<rect x="488" y="240" width="1.3" height="4" fill="#00ffff"/>
<rect x="488" y="246" width="1.3" height="4" fill="#00ffff"/>
<rect x="488" y="252" width="1.3" height="4" fill="#00ffff"/>
<rect x="488" y="258" width="1.3" height="4" fill="#00ffff"/>
<rect x="488" y="264" width="1.3" height="4" fill="#00ffff"/>
<rect x="488" y="270" width="1.3" height="4" fill="#00ffff"/>
<rect x="488" y="276" width="1.3" height="4" fill="#00ffff"/>
<rect x="488" y="282" width="1.3" height="4" fill="#00ffff"/>
<rect x="488" y="288" width="1.3" height="4" fill="#00ffff"/>
<rect x="488" y="294" width="1.3" height="4" fill="#00ffff"/>
<rect x="488" y="300" width="1.3" height="4" fill="#00ffff"/>
<rect x="488" y="306" width="1.3" height="4" fill="#00ffff"/>
<rect x="488" y="312" width="1.3" height="4" fill="#00ffff"/>
<rect x="488" y="318" width="1.3" height="4" fill="#00ffff"/>
<rect x="488" y="324" width="1.3" height="4" fill="#00ffff"/>
<rect x="488" y="330" width="1.3" height="4" fill="#00ffff"/>
<rect x="488" y="336" width="1.3" height="4" fill="#00ffff"/>
<rect x="488" y="342" width="1.3" height="4" fill="#00ffff"/>
<rect x="488" y="348" width="1.3" height="4" fill="#00ffff"/>
<rect x="488" y="354" width="1.3" height="4" fill="#00ffff"/>
<rect x="488" y="360" width="1.3" height="4" fill="#00ffff"/>
<rect x="488" y="366" width="1.3" height="4" fill="#00ffff"/>
<rect x="488" y="372" width="1.3" height="4" fill="#00ffff"/>
<rect x="488" y="378" width="1.3" height="4" fill="#00ffff"/>
<rect x="488" y="384" width="1.3" height="4" fill="#00ffff"/>
<rect x="488" y="390" width="1.3" height="4" fill="#00ffff"/>
<rect x="488" y="396" width="1.3" height="4" fill="#00ffff"/>
<rect x="488" y="402" width="1.3" height="4" fill="#00ffff"/>
<rect x="488" y="408" width="1.3" height="4" fill="#00ffff"/>
<rect x="488" y="414" width="1.3" height="4" fill="#00ffff"/>
<rect x="488" y="420" width="1.3" height="4" fill="#00ffff"/>
<rect x="488" y="426" width="1.3" height="4" fill="#00ffff"/>
<rect x="488" y="432" width="1.3" height="4" fill="#00ffff"/>
<rect x="488" y="438" width="1.3" height="4" fill="#00ffff"/>
<rect x="488" y="444" width="1.3" height="4" fill="#00ffff"/>
<rect x="488" y="450" width="1.3" height="4" fill="#00ffff"/>
<rect x="488" y="456" width="1.3" height="4" fill="#00ffff"/>
<rect x="488" y="462" width="1.3" height="4" fill="#00ffff"/>
<rect x="488" y="468" width="1.3" height="4" fill="#00ffff"/>
<rect x="488" y="474" width="1.3" height="4" fill="#00ffff"/>
<rect x="488" y="480" width="1.3" height="4" fill="#00ffff"/>
<rect x="488" y="486" width="1.3" height="4" fill="#00ffff"/>
<rect x="696" y="162" width="1.3" height="4" fill="#00ffff"/>
<rect x="696" y="168" width="1.3" height="4" fill="#00ffff"/>
<rect x="696" y="174" width="1.3" height="4" fill="#00ffff"/>
<rect x="696" y="180" width="1.3" height="4" fill="#00ffff"/>
<rect x="696" y="186" width="1.3" height="4" fill="#00ffff"/>
<rect x="696" y="192" width="1.3" height="4" fill="#00ffff"/>
<rect x="696" y="198" width="1.3" height="4" fill="#00ffff"/>
<rect x="696" y="204" width="1.3" height="4" fill="#00ffff"/>
<rect x="696" y="210" width="1.3" height="4" fill="#00ffff"/>
<rect x="696" y="216" width="1.3" height="4" fill="#00ffff"/>
<rect x="696" y="222" width="1.3" height="4" fill="#00ffff"/>
<rect x="696" y="228" width="1.3" height="4" fill="#00ffff"/>
<rect x="696" y="234" width="1.3" height="4" fill="#00ffff"/>
<rect x="696" y="240" width="1.3" height="4" fill="#00ffff"/>
<rect x="696" y="246" width="1.3" height="4" fill="#00ffff"/>
<rect x="696" y="252" width="1.3" height="4" fill="#00ffff"/>
<rect x="696" y="258" width="1.3" height="4" fill="#00ffff"/>
<rect x="696" y="264" width="1.3" height="4" fill="#00ffff"/>
<rect x="696" y="270" width="1.3" height="4" fill="#00ffff"/>
<rect x="696" y="276" width="1.3" height="4" fill="#00ffff"/>
<rect x="696" y="282" width="1.3" height="4" fill="#00ffff"/>
<rect x="696" y="288" width="1.3" height="4" fill="#00ffff"/>
<rect x="696" y="294" width="1.3" height="4" fill="#00ffff"/>
<rect x="696" y="300" width="1.3" height="4" fill="#00ffff"/>
<rect x="696" y="306" width="1.3" height="4" fill="#00ffff"/>
<rect x="696" y="312" width="1.3" height="4" fill="#00ffff"/>
<rect x="696" y="318" width="1.3" height="4" fill="#00ffff"/>
<rect x="696" y="324" width="1.3" height="4" fill="#00ffff"/>
<rect x="696" y="330" width="1.3" height="4" fill="#00ffff"/>
<rect x="696" y="336" width="1.3" height="4" fill="#00ffff"/>
<rect x="696" y="342" width="1.3" height="4" fill="#00ffff"/>
<rect x="696" y="348" width="1.3" height="4" fill="#00ffff"/>
<rect x="696" y="354" width="1.3" height="4" fill="#00ffff"/>
<rect x="696" y="360" width="1.3" height="4" fill="#00ffff"/>
<rect x="696" y="366" width="1.3" height="4" fill="#00ffff"/>
<rect x="696" y="372" width="1.3" height="4" fill="#00ffff"/>
<rect x="696" y="378" width="1.3" height="4" fill="#00ffff"/>
<rect x="696" y="384" width="1.3" height="4" fill="#00ffff"/>
<rect x="696" y="390" width="1.3" height="4" fill="#00ffff"/>
<rect x="696" y="396" width="1.3" height="4" fill="#00ffff"/>
<rect x="696" y="402" width="1.3" height="4" fill="#00ffff"/>
<rect x="696" y="408" width="1.3" height="4" fill="#00ffff"/>
<rect x="696" y="414" width="1.3" height="4" fill="#00ffff"/>
<rect x="696" y="420" width="1.3" height="4" fill="#00ffff"/>
<rect x="696" y="426" width="1.3" height="4" fill="#00ffff"/>
<rect x="696" y="432" width="1.3" height="4" fill="#00ffff"/>
<rect x="696" y="438" width="1.3" height="4" fill="#00ffff"/>
<rect x="696" y="444" width="1.3" height="4" fill="#00ffff"/>
<rect x="696" y="450" width="1.3" height="4" fill="#00ffff"/>
<rect x="696" y="456" width="1.3" height="4" fill="#00ffff"/>
<rect x="696" y="462" width="1.3" height="4" fill="#00ffff"/>
<rect x="696" y="468" width="1.3" height="4" fill="#00ffff"/>
<rect x="696" y="474" width="1.3" height="4" fill="#00ffff"/>
<rect x="696" y="480" width="1.3" height="4" fill="#00ffff"/>
<rect x="696" y="486" width="1.3" height="4" fill="#00ffff"/>
</svg>
<div id="stamps" style="position:absolute;left:0;top:0;width:140px;height:326px;will-change:transform">
<div class="ts" style="top:17.0px;left:0.0px;height:13px;font-size:16.6px;line-height:0"><span style="position:absolute;left:0;top:-4.7px;line-height:20px;display:inline-block;transform:scaleX(0.9);transform-origin:0 0">00:31:30.006</span></div>
<div class="ts" style="top:38.0px;left:0.0px;height:13px;font-size:16.6px;line-height:0"><span style="position:absolute;left:0;top:-4.7px;line-height:20px;display:inline-block;transform:scaleX(0.9);transform-origin:0 0">00:31:27.913</span></div>
<div class="ts" style="top:59.0px;left:0.0px;height:13px;font-size:16.6px;line-height:0"><span style="position:absolute;left:0;top:-4.7px;line-height:20px;display:inline-block;transform:scaleX(0.9);transform-origin:0 0">00:31:25.779</span></div>
<div class="ts" style="top:80.0px;left:0.0px;height:13px;font-size:16.6px;line-height:0"><span style="position:absolute;left:0;top:-4.7px;line-height:20px;display:inline-block;transform:scaleX(0.9);transform-origin:0 0">00:31:23.686</span></div>
<div class="ts" style="top:101.0px;left:0.0px;height:13px;font-size:16.6px;line-height:0"><span style="position:absolute;left:0;top:-4.7px;line-height:20px;display:inline-block;transform:scaleX(0.9);transform-origin:0 0">00:31:21.593</span></div>
<div class="ts" style="top:122.0px;left:0.0px;height:13px;font-size:16.6px;line-height:0"><span style="position:absolute;left:0;top:-4.7px;line-height:20px;display:inline-block;transform:scaleX(0.9);transform-origin:0 0">00:31:19.500</span></div>
<div class="ts" style="top:143.0px;left:0.0px;height:13px;font-size:16.6px;line-height:0"><span style="position:absolute;left:0;top:-4.7px;line-height:20px;display:inline-block;transform:scaleX(0.9);transform-origin:0 0">00:31:17.406</span></div>
<div class="ts" style="top:164.0px;left:0.0px;height:13px;font-size:16.6px;line-height:0"><span style="position:absolute;left:0;top:-4.7px;line-height:20px;display:inline-block;transform:scaleX(0.9);transform-origin:0 0">00:31:15.313</span></div>
<div class="ts" style="top:185.0px;left:0.0px;height:13px;font-size:16.6px;line-height:0"><span style="position:absolute;left:0;top:-4.7px;line-height:20px;display:inline-block;transform:scaleX(0.9);transform-origin:0 0">00:31:13.178</span></div>
<div class="ts" style="top:206.0px;left:0.0px;height:13px;font-size:16.6px;line-height:0"><span style="position:absolute;left:0;top:-4.7px;line-height:20px;display:inline-block;transform:scaleX(0.9);transform-origin:0 0">00:31:11.086</span></div>
<div class="ts" style="top:227.0px;left:0.0px;height:13px;font-size:16.6px;line-height:0"><span style="position:absolute;left:0;top:-4.7px;line-height:20px;display:inline-block;transform:scaleX(0.9);transform-origin:0 0">00:31:08.993</span></div>
<div class="ts" style="top:248.0px;left:0.0px;height:13px;font-size:16.6px;line-height:0"><span style="position:absolute;left:0;top:-4.7px;line-height:20px;display:inline-block;transform:scaleX(0.9);transform-origin:0 0">00:31:06.899</span></div>
<div class="ts" style="top:269.0px;left:0.0px;height:13px;font-size:16.6px;line-height:0"><span style="position:absolute;left:0;top:-4.7px;line-height:20px;display:inline-block;transform:scaleX(0.9);transform-origin:0 0">00:31:04.806</span></div>
<div class="ts" style="top:290.0px;left:0.0px;height:13px;font-size:16.6px;line-height:0"><span style="position:absolute;left:0;top:-4.7px;line-height:20px;display:inline-block;transform:scaleX(0.9);transform-origin:0 0">00:31:02.712</span></div>
<div class="ts" style="top:311.0px;left:0.0px;height:13px;font-size:16.6px;line-height:0"><span style="position:absolute;left:0;top:-4.7px;line-height:20px;display:inline-block;transform:scaleX(0.9);transform-origin:0 0">00:31:00.578</span></div>
</div>
</div>
<div id="ruler" class="abs" style="left:74px;top:493px;width:1037px;height:48px;border:1px solid #f0f0f0;border-radius:4px;overflow:hidden">
<svg style="left:0;top:0" width="1037" height="48" viewBox="75 494 1037 48" shape-rendering="crispEdges">
<rect x="75" y="533" width="1" height="8" fill="#d0d0d0"/>
<rect x="92" y="533" width="1" height="8" fill="#d0d0d0"/>
<rect x="108" y="533" width="1" height="8" fill="#d0d0d0"/>
<rect x="124" y="526" width="1" height="15" fill="#d0d0d0"/>
<rect x="140" y="533" width="1" height="8" fill="#d0d0d0"/>
<rect x="156" y="533" width="1" height="8" fill="#d0d0d0"/>
<rect x="173" y="533" width="1" height="8" fill="#d0d0d0"/>
<rect x="189" y="533" width="1" height="8" fill="#d0d0d0"/>
<rect x="205" y="494" width="1" height="48" fill="#c8c8c8"/>
<rect x="221" y="533" width="1" height="8" fill="#d0d0d0"/>
<rect x="237" y="533" width="1" height="8" fill="#d0d0d0"/>
<rect x="254" y="533" width="1" height="8" fill="#d0d0d0"/>
<rect x="270" y="533" width="1" height="8" fill="#d0d0d0"/>
<rect x="286" y="526" width="1" height="15" fill="#d0d0d0"/>
<rect x="302" y="533" width="1" height="8" fill="#d0d0d0"/>
<rect x="318" y="533" width="1" height="8" fill="#d0d0d0"/>
<rect x="335" y="533" width="1" height="8" fill="#d0d0d0"/>
<rect x="351" y="533" width="1" height="8" fill="#d0d0d0"/>
<rect x="367" y="494" width="1" height="48" fill="#c8c8c8"/>
<rect x="383" y="533" width="1" height="8" fill="#d0d0d0"/>
<rect x="399" y="533" width="1" height="8" fill="#d0d0d0"/>
<rect x="416" y="533" width="1" height="8" fill="#d0d0d0"/>
<rect x="432" y="533" width="1" height="8" fill="#d0d0d0"/>
<rect x="448" y="526" width="1" height="15" fill="#d0d0d0"/>
<rect x="464" y="533" width="1" height="8" fill="#d0d0d0"/>
<rect x="480" y="533" width="1" height="8" fill="#d0d0d0"/>
<rect x="497" y="533" width="1" height="8" fill="#d0d0d0"/>
<rect x="513" y="533" width="1" height="8" fill="#d0d0d0"/>
<rect x="529" y="494" width="1" height="48" fill="#c8c8c8"/>
<rect x="545" y="533" width="1" height="8" fill="#d0d0d0"/>
<rect x="561" y="533" width="1" height="8" fill="#d0d0d0"/>
<rect x="578" y="533" width="1" height="8" fill="#d0d0d0"/>
<rect x="594" y="533" width="1" height="8" fill="#d0d0d0"/>
<rect x="610" y="526" width="1" height="15" fill="#d0d0d0"/>
<rect x="626" y="533" width="1" height="8" fill="#d0d0d0"/>
<rect x="642" y="533" width="1" height="8" fill="#d0d0d0"/>
<rect x="659" y="533" width="1" height="8" fill="#d0d0d0"/>
<rect x="675" y="533" width="1" height="8" fill="#d0d0d0"/>
<rect x="691" y="494" width="1" height="48" fill="#c8c8c8"/>
<rect x="707" y="533" width="1" height="8" fill="#d0d0d0"/>
<rect x="723" y="533" width="1" height="8" fill="#d0d0d0"/>
<rect x="740" y="533" width="1" height="8" fill="#d0d0d0"/>
<rect x="756" y="533" width="1" height="8" fill="#d0d0d0"/>
<rect x="772" y="526" width="1" height="15" fill="#d0d0d0"/>
<rect x="788" y="533" width="1" height="8" fill="#d0d0d0"/>
<rect x="804" y="533" width="1" height="8" fill="#d0d0d0"/>
<rect x="821" y="533" width="1" height="8" fill="#d0d0d0"/>
<rect x="837" y="533" width="1" height="8" fill="#d0d0d0"/>
<rect x="853" y="494" width="1" height="48" fill="#c8c8c8"/>
<rect x="869" y="533" width="1" height="8" fill="#d0d0d0"/>
<rect x="885" y="533" width="1" height="8" fill="#d0d0d0"/>
<rect x="902" y="533" width="1" height="8" fill="#d0d0d0"/>
<rect x="918" y="533" width="1" height="8" fill="#d0d0d0"/>
<rect x="934" y="526" width="1" height="15" fill="#d0d0d0"/>
<rect x="950" y="533" width="1" height="8" fill="#d0d0d0"/>
<rect x="966" y="533" width="1" height="8" fill="#d0d0d0"/>
<rect x="982" y="533" width="1" height="8" fill="#d0d0d0"/>
<rect x="999" y="533" width="1" height="8" fill="#d0d0d0"/>
<rect x="1015" y="494" width="1" height="48" fill="#c8c8c8"/>
<rect x="1031" y="533" width="1" height="8" fill="#d0d0d0"/>
<rect x="1047" y="533" width="1" height="8" fill="#d0d0d0"/>
<rect x="1064" y="533" width="1" height="8" fill="#d0d0d0"/>
<rect x="1080" y="533" width="1" height="8" fill="#d0d0d0"/>
<rect x="1096" y="526" width="1" height="15" fill="#d0d0d0"/>
</svg>
<svg style="left:0;top:0" width="1037" height="48" viewBox="75 494 1037 48">
<defs><linearGradient id="bm" x1="0" y1="0" x2="0" y2="1"><stop offset="0" stop-color="#3aa0ff"/><stop offset="1" stop-color="#1a6fd8"/></linearGradient></defs>
<path d="M478 495.5 L488 503 L478 510.5 Z" fill="url(#bm)"/>
<path d="M711 495.5 L700.5 503 L711 510.5 Z" fill="url(#bm)"/>
<path d="M594 495 L602.2 542 L587.2 542 Z" fill="#8c8c8c"/>
<path d="M594.6 497 L602.2 542 L588.8 542 Z" fill="#ff0000"/>
</svg>
</div>
<div id="spec" class="panel" style="left:29px;top:555px;width:1087px;height:132px">
<svg style="left:0;top:0;will-change:transform" width="1087" height="132" viewBox="29 555 1087 132">
<rect x="90" y="583.4" width="1026" height="1.3" fill="#74747c"/>
<rect x="90" y="604.4" width="1026" height="1.3" fill="#74747c"/>
<rect x="90" y="625.5" width="1026" height="1.3" fill="#74747c"/>
<rect x="90" y="646.6" width="1026" height="1.3" fill="#74747c"/>
<rect x="90" y="667.6" width="1026" height="1.3" fill="#74747c"/>
<rect x="94" y="563.5" width="2.1" height="115" fill="#8e8e96"/>
<text transform="translate(84.6 589.6) scale(0.9 1)" x="0" y="0" text-anchor="end" font-family="DejaVu Sans, sans-serif" font-size="16.3" fill="#e8e8e8">-100</text>
<text transform="translate(84.6 610.6) scale(0.9 1)" x="0" y="0" text-anchor="end" font-family="DejaVu Sans, sans-serif" font-size="16.3" fill="#e8e8e8">-120</text>
<text transform="translate(84.6 631.7) scale(0.9 1)" x="0" y="0" text-anchor="end" font-family="DejaVu Sans, sans-serif" font-size="16.3" fill="#e8e8e8">-140</text>
<text transform="translate(84.6 652.8) scale(0.9 1)" x="0" y="0" text-anchor="end" font-family="DejaVu Sans, sans-serif" font-size="16.3" fill="#e8e8e8">-160</text>
<text transform="translate(84.6 673.9) scale(0.9 1)" x="0" y="0" text-anchor="end" font-family="DejaVu Sans, sans-serif" font-size="16.3" fill="#e8e8e8">-180</text>
<polyline points="95.4 620.5 99.6 620.5 101.0 627.5 104.3 627.5 105.2 622.8 107.1 622.8 107.6 619.1 109.5 619.1 109.9 615.3 114.1 615.3 114.1 628.9 117.4 628.9 117.4 616.5 120.7 616.5 120.7 625.2 124.9 625.2 125.4 613.0 129.1 613.0 129.1 627.1 132.4 627.1 132.4 618.1 135.2 618.1 135.7 628.0 139.0 628.0 139.0 612.5 141.8 612.5 142.3 622.8 144.1 622.8 144.6 625.6 147.4 625.6 147.4 621.0 151.2 621.0 151.2 624.2 154.0 624.2 154.4 614.9 157.7 614.9 157.7 622.8 160.1 622.8 160.5 618.6 163.4 618.6 163.4 621.0 166.6 621.0 166.6 617.7 169.9 617.7 170.4 625.6 173.2 625.6 173.7 615.8 176.5 615.8 176.5 628.0 181.2 628.0 181.6 629.9 184.9 629.9 185.4 623.3 188.7 623.3 189.1 630.8 191.9 630.8 192.4 628.9 194.7 628.9 195.2 623.8 197.6 623.8 198.0 630.3 200.8 630.3 200.8 617.7 203.7 617.7 204.1 616.7 207.9 616.7 207.9 620.0 210.2 620.0 210.7 620.0 213.5 620.0 213.5 633.6 216.8 633.6 216.8 621.0 219.1 621.0 219.6 633.6 222.0 633.6 222.0 634.1 223.9 634.1 223.9 620.4 228.2 620.4 228.8 613.6 233.2 613.6 233.2 616.7 235.1 616.7 235.7 631.6 238.8 631.6 238.8 621.0 241.9 621.0 242.5 627.2 245.0 627.2 245.6 620.4 251.2 620.4 251.9 622.3 253.7 622.3 254.4 629.1 257.5 629.1 257.5 620.4 261.2 620.4 261.2 622.3 266.8 622.3 267.4 625.4 270.5 625.4 270.5 620.4 272.4 620.4 272.4 611.7 276.1 611.7 276.1 627.9 279.9 627.9 279.9 629.1 282.4 629.1 283.0 624.8 285.5 624.8 285.5 630.4 289.2 630.4 289.2 614.2 292.3 614.2 292.9 617.3 295.4 617.3 295.4 621.0 301.7 621.0 301.7 624.1 304.1 624.1 304.1 615.4 307.9 615.4 307.9 621.0 310.4 621.0 311.0 629.7 313.5 629.7 313.5 632.8 317.2 632.8 317.8 626.0 320.3 626.0 320.9 632.8 323.4 632.8 323.4 621.0 325.9 621.0 325.9 615.4 329.7 615.4 329.7 634.7 333.4 634.7 334.0 617.9 336.5 617.9 336.5 621.0 339.6 621.0 339.6 634.1 342.1 634.1 342.7 617.9 345.2 617.9 345.2 628.5 348.9 628.5 348.9 626.6 352.1 626.6 352.7 623.5 355.2 623.5 355.2 621.0 357.7 621.0 357.7 649.6 361.4 649.6 362.0 621.0 363.9 621.0 363.9 624.1 366.4 624.1 367.0 620.4 370.7 620.4 371.3 617.3 373.8 617.3 373.8 640.9 376.3 640.9 376.3 648.4 380.1 648.4 380.7 624.1 383.2 624.1 383.2 631.0 386.3 631.0 386.3 618.5 389.4 618.5 389.4 623.5 392.0 623.5 392.0 624.8 395.1 624.8 395.1 623.5 398.2 623.5 398.2 613.6 401.3 613.6 401.3 628.5 403.8 628.5 403.8 636.0 408.2 636.0 408.2 614.2 411.3 614.2 411.9 631.0 414.4 631.0 415.0 621.0 417.5 621.0 417.5 631.6 421.2 631.6 421.2 624.8 423.1 624.8 423.1 616.0 427.5 616.0 427.5 620.4 430.6 620.4 430.6 624.8 433.7 624.8 433.7 621.6 438.7 621.6 438.7 636.6 443.0 636.6 443.0 617.9 445.5 617.9 445.5 616.7 448.6 616.7 448.6 624.8 451.7 624.8 451.7 615.4 458.0 615.4 458.6 620.4 461.7 620.4 461.7 627.9 464.8 627.9 464.8 616.7 467.3 616.7 467.3 619.8 470.4 619.8 470.4 614.2 473.5 614.2 473.5 626.6 476.6 626.6 476.6 621.0 480.4 621.0 480.4 623.5 483.5 623.5 483.5 627.9 486.6 627.9 486.6 619.8 489.7 619.8 489.7 628.5 492.8 628.5 492.8 627.2 495.3 627.2 495.3 615.4 499.0 615.4 499.7 622.9 502.1 622.9 502.8 616.0 505.3 616.0 505.3 617.9 508.4 617.9 508.4 616.7 510.9 616.7 510.9 636.0 514.6 636.0 514.6 622.3 517.7 622.3 518.3 624.8 520.8 624.8 520.8 627.2 523.9 627.2 523.9 629.7 527.0 629.7 527.0 619.2 529.5 619.2 529.5 637.2 533.3 637.2 533.3 624.8 536.4 624.8 536.4 620.4 539.5 620.4 539.5 622.9 542.6 622.9 542.6 623.5 545.7 623.5 545.7 618.5 548.2 618.5 548.8 622.9 551.3 622.9 551.9 617.3 555.0 617.3 555.0 622.9 558.1 622.9 558.8 618.5 562.0 618.5 562.0 617.9 564.5 617.9 564.5 622.9 567.6 622.9 567.6 609.2 571.3 609.2 571.3 601.7 574.4 601.7 574.4 607.3 577.6 607.3 577.6 620.4 580.7 620.4 580.7 614.2 583.8 614.2 583.8 616.7 586.3 616.7 586.9 624.1 590.0 624.1 590.0 632.2 593.1 632.2 593.1 636.0 596.2 636.0 596.2 627.2 599.3 627.2 599.3 624.1 601.8 624.1 601.8 636.0 604.9 636.0 604.9 614.8 608.7 614.8 608.7 627.9 611.8 627.9 611.8 614.8 615.5 614.8 615.5 620.4 618.0 620.4 618.0 616.0 621.1 616.0 621.1 623.5 624.2 623.5 624.2 624.8 627.3 624.8 627.3 629.1 630.5 629.1 630.5 624.8 633.6 624.8 633.6 620.4 639.2 620.4 639.8 628.5 642.9 628.5 642.9 621.6 646.6 621.6 646.6 627.9 649.7 627.9 649.7 622.3 652.2 622.3 652.9 630.4 655.3 630.4 655.3 617.9 658.5 617.9 659.1 619.8 660.9 619.8 660.9 641.6 665.3 641.6 665.9 627.2 668.4 627.2 668.4 622.9 671.5 622.9 671.5 624.1 674.0 624.1 674.6 621.0 677.1 621.0 677.7 628.5 680.9 628.5 681.5 620.4 684.0 620.4 684.0 621.6 687.1 621.6 687.1 618.5 690.2 618.5 690.2 617.3 692.7 617.3 693.3 620.4 695.8 620.4 696.4 624.8 698.9 624.8 699.5 616.0 702.6 616.0 703.3 624.8 705.1 624.8 705.7 630.4 708.9 630.4 708.9 617.9 714.5 617.9 714.5 631.6 718.2 631.6 718.8 622.3 721.3 622.3 721.9 621.0 724.4 621.0 725.0 626.0 730.0 626.0 730.0 622.3 732.0 622.3 732.0 622.9 733.9 622.9 733.9 621.6 737.0 621.6 737.0 617.3 740.1 617.3 740.7 623.5 743.2 623.5 743.2 627.2 746.3 627.2 746.3 624.8 751.9 624.8 751.9 612.3 756.9 612.3 756.9 614.2 759.4 614.2 759.4 619.8 761.9 619.8 761.9 659.0 765.6 659.0 765.6 617.3 768.1 617.3 768.1 614.2 771.2 614.2 771.2 616.7 774.9 616.7 775.6 622.3 778.0 622.3 778.0 626.6 783.6 626.6 783.6 637.8 787.4 637.8 787.4 626.0 790.5 626.0 790.5 617.3 793.6 617.3 793.6 616.0 796.7 616.0 796.7 626.6 799.8 626.6 799.8 624.1 802.9 624.1 802.9 637.2 806.1 637.2 806.1 636.0 809.8 636.0 809.8 616.7 812.9 616.7 812.9 628.5 817.9 628.5 818.5 624.8 821.0 624.8 821.0 616.0 824.7 616.0 824.7 627.2 831.6 627.2 831.6 619.8 834.7 619.8 834.7 622.9 837.8 622.9 837.8 629.7 840.3 629.7 840.3 621.0 843.4 621.0 843.4 616.7 847.1 616.7 847.1 631.0 850.2 631.0 850.2 632.2 853.3 632.2 853.3 619.2 856.5 619.2 856.5 620.4 858.9 620.4 858.9 624.1 862.1 624.1 862.1 631.0 865.8 631.0 865.8 575.0 869.5 575.0 869.5 618.5 872.0 618.5 872.0 613.6 874.5 613.6 874.5 614.8 877.6 614.8 877.6 621.6 880.7 621.6 880.7 608.0 884.5 608.0 884.5 617.3 887.6 617.3 887.6 623.5 890.1 623.5 890.7 639.1 893.8 639.1 893.8 628.5 896.3 628.5 896.3 618.5 899.4 618.5 899.4 621.0 902.0 621.0 902.0 621.0 906.4 621.0 906.4 617.3 908.8 617.3 908.8 612.9 912.6 612.9 912.6 623.5 915.1 623.5 915.1 634.1 918.8 634.1 918.8 637.8 921.9 637.8 921.9 614.8 925.0 614.8 925.0 634.7 928.1 634.7 928.1 630.4 931.2 630.4 931.2 625.4 933.7 625.4 933.7 616.0 938.1 616.0 938.1 627.9 941.2 627.9 941.2 623.5 943.7 623.5 943.7 619.2 946.8 619.2 947.4 630.4 949.9 630.4 949.9 627.2 953.0 627.2 953.0 623.5 959.2 623.5 959.9 625.4 962.4 625.4 963.0 623.5 965.5 623.5 965.5 621.0 968.6 621.0 968.6 624.8 971.7 624.8 971.7 631.6 975.4 631.6 976.1 621.0 978.5 621.0 978.5 618.5 981.7 618.5 981.7 620.4 984.1 620.4 984.1 609.8 987.9 609.8 987.9 621.0 990.4 621.0 990.4 628.5 994.1 628.5 994.7 621.0 997.2 621.0 997.2 614.2 1000.3 614.2 1000.9 620.4 1003.4 620.4 1003.4 623.5 1006.5 623.5 1006.5 611.7 1010.3 611.7 1010.3 620.4 1013.4 620.4 1013.4 618.5 1015.9 618.5 1015.9 624.8 1019.0 624.8 1019.0 613.6 1022.1 613.6 1022.1 625.4 1024.6 625.4 1024.6 626.6 1027.7 626.6 1028.3 624.1 1033.9 624.1 1034.5 634.7 1037.7 634.7 1037.7 614.8 1040.8 614.8 1040.8 616.7 1043.9 616.7 1043.9 621.0 1047.0 621.0 1047.6 616.7 1050.7 616.7 1050.7 617.3 1055.7 617.3 1056.3 627.2 1059.4 627.2 1059.4 624.8 1062.5 624.8 1062.5 616.0 1065.7 616.0 1066.3 621.0 1069.4 621.0 1069.4 619.2 1072.0 619.2 1072.0 625.7 1076.2 625.7 1076.2 619.7 1077.5 619.7 1077.9 615.8 1080.9 615.8 1081.4 628.8 1085.3 628.8 1085.3 619.7 1089.2 619.7 1089.2 621.4 1093.1 621.4 1093.5 629.6 1097.4 629.6 1097.4 621.0 1099.6 621.0 1100.0 617.1 1103.9 617.1 1103.9 618.4 1109.1 618.4 1109.5 614.9 1113.0 614.9 1113.0 628.8 1116.5 628.8" fill="none" stroke="#fff" stroke-width="2.25" stroke-linejoin="miter"/>
</svg></div>
<div id="hist" class="panel" style="left:1134px;top:162px;width:212px;height:417px">
<svg style="left:0;top:0;will-change:transform" width="212" height="417" viewBox="1134 162 212 417">
<rect x="1182.5" y="162" width="1.3" height="374" fill="#7c7c85"/>
<rect x="1216.8" y="162" width="1.3" height="374" fill="#7c7c85"/>
<rect x="1250.9" y="162" width="1.3" height="374" fill="#7c7c85"/>
<rect x="1285.3" y="162" width="1.3" height="374" fill="#7c7c85"/>
<rect x="1319.8" y="162" width="1.3" height="374" fill="#7c7c85"/>
<rect x="1153" y="531" width="184" height="1.5" fill="#9a9aa2"/>
<polyline points="1229.7 162.0 1229.7 164.0 1231.7 164.0 1231.7 165.0 1230.2 165.0 1230.2 166.0 1232.8 166.0 1232.8 167.5 1229.1 167.5 1229.1 168.5 1228.5 168.5 1228.5 169.5 1235.5 169.5 1235.5 170.5 1227.3 170.5 1227.3 172.5 1227.5 172.5 1227.5 173.5 1233.1 173.5 1233.1 174.5 1233.6 174.5 1233.6 175.5 1233.1 175.5 1233.1 177.5 1235.0 177.5 1235.0 178.5 1235.2 178.5 1235.2 180.0 1231.4 180.0 1231.4 181.0 1233.9 181.0 1233.9 182.0 1232.1 182.0 1232.1 183.0 1229.5 183.0 1229.5 184.0 1232.7 184.0 1232.7 185.5 1227.7 185.5 1227.7 187.0 1227.2 187.0 1227.2 188.0 1234.2 188.0 1234.2 189.5 1232.6 189.5 1232.6 190.5 1232.8 190.5 1232.8 192.0 1230.9 192.0 1230.9 193.0 1231.1 193.0 1231.1 194.5 1231.4 194.5 1231.4 196.5 1231.7 196.5 1231.7 198.5 1229.9 198.5 1229.9 199.5 1233.0 199.5 1233.0 200.5 1231.8 200.5 1231.8 201.5 1234.2 201.5 1234.2 203.5 1232.3 203.5 1232.3 204.5 1230.6 204.5 1230.6 205.5 1228.1 205.5 1228.1 207.0 1230.5 207.0 1230.5 209.0 1228.5 209.0 1228.5 210.0 1228.2 210.0 1228.2 211.0 1231.6 211.0 1231.6 212.0 1235.1 212.0 1235.1 213.5 1231.0 213.5 1231.0 215.5 1235.1 215.5 1235.1 217.0 1231.6 217.0 1231.6 218.0 1231.6 218.0 1231.6 219.0 1233.2 219.0 1233.2 220.0 1234.5 220.0 1234.5 221.5 1228.1 221.5 1228.1 222.5 1231.5 222.5 1231.5 223.5 1232.7 223.5 1232.7 225.5 1235.0 225.5 1235.0 227.0 1233.7 227.0 1233.7 228.5 1232.6 228.5 1232.6 230.5 1232.6 230.5 1232.6 231.5 1229.4 231.5 1229.4 232.5 1232.4 232.5 1232.4 233.5 1233.9 233.5 1233.9 234.5 1234.2 234.5 1234.2 235.5 1227.0 235.5 1227.0 237.5 1228.2 237.5 1228.2 238.5 1232.7 238.5 1232.7 239.5 1232.2 239.5 1232.2 241.0 1232.8 241.0 1232.8 242.5 1236.1 242.5 1236.1 244.5 1233.1 244.5 1233.1 245.5 1236.0 245.5 1236.0 247.0 1230.6 247.0 1230.6 248.5 1232.6 248.5 1232.6 250.5 1230.4 250.5 1230.4 251.5 1229.8 251.5 1229.8 252.5 1227.1 252.5 1227.1 253.5 1229.2 253.5 1229.2 254.5 1232.3 254.5 1232.3 255.5 1236.1 255.5 1236.1 256.5 1230.8 256.5 1230.8 257.5 1234.6 257.5 1234.6 259.5 1231.7 259.5 1231.7 261.0 1227.3 261.0 1227.3 262.0 1232.9 262.0 1232.9 263.0 1233.1 263.0 1233.1 264.5 1235.2 264.5 1235.2 266.5 1230.5 266.5 1230.5 268.5 1231.2 268.5 1231.2 270.5 1232.0 270.5 1232.0 271.5 1234.4 271.5 1234.4 273.5 1228.3 273.5 1228.3 274.5 1231.5 274.5 1231.5 276.0 1236.1 276.0 1236.1 278.0 1232.7 278.0 1232.7 279.0 1231.3 279.0 1231.3 281.0 1228.2 281.0 1228.2 283.0 1231.6 283.0 1231.6 284.0 1231.7 284.0 1231.7 285.5 1232.8 285.5 1232.8 286.5 1227.9 286.5 1227.9 287.5 1231.6 287.5 1231.6 288.5 1234.1 288.5 1234.1 289.5 1230.5 289.5 1230.5 291.5 1233.9 291.5 1233.9 292.5 1235.7 292.5 1235.7 293.5 1232.0 293.5 1232.0 294.5 1235.5 294.5 1235.5 295.5 1232.8 295.5 1232.8 296.5 1232.1 296.5 1232.1 298.0 1230.1 298.0 1230.1 299.0 1230.8 299.0 1230.8 300.0 1228.2 300.0 1228.2 301.0 1227.1 301.0 1227.1 302.0 1232.5 302.0 1232.5 304.0 1230.4 304.0 1230.4 306.0 1233.0 306.0 1233.0 308.0 1231.6 308.0 1231.6 309.5 1229.5 309.5 1229.5 311.0 1235.7 311.0 1235.7 312.5 1232.8 312.5 1232.8 313.5 1234.5 313.5 1234.5 314.5 1230.4 314.5 1230.4 316.0 1229.3 316.0 1229.3 317.5 1233.5 317.5 1233.5 319.0 1230.2 319.0 1230.2 320.0 1228.5 320.0 1228.5 322.0 1233.3 322.0 1233.3 323.0 1230.6 323.0 1230.6 324.0 1227.1 324.0 1227.1 325.5 1236.2 325.5 1236.2 327.0 1232.8 327.0 1232.8 328.0 1230.0 328.0 1230.0 329.0 1227.5 329.0 1227.5 330.0 1228.6 330.0 1228.6 331.0 1228.5 331.0 1228.5 332.0 1231.0 332.0 1231.0 334.0 1231.5 334.0 1231.5 335.0 1232.0 335.0 1232.0 336.0 1230.2 336.0 1230.2 337.0 1230.7 337.0 1230.7 339.0 1231.4 339.0 1231.4 340.0 1233.5 340.0 1233.5 341.0 1232.2 341.0 1232.2 343.0 1233.0 343.0 1233.0 345.0 1227.9 345.0 1227.9 347.0 1232.7 347.0 1232.7 348.0 1227.5 348.0 1227.5 349.0 1234.5 349.0 1234.5 350.5 1232.4 350.5 1232.4 351.5 1232.3 351.5 1232.3 352.5 1234.7 352.5 1234.7 354.0 1232.9 354.0 1232.9 355.5 1233.4 355.5 1233.4 357.5 1233.4 357.5 1233.4 358.5 1237.0 358.5 1237.0 360.0 1228.8 360.0 1228.8 361.0 1234.0 361.0 1234.0 362.5 1234.5 362.5 1234.5 364.5 1233.7 364.5 1233.7 365.5 1233.1 365.5 1233.1 366.5 1235.3 366.5 1235.3 367.5 1230.9 367.5 1230.9 369.0 1235.2 369.0 1235.2 370.0 1230.1 370.0 1230.1 371.0 1231.7 371.0 1231.7 372.0 1231.9 372.0 1231.9 373.5 1235.6 373.5 1235.6 374.5 1232.7 374.5 1232.7 376.5 1235.1 376.5 1235.1 378.0 1231.8 378.0 1231.8 379.0 1233.8 379.0 1233.8 380.5 1232.1 380.5 1232.1 381.5 1236.4 381.5 1236.4 382.5 1233.9 382.5 1233.9 383.5 1235.2 383.5 1235.2 384.5 1230.4 384.5 1230.4 386.0 1234.6 386.0 1234.6 387.0 1233.3 387.0 1233.3 388.0 1233.4 388.0 1233.4 390.0 1231.6 390.0 1231.6 391.5 1236.3 391.5 1236.3 392.5 1232.4 392.5 1232.4 393.5 1230.6 393.5 1230.6 394.5 1228.6 394.5 1228.6 395.5 1236.1 395.5 1236.1 397.0 1229.0 397.0 1229.0 398.5 1233.6 398.5 1233.6 400.0 1231.5 400.0 1231.5 402.0 1231.4 402.0 1231.4 403.0 1233.6 403.0 1233.6 404.0 1234.3 404.0 1234.3 405.0 1229.8 405.0 1229.8 406.0 1233.7 406.0 1233.7 407.5 1231.5 407.5 1231.5 408.5 1234.7 408.5 1234.7 410.5 1228.7 410.5 1228.7 411.5 1232.3 411.5 1232.3 412.5 1234.2 412.5 1234.2 413.5 1231.1 413.5 1231.1 414.5 1229.6 414.5 1229.6 415.5 1233.0 415.5 1233.0 417.0 1228.5 417.0 1228.5 418.0 1235.1 418.0 1235.1 419.5 1237.2 419.5 1237.2 421.5 1232.3 421.5 1232.3 422.5 1228.9 422.5 1228.9 424.0 1231.8 424.0 1231.8 425.0 1233.4 425.0 1233.4 426.5 1236.2 426.5 1236.2 427.5 1233.4 427.5 1233.4 428.5 1230.9 428.5 1230.9 429.5 1234.3 429.5 1234.3 430.5 1233.6 430.5 1233.6 431.5 1236.1 431.5 1236.1 432.5 1229.6 432.5 1229.6 433.5 1230.5 433.5 1230.5 434.5 1233.7 434.5 1233.7 436.5 1231.6 436.5 1231.6 437.5 1232.8 437.5 1232.8 438.5 1231.6 438.5 1231.6 440.5 1231.7 440.5 1231.7 441.5 1235.5 441.5 1235.5 442.5 1236.0 442.5 1236.0 443.5 1228.5 443.5 1228.5 444.5 1231.4 444.5 1231.4 446.5 1228.6 446.5 1228.6 447.5 1233.1 447.5 1233.1 448.5 1234.0 448.5 1234.0 450.0 1232.3 450.0 1232.3 451.0 1232.6 451.0 1232.6 452.5 1233.3 452.5 1233.3 453.5 1231.5 453.5 1231.5 455.5 1231.8 455.5 1231.8 457.0 1228.7 457.0 1228.7 458.0 1233.0 458.0 1233.0 459.5 1229.3 459.5 1229.3 461.0 1232.2 461.0 1232.2 462.0 1232.8 462.0 1232.8 463.0 1233.7 463.0 1233.7 464.0 1229.4 464.0 1229.4 465.0 1232.1 465.0 1232.1 466.5 1231.9 466.5 1231.9 467.5 1229.0 467.5 1229.0 468.5 1236.4 468.5 1236.4 470.0 1231.1 470.0 1231.1 472.0 1232.0 472.0 1232.0 473.0 1233.1 473.0 1233.1 475.0 1232.5 475.0 1232.5 476.0 1230.2 476.0 1230.2 478.0 1232.7 478.0 1232.7 479.5 1233.6 479.5 1233.6 481.5 1236.2 481.5 1236.2 482.5 1230.9 482.5 1230.9 483.5 1234.2 483.5 1234.2 485.5 1232.2 485.5 1232.2 486.5 1232.4 486.5 1232.4 488.5 1237.0 488.5 1237.0 490.0 1234.0 490.0 1234.0 491.0 1234.8 491.0 1234.8 492.0 1230.4 492.0 1230.4 493.0 1236.2 493.0 1236.2 495.0 1228.8 495.0 1228.8 497.0 1231.7 497.0 1231.7 498.0 1235.8 498.0 1235.8 499.5 1236.2 499.5 1236.2 501.0 1233.2 501.0 1233.2 502.0 1236.0 502.0 1236.0 503.5 1233.8 503.5 1233.8 505.5 1231.5 505.5 1231.5 506.5 1234.8 506.5 1234.8 507.5 1236.6 507.5 1236.6 508.5 1234.6 508.5 1234.6 510.0 1228.8 510.0 1228.8 511.0 1230.3 511.0 1230.3 513.0 1229.5 513.0 1229.5 514.5 1233.1 514.5 1233.1 515.5 1232.2 515.5 1232.2 517.5 1235.1 517.5 1235.1 519.0 1231.7 519.0 1231.7 521.0 1230.0 521.0 1230.0 522.5 1233.1 522.5 1233.1 523.5 1228.2 523.5 1228.2 525.0 1232.9 525.0 1232.9 526.0 1233.8 526.0 1233.8 527.5 1234.8 527.5 1234.8 529.5 1235.6 529.5 1235.6 530.5 1233.3 530.5 1233.3 531.5 1231.8 531.5 1231.8 532.0" fill="none" stroke="#ffa500" stroke-width="1.7" stroke-linejoin="round"/>
<path d="M1232 355.2 L1250.5 356 L1251 356.8 L1232 357.6 Z" fill="#ffa500"/>
<path d="M1232 453.8 L1247 454.6 L1247.5 455.4 L1232 456.2 Z" fill="#ffa500"/>
<polyline points="1232 162 1232 306 1234.2 307 1234.2 354 1231.4 358 1231.4 440 1232.2 441 1232.2 453 1230.8 457 1230.8 532" fill="none" stroke="#a52a2a" stroke-width="2.3" stroke-linejoin="round"/>
<path d="M1216 355.4 L1234 354.6 L1234 357.6 L1216 357 Z" fill="#a52a2a"/>
<path d="M1216 453.8 L1232.5 453 L1232.5 456 L1216 455.4 Z" fill="#a52a2a"/>
<polyline points="1238.8 162 1238.8 230 1239.3 280 1239.4 295 1241 320 1241.2 330 1240.4 332 1241.6 334 1240.6 336 1241.4 338 1241.2 344 1238.8 346 1239.2 400 1239.3 440 1238.5 441.5 1238.5 532" fill="none" stroke="#98fb98" stroke-width="2.2" stroke-linejoin="round"/>
<polyline points="1243.3 162 1243.3 230 1243.9 280 1244 295 1245.5 320 1245.6 330 1244.6 332 1246.2 334 1244.8 336 1246 338 1245.6 344 1243.1 346 1243.6 400 1243.9 440 1243.1 441.5 1243.1 532" fill="none" stroke="#ffff00" stroke-width="2.2" stroke-linejoin="round"/>
<text transform="translate(1177.3 537.3) rotate(90) scale(0.9 1)" x="0" y="0" font-family="DejaVu Sans, sans-serif" font-size="16.3" fill="#e8e8e8">-20</text>
<text transform="translate(1211.5 537.3) rotate(90) scale(0.9 1)" x="0" y="0" font-family="DejaVu Sans, sans-serif" font-size="16.3" fill="#e8e8e8">0</text>
<text transform="translate(1245.7 537.3) rotate(90) scale(0.9 1)" x="0" y="0" font-family="DejaVu Sans, sans-serif" font-size="16.3" fill="#e8e8e8">20</text>
<text transform="translate(1280.1 537.3) rotate(90) scale(0.9 1)" x="0" y="0" font-family="DejaVu Sans, sans-serif" font-size="16.3" fill="#e8e8e8">40</text>
<text transform="translate(1314.5 537.3) rotate(90) scale(0.9 1)" x="0" y="0" font-family="DejaVu Sans, sans-serif" font-size="16.3" fill="#e8e8e8">60</text>
</svg></div>
<div id="btn" class="abs" style="left:1135px;top:667px;width:205px;height:24px;border-radius:6px;background:#006064"></div>
<svg style="left:1192px;top:671px" width="18" height="17" viewBox="1192 671 18 17">
<defs><linearGradient id="cam" x1="0" y1="0" x2="0" y2="1"><stop offset="0" stop-color="#d8d8d8"/><stop offset="1" stop-color="#7c7c7c"/></linearGradient></defs>
<rect x="1195" y="672" width="6" height="3" rx="1" fill="#c8c8c8"/>
<rect x="1201" y="672.4" width="2" height="1.2" fill="#ffc020"/>
<rect x="1193.3" y="673.5" width="15.2" height="11" rx="1.5" fill="url(#cam)"/>
<rect x="1204" y="673.5" width="4.5" height="11" rx="1" fill="#505050"/>
<rect x="1205.6" y="675" width="1.2" height="8" fill="#a0a0a0"/>
<circle cx="1199.3" cy="679.3" r="4.3" fill="#8c8c8c"/>
<circle cx="1199.3" cy="679.3" r="3.5" fill="#5a98e6"/>
<circle cx="1205.5" cy="683.7" r="3.3" fill="#4c9a2a"/>
<rect x="1203.6" y="683.2" width="3.8" height="1" fill="#fff"/>
<rect x="1205" y="681.8" width="1" height="3.8" fill="#fff"/>
</svg>
<div id="labels" style="position:absolute;left:0;top:0;width:1366px;height:739px;will-change:transform;text-rendering:geometricPrecision">
<span class="t" style="left:331.00px;top:30.00px;letter-spacing:0.662px;color:#fbf174;transform:scaleX(0.85);">F<span class="s">req</span>.<span class="s">zoom</span></span>
<span class="t" style="left:404.50px;top:30.00px;letter-spacing:-0.150px;color:#00ff00;">100.0</span>
<span class="t" style="left:450.20px;top:30.00px;letter-spacing:0.750px;color:#fbf174;">[X]</span>
<span class="t" style="left:388.30px;top:109.60px;letter-spacing:0.080px;color:#00ff00;">32 000</span>
<span class="t" style="left:443.10px;top:109.60px;letter-spacing:0.533px;color:#fbf174;">[H<span class="s">z</span>]</span>
<span class="t" style="left:507.90px;top:20.60px;letter-spacing:0.542px;color:#fbf174;transform:scaleX(0.85);">P<span class="s">eak</span> <span class="s">interval</span> <span class="s">freq</span>.[H<span class="s">z</span>]:</span>
<span class="t" style="left:657.90px;top:20.60px;letter-spacing:0.100px;color:#00ff00;">143 047 000</span>
<span class="t" style="left:507.90px;top:45.80px;letter-spacing:0.682px;color:#fbf174;transform:scaleX(0.85);">D<span class="s">ownsampled</span> BW  [H<span class="s">z</span>]:</span>
<span class="t" style="left:672.10px;top:45.80px;letter-spacing:0.100px;color:#00ff00;">3 200 000</span>
<span class="t" style="left:507.90px;top:69.90px;letter-spacing:0.698px;color:#fbf174;transform:scaleX(0.85);">R<span class="s">esolution</span> [H<span class="s">z</span>]:</span>
<span class="t" style="left:698.50px;top:69.90px;letter-spacing:-0.150px;color:#00ff00;">97.66</span>
<span class="t" style="left:507.90px;top:94.90px;letter-spacing:0.859px;color:#fbf174;transform:scaleX(0.85);">FFT <span class="s">points</span>:</span>
<span class="t" style="left:592.50px;top:94.90px;letter-spacing:-0.150px;color:#00ff00;">327</span>
<span class="t" style="left:647.10px;top:94.90px;letter-spacing:0.471px;color:#fbf174;transform:scaleX(0.85);"><span class="s">of</span></span>
<span class="t" style="left:695.50px;top:94.90px;letter-spacing:-0.150px;color:#00ff00;">32768</span>
<span class="t" style="left:508.90px;top:120.00px;letter-spacing:0.317px;color:#fbf174;transform:scaleX(0.85);">W<span class="s">aterfall</span> <span class="s">coverage</span> [<span class="s">ms</span>]:</span>
<span class="t" style="left:695.50px;top:120.00px;letter-spacing:-0.150px;color:#00ff00;">32600</span>
<span class="t" style="left:781.00px;top:35.90px;letter-spacing:0.941px;color:#fbf174;transform:scaleX(0.85);">F<span class="s">req</span>.<span class="s">offset</span> +/- [H<span class="s">z</span>]</span>
<span class="t" style="left:909.70px;top:35.90px;letter-spacing:0.250px;color:#00ff00;">-8000</span>
<span class="t" style="left:993.00px;top:22.70px;letter-spacing:0.389px;color:#ffff00;transform:scaleX(0.85);">P<span class="s">eak</span> <span class="s">power</span> (S)</span>
<span class="t" style="left:983.90px;top:44.00px;letter-spacing:0.287px;color:#000;transform:scaleX(0.85);">A<span class="s">verage</span> <span class="s">power</span> (N)</span>
<span class="t" style="left:988.20px;top:65.00px;letter-spacing:0.549px;color:#000;transform:scaleX(0.85);">D<span class="s">ifference</span> (S-N)</span>
<span class="t" style="left:982.60px;top:84.70px;letter-spacing:0.187px;color:#ffff00;transform:scaleX(0.85);">A<span class="s">verage</span> <span class="s">difference</span></span>
<span class="t" style="left:988.10px;top:105.50px;letter-spacing:0.378px;color:#000;transform:scaleX(0.85);">U<span class="s">pper</span> <span class="s">threshold</span></span>
<span class="t" style="left:986.10px;top:125.60px;letter-spacing:0.538px;color:#000;transform:scaleX(0.85);">L<span class="s">ower</span> <span class="s">threshold</span></span>
<span class="t" style="left:1123.10px;top:18.00px;letter-spacing:0.733px;color:#00ff00;">-117</span>
<span class="t" style="left:1153.50px;top:18.00px;letter-spacing:0.000px;color:#00ff00;transform:scaleX(0.85);"><span class="s">d</span>B<span class="s">fs</span></span>
<span class="t" style="left:1123.10px;top:38.80px;letter-spacing:0.400px;color:#00ff00;">-136</span>
<span class="t" style="left:1153.50px;top:38.80px;letter-spacing:0.000px;color:#00ff00;transform:scaleX(0.85);"><span class="s">d</span>B<span class="s">fs</span></span>
<span class="t" style="left:1136.00px;top:59.30px;letter-spacing:-0.700px;color:#00ff00;">19</span>
<span class="t" style="left:1153.50px;top:59.30px;letter-spacing:0.000px;color:#00ff00;transform:scaleX(0.85);"><span class="s">d</span>B<span class="s">fs</span></span>
<span class="t" style="left:1142.70px;top:79.60px;letter-spacing:0.000px;color:#00ff00;">8</span>
<span class="t" style="left:1153.50px;top:79.60px;letter-spacing:0.000px;color:#00ff00;transform:scaleX(0.85);"><span class="s">d</span>B<span class="s">fs</span></span>
<span class="t" style="left:1125.00px;top:100.40px;letter-spacing:-0.233px;color:#00ff00;">15.1</span>
<span class="t" style="left:1153.50px;top:100.40px;letter-spacing:0.000px;color:#00ff00;transform:scaleX(0.85);"><span class="s">d</span>B<span class="s">fs</span></span>
<span class="t" style="left:1125.00px;top:120.30px;letter-spacing:-0.233px;color:#00ff00;">12.4</span>
<span class="t" style="left:1153.50px;top:120.30px;letter-spacing:0.000px;color:#00ff00;transform:scaleX(0.85);"><span class="s">d</span>B<span class="s">fs</span></span>
<span class="t" style="left:1134.90px;top:589.80px;letter-spacing:0.632px;color:#fbf174;transform:scaleX(0.85);">P<span class="s">ower</span> <span class="s">offset</span> [<span class="s">d</span>B<span class="s">fs</span>]:</span>
<span class="t" style="left:1314.50px;top:589.80px;letter-spacing:-0.500px;color:#00ff00;">16</span>
<span class="t" style="left:1134.90px;top:626.90px;letter-spacing:0.809px;color:#fbf174;transform:scaleX(0.85);">P<span class="s">ower</span> <span class="s">zoom</span>  [ X ]</span>
<span class="t" style="left:1317.50px;top:626.90px;letter-spacing:0.000px;color:#00ff00;">2</span>
<span class="t" style="left:1211.90px;top:670.20px;letter-spacing:0.306px;color:#fbf174;transform:scaleX(0.85);"><span class="s">manual</span> <u>S</u><span class="s">hot</span></span>
<span class="t" style="left:10.90px;top:705.60px;letter-spacing:0.275px;color:#fbf174;transform:scaleX(0.85);">N<span class="s">ow</span>:</span>
<span class="t" style="left:45.50px;top:705.60px;letter-spacing:0.019px;color:#00ff00;">V <span class="s">окт</span>. 22 00:31:32 2023 GMT</span>
<span class="t" style="left:680.50px;top:706.10px;letter-spacing:0.471px;color:#fbf174;transform:scaleX(0.85);">A<span class="s">utomatic</span> <span class="s">shots</span> <span class="s">taken</span>:</span>
<span class="t" style="left:813.10px;top:706.10px;letter-spacing:0.417px;color:#00ff00;">12/9999</span>
<span class="t" style="left:925.80px;top:706.10px;letter-spacing:0.458px;color:#fbf174;transform:scaleX(0.85);">B<span class="s">rightness</span></span>
<span class="t" style="left:1085.90px;top:706.10px;letter-spacing:0.200px;color:#00ff00;">30</span>
<span class="t" style="left:1148.70px;top:706.10px;letter-spacing:0.336px;color:#fbf174;transform:scaleX(0.85);">C<span class="s">ontrast</span></span>
<span class="t" style="left:1298.90px;top:706.10px;letter-spacing:0.200px;color:#00ff00;">90</span>
<span class="t" style="left:73.40px;top:78.60px;letter-spacing:2.380px;color:#dcdcdc;font-size:8px;font-style:italic;">ECHOES</span>
<span class="t" style="left:172.00px;top:512.60px;letter-spacing:0.130px;color:#00cfd0;">143 035 000</span>
<span class="t" style="left:334.00px;top:512.60px;letter-spacing:0.130px;color:#00cfd0;">143 040 000</span>
<span class="t" style="left:496.00px;top:512.60px;letter-spacing:0.130px;color:#00cfd0;">143 045 000</span>
<span class="t" style="left:658.00px;top:512.60px;letter-spacing:0.130px;color:#00cfd0;">143 050 000</span>
<span class="t" style="left:820.00px;top:512.60px;letter-spacing:0.130px;color:#00cfd0;">143 055 000</span>
<span class="t" style="left:982.00px;top:512.60px;letter-spacing:0.130px;color:#00cfd0;">143 060 000</span>
<span class="t" style="left:20.60px;top:317.70px;letter-spacing:-0.900px;color:#000;"><span class="p">+</span>15</span>
<span class="t" style="left:20.60px;top:332.70px;letter-spacing:-1.300px;color:#000;"><span class="p">+</span>0</span>
<span class="t" style="left:20.60px;top:347.70px;letter-spacing:0.367px;color:#000;">--15</span>
<span class="t" style="left:20.60px;top:362.70px;letter-spacing:0.367px;color:#000;">--30</span>
<span class="t" style="left:20.60px;top:377.70px;letter-spacing:0.367px;color:#000;">--45</span>
<span class="t" style="left:20.60px;top:392.70px;letter-spacing:0.367px;color:#000;">--60</span>
<span class="t" style="left:20.60px;top:407.70px;letter-spacing:0.367px;color:#000;">--75</span>
<span class="t" style="left:20.60px;top:422.70px;letter-spacing:0.367px;color:#000;">--90</span>
<span class="t" style="left:20.60px;top:437.70px;letter-spacing:0.725px;color:#000;">--105</span>
<span class="t" style="left:20.60px;top:452.70px;letter-spacing:0.725px;color:#000;">--120</span>
<span class="t" style="left:20.60px;top:467.70px;letter-spacing:0.725px;color:#fff;">--135</span>
<span class="t" style="left:20.60px;top:482.70px;letter-spacing:0.725px;color:#fff;">--150</span>
<span class="t" style="left:20.60px;top:497.70px;letter-spacing:0.725px;color:#fff;">--165</span>
<span class="t" style="left:20.60px;top:512.70px;letter-spacing:0.725px;color:#fff;">--180</span>
<span class="t" style="left:20.60px;top:527.70px;letter-spacing:0.725px;color:#fff;">--195</span>
</div>
</body></html>
